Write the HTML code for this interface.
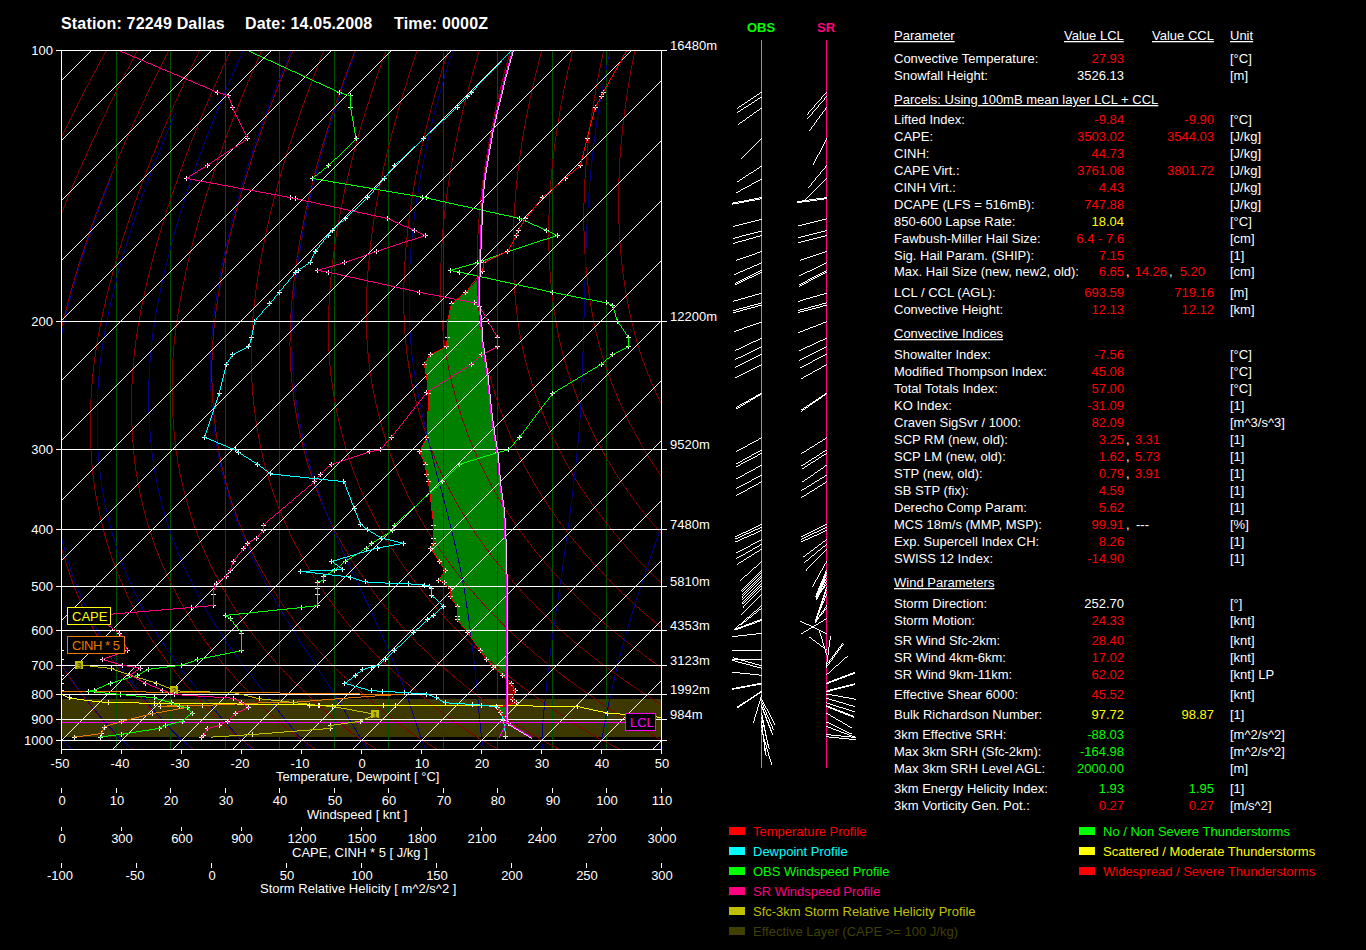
<!DOCTYPE html><html><head><meta charset="utf-8"><style>html,body{margin:0;padding:0;background:#000;overflow:hidden}svg{display:block}text{font-family:"Liberation Sans",sans-serif;font-size:13px}</style></head><body>
<svg width="1366" height="950" viewBox="0 0 1366 950" shape-rendering="crispEdges">
<rect width="1366" height="950" fill="#000"/>
<g shape-rendering="auto">
<rect x="61" y="699" width="600" height="38" fill="#3c3800"/>
<polygon points="478.8,278 465.8,292.3 451.6,303.7 447.5,321 447.3,337.4 446.5,346.8 430,354.7 424.4,364.2 425.6,372 427.6,384 428.2,393.4 427.8,429 426.8,437.3 419.7,451.8 425.2,464.4 426.8,474.7 428.4,481.6 433.9,525.8 433.1,538.4 433.1,543.9 430.7,548.2 439.4,561.3 445,570.8 438.6,580.2 444.2,582.6 450,588.9 450,596.8 457.1,606.3 457.3,616.1 457.3,619.7 467.8,632.8 480.1,650.4 486.3,659.5 493.5,667.2 502.4,675.3 506.8,681 506.8,629.2 506,574.7 505.2,543.1 503.7,511.6 499.7,484.2 497.4,455 494.2,436 491,413.9 487.1,376 483.9,354 481.6,339.2 480.8,322.6 478.4,300.5" fill="#008000"/>
<polygon points="496,707 506.8,707 505.5,721" fill="#008000"/>
<polygon points="506.8,680.5 511,683.2 515,690.3 512.6,699 516.2,702.9 506.8,706" fill="#800000"/>
</g>
<g><line x1="116.5" y1="50" x2="116.5" y2="749" stroke="#005000"/>
<line x1="170.5" y1="50" x2="170.5" y2="749" stroke="#005000"/>
<line x1="225.5" y1="50" x2="225.5" y2="749" stroke="#005000"/>
<line x1="279.5" y1="50" x2="279.5" y2="749" stroke="#005000"/>
<line x1="334.5" y1="50" x2="334.5" y2="749" stroke="#005000"/>
<line x1="388.5" y1="50" x2="388.5" y2="749" stroke="#005000"/>
<line x1="443.5" y1="50" x2="443.5" y2="749" stroke="#005000"/>
<line x1="497.5" y1="50" x2="497.5" y2="749" stroke="#005000"/>
<line x1="552.5" y1="50" x2="552.5" y2="749" stroke="#005000"/>
<line x1="606.5" y1="50" x2="606.5" y2="749" stroke="#005000"/>
<path d="M106.5 50v1m-1 0v2m-1 0v2m-1 0v2m-1 0v2m-1 0v1m-1 0v2m-1 0v2m-1 0v2m-1 0v2m-1 0v2m-1 0v2m-1-1v2m-1 0v2m-1 0v2m-1 0v2m-1 0v2m-1 0v2m-1 0v2m-1 0v2m-1 0v1m-1 0v2m-1 0v2m0-1v1m-1 0v2m-1 0v2m-1 0v2m-1 0v2m-1 0v2m-1 0v2m-1 0v2m-1 0v2m-1 0v2m-1-1v3m-1 0v2m-1 0v2m-1 0v2m-1 0v2m-1 0v2m-1 0v2m-1 0v2m-1 0v2m0-1v1m-1 0v2m-1 0v2m-1 0v2m-1 0v2m-1 0v2m0 601v1m0-1v1m1 0v1m-.5-.5h1m-1 0h1m0 1h1m-1 0h1m0 1h1m-1 0h1m0 1h1m-1 0h1m0 1h1m-1 0h1m0 1h1m-1 0h1m0 1h1m-1 0h2m-1 1h2m-1 1h2m65.5-698.5v1m-1 0v2m-1 0v2m-1 0v2m-1 0v2m-1 0v2m-1 0v2m-1 0v2m-1 0v2m-1 0v2m-1 0v2m-1 0v1m0-1v1m-1 0v2m-1 0v2m-1 0v2m-1 0v2m-1 0v2m-1 0v2m-1 0v2m-1 0v2m-1 0v2m-1 0v2m0-1v1m-1 0v2m-1 0v2m-1 0v2m-1 0v2m-1 0v2m-1 0v2m-1 0v2m-1 0v2m-1 0v2m0-1v2m-1 0v2m-1 0v2m-1 0v2m-1 0v2m-1 0v2m-1 0v2m-1 0v2m-1 0v2m-1 0v1m0-1v2m-1 0v3m-1 0v2m-1 0v2m-1 0v2m-1 0v2m-1 0v2m-1 0v3m-1-1v3m-1 0v2m-1 0v2m-1 0v2m-1 0v3m-1 0v2m-1 0v2m-1 0v1m0-1v2m-1 0v3m-1 0v2m-1 0v2m-1 0v2m-1 0v3m-1 0v2m0-1v1m-1 0v2m-1 0v3m-1 0v2m-1 0v2m-1 0v3m-1 0v2m0-1v1m-1 0v3m-1 0v2m-1 0v2m-1 0v3m-1 0v2m-1 0v2m0-1v2m-1 0v2m-1 0v3m-1 0v2m-1 0v3m0 449v2m0-1v1m1 0v1m0-1v1m1 0v2m0-1v1m1 0v1m0-1v1m1 0v2m0-1v1m1 0v1m0-1v2m1 0v1m0-1v1m1 0v1m0-1v1m1 0v2m0-1v1m1 0v1m0-1v1m1 0v2m0-1v1m1 0v1m0-1v1m1 0v1m0-1v2m1 0v1m0-1v1m1 0v1m0-1v1m1 0v2m0-1v1m1 0v1m0-1v1m1 0v1m0-1v1m1 0v2m0-1v1m1 0v1m0-1v1m1 0v2m0-1v1m1 0v1m0-1v1m1 0v1m0-1v1m1 0v1m0-1v2m1 0v1m0-1v1m1 0v1m0-1v1m1 0v1m0-1v1m1 0v2m0-1v1m1 0v1m0-1v1m1 0v1m0-1v1m1 0v2m0-1v1m1 0v1m0-1v1m1 0v1m0-1v1m1 0v1m0-1v1m1 0v1m0-1v2m1 0v1m0-1v1m1 0v1m0-1v1m1 0v1m0-1v1m1 0v1m0-1v1m1 0v1m0-1v1m1 0v2m0-1v1m1 0v1m0-1v1m1 0v1m0-1v1m1 0v1m0-1v1m1 0v1m0-1v1m1 0v1m0-1v1m1 0v1m0-1v1m1 0v1m0-1v1m1 0v1m0-1v1m1 0v1m0-1v1m1 0v1m0-1v1m1 0v2m1-1v2m1-1v2m-.5-.5h2m-1 1h2m-1 1h2m-1 1h2m-1 1h2m-1 1h2m-1 1h2m0 1h1m-1 0h2m-1 1h2m-1 1h2m-1 1h2m-1 0h1m0 1h1m-1 0h1m0 1h1m-1 0h1m0 1h1m-1 0h1m0 1h1m-1 0h1m0 1h1m-1 0h2m35.5-698.5v2m-1 0v2m-1 0v2m-1 0v2m-1 0v2m-1 0v2m-1 0v2m-1 0v2m-1 0v2m-1 0v2m-1 0v2m0-1v1m-1 0v2m-1 0v2m-1 0v2m-1 0v2m-1 0v2m-1 0v2m-1 0v2m-1 0v2m-1 0v2m-1 0v2m0-1v1m-1 0v2m-1 0v2m-1 0v3m-1 0v2m-1 0v2m-1 0v2m-1 0v2m-1 0v2m-1 0v1m0-1v2m-1 0v3m-1 0v2m-1 0v2m-1 0v2m-1 0v2m-1 0v2m-1 0v3m-1 0v1m0-1v2m-1 0v2m-1 0v2m-1 0v3m-1 0v2m-1 0v2m-1 0v2m-1 0v3m0-1v1m-1 0v2m-1 0v2m-1 0v3m-1 0v2m-1 0v2m-1 0v3m-1 0v2m0-1v1m-1 0v3m-1 0v2m-1 0v2m-1 0v3m-1 0v2m-1 0v3m0-1v1m-1 0v2m-1 0v3m-1 0v2m-1 0v3m-1 0v2m-1 0v2m0-1v2m-1 0v2m-1 0v3m-1 0v2m-1 0v3m-1 0v3m0-1v1m-1 0v2m-1 0v3m-1 0v3m-1 0v2m-1 0v3m0-1v1m-1 0v3m-1 0v3m-1 0v2m-1 0v3m-1 0v1m0-1v3m-1 0v3m-1 0v3m-1 0v3m-1 0v1m0-1v3m-1 0v3m-1 0v3m-1 0v3m-1 0v1m0-1v3m-1 0v3m-1 0v3m-1 0v3m0-1v1m-1 0v3m-1 0v4m-1 0v3m0-1v1m-1 0v3m-1 0v4m-1 0v3m0-1v1m-1 0v4m-1 0v3m-1 0v3m0-1v2m-1 0v4m-1 0v3m-1 0v2m0-1v3m-1 0v4m-1 0v3m0-1v2m-1 0v4m-1 0v4m0-1v1m-1 0v4m-1 0v4m0-1v2m0 215v2m0-1v3m1 0v1m0-1v3m1 0v1m0-1v4m0-1v1m1 0v3m0-1v1m1 0v3m0-1v1m1 0v3m0-1v1m1 0v2m0-1v2m1 0v2m0-1v2m1 0v2m0-1v2m1 0v1m0-1v3m1 0v1m0-1v3m1-1v4m0-1v1m1 0v3m1-1v3m0-1v1m1 0v2m0-1v1m1 0v3m0-1v1m1 0v2m0-1v1m1 0v3m0-1v1m1 0v2m0-1v1m1 0v2m0-1v1m1 0v2m0-1v2m1 0v2m0-1v1m1 0v2m0-1v1m1 0v2m0-1v1m1 0v2m0-1v1m1 0v2m0-1v2m1 0v1m0-1v2m1 0v1m0-1v2m1 0v2m0-1v1m1 0v2m0-1v1m1 0v2m1-1v3m1-1v3m1-1v2m0-1v1m1 0v2m1-1v3m1-1v2m1 0v1m0-1v2m1 0v1m0-1v2m1 0v1m0-1v1m1 0v2m0-1v1m1 0v1m0-1v2m1 0v1m0-1v1m1 0v2m0-1v1m1 0v2m0-1v1m1 0v1m0-1v1m1 0v2m0-1v1m1 0v1m1 0v1m0-1v2m1-1v2m1 0v1m0-1v2m1 0v1m0-1v1m1 0v1m0-1v2m1 0v1m0-1v1m1 0v2m1-1v2m0-1v1m1 0v2m1-1v2m0-1v1m1 0v1m1 0v1m0-1v1m1 0v1m0-1v2m1 0v1m0-1v1m1 0v1m0-1v1m1 0v2m0-1v1m1 0v1m0-1v1m1 0v2m1-1v2m0-1v1m1 0v1m1-1v2m1 0v1m0-1v1m1 0v1m0-1v2m1 0v1m0-1v1m1 0v1m0-1v1m1 0v1m0-1v1m1 0v2m0-1v1m1 0v1m0-1v1m1 0v2m1-1v2m1-1v2m1-1v2m1-1v2m1 0v1m0-1v1m1 0v1m0-1v1m1 0v1m0-1v2m1 0v1m0-1v1m1 0v1m0-1v1m1 0v1m0-1v1m1 0v2m1-1v2m1-1v2m0-1v1m1 0v1m1-1v2m1-1v2m1 0v1m0-1v1m1 0v1m0-1v1m1 0v1m0-1v1m1 0v1m0-1v1m1 0v1m0-1v1m1 0v2m1-1v2m1-1v2m1-1v1m1 0v1m0-1v1m1 0v1m-.5-.5h1m0 1h1m-1 0h1m0 1h1m-1 0h1m0 1h1m-1 0h1m0 1h1m-1 0h1m0 1h1m-1 0h1m0 1h1m-1 0h1m0 1h1m-1 1h2m0 1h1m-1 0h1m0 1h1m-1 0h1m0 1h1m-1 0h1m0 1h1m-1 0h1m0 1h1m-1 0h2m-1 1h2m-1 1h2m-1 1h2m0 1h1m-1 0h2m-1 1h2m-1 1h2m-1 0h1m0 1h1m-1 0h1m0 1h1m-1 0h1m0 1h1m-1 0h1m0 1h2m-1 0h1m0 1h1m-1 0h1m0 1h1m-1 0h1m0 1h1m5.5-699.5v2m-1 0v2m-1 0v2m-1 0v2m-1 0v2m-1 0v2m-1 0v2m-1 0v2m-1 0v2m-1 0v3m-1 0v1m0-1v2m-1 0v2m-1 0v2m-1 0v2m-1 0v2m-1 0v2m-1 0v3m-1 0v2m-1 0v2m-1 0v2m0-1v1m-1 0v2m-1 0v3m-1 0v2m-1 0v2m-1 0v2m-1 0v2m-1 0v3m-1 0v2m0-1v1m-1 0v2m-1 0v3m-1 0v2m-1 0v2m-1 0v2m-1 0v3m-1 0v2m-1 0v2m0-1v1m-1 0v3m-1 0v2m-1 0v3m-1 0v2m-1 0v2m-1 0v3m-1 0v2m0-1v1m-1 0v3m-1 0v2m-1 0v3m-1 0v2m-1 0v2m-1 0v3m-1 0v1m0-1v3m-1 0v2m-1 0v3m-1 0v2m-1 0v3m-1 0v3m-1-1v3m-1 0v3m-1 0v2m-1 0v3m-1 0v3m-1 0v1m0-1v2m-1 0v3m-1 0v3m-1 0v3m-1 0v2m-1 0v2m0-1v2m-1 0v3m-1 0v3m-1 0v3m-1 0v3m0-1v1m-1 0v3m-1 0v3m-1 0v3m-1 0v3m0-1v1m-1 0v3m-1 0v3m-1 0v3m-1 0v3m0-1v1m-1 0v4m-1 0v3m-1 0v3m-1 0v2m0-1v3m-1 0v3m-1 0v3m-1 0v3m0-1v2m-1 0v3m-1 0v4m-1 0v2m0-1v3m-1 0v4m-1 0v3m-1 0v1m0-1v4m-1 0v4m-1 0v3m0-1v2m-1 0v4m-1 0v5m0-1v1m-1 0v4m-1 0v5m-1-1v5m-1 0v5m0-1v1m-1 0v5m-1 0v3m0-1v3m-1 0v5m-1 0v1m0-1v6m-1 0v3m0-1v5m-1 0v4m0-1v4m-1 0v4m0-1v4m-1 0v4m0-1v6m-1 0v2m0-1v8m0-1v3m-1 0v4m0-1v7m0-1v6m-1 0v2m0-1v7m0-1v6m0-1v7m0-1v7m0-1v6m0-1v6m0-1v6m0-1v7m0-1v6m0-1v2m1 0v3m0-1v6m0-1v6m0-1v2m1 0v3m0-1v6m0-1v3m1 0v2m0-1v5m0-1v3m1 0v2m0-1v5m0-1v2m1 0v3m0-1v4m1 0v1m0-1v5m0-1v1m1 0v4m0-1v2m1 0v3m0-1v3m1 0v1m0-1v5m0-1v1m1 0v3m0-1v2m1 0v3m0-1v2m1 0v2m0-1v3m1 0v2m0-1v3m1 0v1m0-1v4m0-1v1m1 0v3m0-1v1m1 0v3m0-1v2m1 0v2m0-1v2m1 0v2m0-1v2m1 0v2m0-1v2m1 0v2m0-1v2m1 0v2m0-1v2m1 0v2m0-1v2m1 0v2m0-1v1m1 0v3m0-1v1m1 0v2m0-1v2m1 0v2m0-1v1m1 0v3m0-1v1m1 0v2m0-1v1m1 0v3m0-1v1m1 0v2m0-1v1m1 0v2m1 0v1m0-1v3m1 0v1m0-1v2m1 0v1m0-1v2m1 0v1m0-1v2m1 0v2m0-1v2m1 0v1m0-1v2m1 0v2m0-1v1m1 0v2m0-1v1m1 0v2m0-1v1m1 0v2m0-1v1m1 0v2m1 0v1m0-1v2m1 0v1m0-1v2m1 0v1m0-1v2m1 0v1m0-1v2m1 0v1m0-1v2m1 0v1m0-1v1m1 0v2m0-1v1m1 0v2m1 0v1m0-1v2m1 0v1m0-1v1m1 0v2m0-1v1m1 0v2m0-1v1m1 0v2m1-1v2m0-1v1m1 0v2m1-1v2m1 0v1m0-1v2m1 0v1m0-1v1m1 0v2m0-1v1m1 0v2m1-1v2m1 0v1m0-1v1m1 0v1m0-1v2m1 0v1m0-1v1m1 0v2m0-1v1m1 0v2m1-1v2m1-1v2m1 0v1m0-1v1m1 0v2m0-1v1m1 0v1m0-1v1m1 0v2m0-1v1m1 0v1m1 0v1m0-1v1m1 0v1m0-1v2m1 0v1m0-1v1m1 0v2m1-1v1m1 0v1m0-1v2m1 0v1m0-1v1m1 0v1m0-1v1m1 0v2m0-1v1m1 0v1m0-1v1m1 0v1m1 0v1m0-1v1m1 0v1m0-1v1m1 0v2m0-1v1m1 0v1m0-1v1m1 0v1m1 0v1m0-1v1m1 0v1m0-1v1m1 0v1m0-1v2m1 0v1m0-1v1m1 0v1m0-1v1m1 0v1m1 0v1m0-1v1m1 0v1m0-1v1m1 0v1m0-1v1m1 0v2m0-1v1m1 0v1m0-1v1m1 0v1m1 0v1m0-1v1m1 0v1m0-1v1m1 0v1m0-1v1m1 0v1m0-1v1m1 0v2m1-1v1m1 0v1m0-1v2m1-1v2m1 0v1m0-1v1m1 0v1m0-1v1m1 0v1m0-1v1m1 0v1m1 0v1m0-1v1m1 0v1m0-1v1m1 0v1m0-1v1m1 0v1m0-1v1m1 0v1m0-1v1m1 0v1m1 0v1m0-1v1m1 0v1m-.5-.5h1m0 1h1m-1 0h1m0 1h1m-1 0h1m0 1h1m-1 0h1m0 1h1m-1 1h2m0 1h1m-1 0h1m0 1h1m-1 0h1m0 1h1m-1 0h1m0 1h1m-1 0h1m0 1h1m-1 0h1m0 1h2m-1 1h2m-1 0h1m0 1h1m-1 0h1m0 1h1m-1 0h1m0 1h1m-1 0h1m0 1h1m0 1h1m-1 0h1m0 1h1m-1 0h1m0 1h1m-1 0h2m-1 1h2m-1 1h2m0 1h1m-1 0h1m0 1h1m-1 0h1m0 1h1m-1 0h2m-1 1h2m0 1h1m-1 0h2m-1 1h2m-1 0h1m0 1h1m-1 0h1m0 1h1m-1 0h1m0 1h2m-1 0h1m0 1h1m-1 0h1m0 1h1m-1 0h1m0 1h1m-1 0h2m0 1h1m-1 0h1m0 1h1m-24.5-699.5v2m-1 0v2m-1 0v2m-1 0v3m-1 0v2m-1 0v2m-1 0v2m-1 0v2m-1 0v2m-1 0v3m0-1v1m-1 0v2m-1 0v2m-1 0v2m-1 0v3m-1 0v2m-1 0v2m-1 0v2m-1 0v3m-1 0v2m0-1v1m-1 0v2m-1 0v3m-1 0v2m-1 0v2m-1 0v3m-1 0v2m-1 0v2m-1 0v2m0-1v2m-1 0v2m-1 0v3m-1 0v2m-1 0v2m-1 0v3m-1 0v2m-1 0v3m0-1v1m-1 0v2m-1 0v3m-1 0v2m-1 0v3m-1 0v2m-1 0v3m-1 0v2m0-1v1m-1 0v3m-1 0v3m-1 0v2m-1 0v3m-1 0v3m-1 0v2m0-1v1m-1 0v3m-1 0v3m-1 0v2m-1 0v3m-1 0v3m-1 0v1m0-1v3m-1 0v3m-1 0v3m-1 0v2m-1 0v3m-1 0v1m0-1v3m-1 0v3m-1 0v3m-1 0v3m-1 0v3m0-1v1m-1 0v3m-1 0v3m-1 0v3m-1 0v4m0-1v1m-1 0v3m-1 0v3m-1 0v3m-1 0v3m0-1v2m-1 0v3m-1 0v3m-1 0v4m-1 0v1m0-1v3m-1 0v4m-1 0v4m-1 0v2m0-1v2m-1 0v4m-1 0v4m-1 0v2m0-1v3m-1 0v4m-1 0v4m0-1v1m-1 0v4m-1 0v4m-1 0v2m0-1v4m-1 0v4m-1 0v3m0-1v3m-1 0v4m-1 0v4m0-1v2m-1 0v5m-1 0v3m0-1v4m-1 0v6m-1-1v6m-1 0v3m0-1v4m-1 0v5m0-1v3m-1 0v6m0-1v3m-1 0v6m0-1v4m-1 0v4m0-1v8m0-1v1m-1 0v7m0-1v8m0-1v3m-1 0v4m0-1v7m0-1v8m0-1v7m0-1v6m0-1v7m0-1v7m0-1v3m1 0v3m0-1v6m0-1v6m0-1v5m1 0v2m0-1v6m0-1v5m0-1v2m1 0v4m0-1v6m0-1v1m1 0v4m0-1v4m1 0v2m0-1v5m0-1v1m1 0v4m0-1v3m1 0v2m0-1v4m1 0v1m0-1v5m0-1v1m1 0v4m0-1v2m1 0v3m0-1v2m1 0v3m0-1v2m1 0v3m0-1v2m1 0v2m0-1v3m1 0v2m0-1v3m1 0v1m0-1v3m1 0v2m0-1v3m1 0v1m0-1v3m1 0v2m0-1v2m1 0v2m0-1v2m1 0v2m0-1v2m1 0v2m0-1v2m1 0v2m0-1v2m1 0v2m0-1v2m1 0v2m0-1v2m1 0v2m0-1v1m1 0v3m1-1v3m1 0v1m0-1v3m1 0v1m0-1v2m1 0v2m0-1v2m1 0v2m0-1v1m1 0v2m0-1v1m1 0v2m1 0v1m0-1v3m1 0v1m0-1v2m1 0v1m0-1v2m1 0v2m0-1v1m1 0v2m0-1v1m1 0v2m1 0v1m0-1v2m1 0v2m0-1v1m1 0v2m0-1v1m1 0v2m0-1v1m1 0v2m1 0v1m0-1v2m1 0v1m0-1v2m1 0v2m0-1v1m1 0v2m0-1v1m1 0v2m0-1v1m1 0v1m1 0v1m0-1v2m1 0v2m0-1v1m1 0v2m0-1v1m1 0v1m1 0v1m0-1v2m1 0v1m0-1v2m1 0v1m0-1v1m1 0v2m0-1v1m1 0v2m1-1v2m1 0v2m0-1v1m1 0v2m0-1v1m1 0v1m1 0v1m0-1v2m1 0v1m0-1v1m1 0v2m0-1v1m1 0v1m0-1v1m1 0v2m1-1v2m1 0v1m0-1v1m1 0v2m0-1v1m1 0v1m1 0v1m0-1v2m1 0v1m0-1v1m1 0v2m1-1v2m1-1v2m1 0v1m0-1v1m1 0v2m0-1v1m1 0v1m1 0v1m0-1v1m1 0v1m0-1v2m1 0v1m0-1v1m1 0v1m1 0v1m0-1v1m1 0v1m0-1v2m1 0v1m0-1v1m1 0v1m1 0v1m0-1v1m1 0v1m0-1v2m1 0v1m0-1v1m1 0v1m1 0v1m0-1v1m1 0v1m0-1v1m1 0v2m0-1v1m1 0v1m1-1v2m1 0v1m0-1v1m1 0v1m0-1v1m1 0v1m1 0v1m0-1v1m1 0v1m0-1v1m1 0v2m0-1v1m1 0v1m0-1v1m1 0v1m1 0v1m0-1v1m1 0v1m0-1v1m1 0v1m0-1v1m1 0v1m1 0v1m0-1v1m1 0v1m0-1v1m1 0v2m1-1v1m1 0v1m0-1v1m1 0v1m0-1v1m1 0v2m1-1v1m1 0v1m0-1v2m1 0v1m0-1v1m1 0v1m0-1v1m1 0v1m1-1v2m1-1v2m1 0v1m0-1v1m1 0v1m0-1v1m1 0v1m1-1v2m1 0v1m-.5-.5h1m0 1h1m-1 0h1m0 1h2m-1 1h1m0 1h1m-1 0h1m0 1h1m-1 0h1m0 1h1m-1 0h1m0 1h2m-1 1h2m-1 0h1m0 1h1m-1 1h2m0 1h1m-1 0h1m0 1h1m-1 0h1m0 1h1m-1 0h1m0 1h1m-1 0h1m0 1h1m0 1h1m-1 0h1m0 1h1m-1 0h1m0 1h1m-1 0h2m0 1h1m-1 0h1m0 1h1m-1 0h1m0 1h1m-1 0h1m0 1h1m-1 0h1m0 1h2m-1 1h2m-1 0h1m0 1h1m-1 0h1m0 1h2m-1 1h1m0 1h1m-1 0h2m-1 1h2m-1 1h2m0 1h1m-1 0h1m0 1h1m-1 0h2m-1 1h2m0 1h1m-1 0h1m0 1h1m-1 0h2m-1 1h2m0 1h1m-1 0h2m-1 1h2m-1 0h1m0 1h1m-1 0h1m0 1h2m-1 0h1m0 1h1m-1 0h1m0 1h1m-1 0h2m0 1h1m-1 0h1m0 1h1m-1 0h2m-1 1h2m0 1h1m-54.5-699.5v2m-1 0v3m-1 0v2m-1 0v2m-1 0v2m-1 0v3m-1 0v2m-1 0v2m-1 0v3m-1 0v1m0-1v2m-1 0v2m-1 0v3m-1 0v2m-1 0v2m-1 0v3m-1 0v2m-1 0v2m-1 0v3m0-1v1m-1 0v2m-1 0v3m-1 0v2m-1 0v3m-1 0v2m-1 0v3m-1 0v2m-1 0v1m0-1v3m-1 0v2m-1 0v3m-1 0v2m-1 0v3m-1 0v3m-1 0v2m-1 0v1m0-1v3m-1 0v2m-1 0v3m-1 0v3m-1 0v2m-1 0v3m-1 0v2m0-1v2m-1 0v3m-1 0v3m-1 0v2m-1 0v3m-1 0v3m-1 0v1m0-1v3m-1 0v3m-1 0v3m-1 0v3m-1 0v3m-1 0v1m0-1v3m-1 0v3m-1 0v3m-1 0v3m-1 0v3m0-1v1m-1 0v3m-1 0v3m-1 0v4m-1 0v3m-1 0v1m0-1v3m-1 0v3m-1 0v4m-1 0v3m-1 0v1m0-1v4m-1 0v3m-1 0v4m-1 0v2m0-1v3m-1 0v3m-1 0v4m-1 0v3m0-1v2m-1 0v4m-1 0v4m-1 0v3m0-1v2m-1 0v4m-1 0v4m-1 0v2m0-1v4m-1 0v4m-1 0v3m0-1v3m-1 0v5m-1 0v3m0-1v3m-1 0v5m-1 0v3m0-1v3m-1 0v6m-1 0v2m0-1v5m-1 0v5m0-1v2m-1 0v6m-1 0v2m0-1v7m-1 0v2m0-1v7m-1 0v2m0-1v8m-1 0v1m0-1v9m0-1v5m-1 0v3m0-1v8m0-1v8m0-1v8m0-1v6m-1 0v1m0-1v1m1 0v6m0-1v8m0-1v7m0-1v6m0-1v7m0-1v1m1 0v6m0-1v6m0-1v3m1 0v3m0-1v6m0-1v3m1 0v4m0-1v6m1-1v5m0-1v3m1 0v3m0-1v5m1 0v1m0-1v5m0-1v1m1 0v5m0-1v2m1 0v3m0-1v2m1 0v3m0-1v3m1 0v2m0-1v3m1 0v2m0-1v3m1 0v2m0-1v3m1 0v2m0-1v3m1 0v2m0-1v2m1 0v3m0-1v2m1 0v3m0-1v1m1 0v3m0-1v1m1 0v4m0-1v1m1 0v3m1-1v4m1 0v1m0-1v3m1 0v1m0-1v3m1 0v2m0-1v1m1 0v3m0-1v1m1 0v3m0-1v1m1 0v2m1 0v1m0-1v3m1 0v1m0-1v2m1 0v2m0-1v2m1 0v2m0-1v1m1 0v2m1 0v1m0-1v3m1 0v1m0-1v2m1 0v2m0-1v1m1 0v2m1 0v1m0-1v2m1 0v2m0-1v2m1 0v2m0-1v1m1 0v2m1-1v3m1 0v1m0-1v2m1 0v2m0-1v1m1 0v2m1-1v2m1 0v2m0-1v1m1 0v2m0-1v1m1 0v2m1 0v1m0-1v2m1 0v2m0-1v1m1 0v2m0-1v1m1 0v1m1 0v1m0-1v2m1 0v2m0-1v1m1 0v2m1-1v2m1 0v2m0-1v1m1 0v2m0-1v1m1 0v1m1 0v1m0-1v2m1 0v1m0-1v2m1 0v2m1-1v2m1 0v1m0-1v1m1 0v2m0-1v1m1 0v1m1 0v1m0-1v2m1 0v1m0-1v1m1 0v2m0-1v1m1 0v1m1 0v1m0-1v2m1 0v2m1-1v2m1 0v1m0-1v1m1 0v2m0-1v1m1 0v1m1 0v1m0-1v1m1 0v2m0-1v1m1 0v1m0-1v1m1 0v1m1 0v1m0-1v2m1 0v1m0-1v1m1 0v1m1 0v1m0-1v2m1 0v1m0-1v1m1 0v1m1 0v1m0-1v1m1 0v2m0-1v1m1 0v1m0-1v1m1 0v1m1 0v1m0-1v1m1 0v2m0-1v1m1 0v1m1 0v1m0-1v1m1 0v1m0-1v1m1 0v1m1 0v1m0-1v2m1 0v1m0-1v1m1 0v1m1-1v2m1 0v1m0-1v1m1 0v2m1-1v1m1 0v1m0-1v2m1 0v1m0-1v1m1 0v1m1 0v1m0-1v1m1 0v1m0-1v1m1 0v1m1 0v1m0-1v1m1 0v1m0-1v1m1 0v2m1-1v1m1 0v1m0-1v1m1 0v2m1-1v1m1 0v1m0-1v1m1 0v2m1-1v2m1-1v2m1 0v1m0-1v1m1 0v1m.5 .5h2m-1 1h1m0 1h1m-1 0h1m0 1h2m-1 0h1m0 1h1m-1 1h2m0 1h1m-1 0h1m0 1h1m-1 0h1m0 1h1m-1 1h2m0 1h1m-1 0h1m0 1h1m-1 1h2m0 1h1m-1 0h1m0 1h1m-1 0h1m0 1h1m-1 0h1m0 1h1m0 1h1m-1 0h1m0 1h1m-1 0h1m0 1h2m-1 1h1m0 1h1m-1 0h1m0 1h1m-1 0h1m0 1h2m-1 0h1m0 1h1m-1 1h2m0 1h1m-1 0h1m0 1h1m-1 0h1m0 1h1m-1 0h1m0 1h2m-1 1h1m0 1h1m-1 0h1m0 1h1m-1 0h2m0 1h1m-1 0h1m0 1h1m-1 0h1m0 1h2m-1 1h1m0 1h1m-1 0h2m-1 1h2m0 1h1m-1 0h1m0 1h1m-1 0h1m0 1h1m-1 0h2m0 1h1m-1 0h1m0 1h1m-1 0h1m0 1h2m-1 1h2m-1 0h1m0 1h1m-1 0h1m0 1h2m-1 1h2m-1 1h2m-1 1h2m0 1h1m-1 0h2m-1 1h2m0 1h1m-1 0h1m0 1h1m-1 0h2m-1 1h2m0 1h1m-1 0h2m-1 1h2m0 1h1m-1 0h2m-1 1h2m-1 0h1m0 1h2m-1 1h2m-1 0h1m0 1h1m-1 0h2m0 1h1m-1 0h1m0 1h1m-1 0h2m0 1h1m-1 0h1m0 1h1m-1 0h2m0 1h1m-84.5-699.5v3m-1 0v2m-1 0v2m-1 0v3m-1 0v2m-1 0v3m-1 0v2m-1 0v2m-1 0v3m0-1v1m-1 0v2m-1 0v3m-1 0v2m-1 0v3m-1 0v2m-1 0v3m-1 0v2m-1 0v3m0-1v1m-1 0v2m-1 0v3m-1 0v3m-1 0v2m-1 0v3m-1 0v2m-1 0v3m0-1v1m-1 0v3m-1 0v2m-1 0v3m-1 0v3m-1 0v3m-1 0v2m-1 0v2m0-1v2m-1 0v3m-1 0v3m-1 0v3m-1 0v3m-1 0v2m-1 0v2m0-1v2m-1 0v3m-1 0v3m-1 0v3m-1 0v3m-1 0v3m0-1v1m-1 0v4m-1 0v3m-1 0v3m-1 0v3m-1 0v2m0-1v2m-1 0v4m-1 0v3m-1 0v3m-1 0v3m0-1v2m-1 0v3m-1 0v4m-1 0v3m-1 0v3m0-1v2m-1 0v3m-1 0v4m-1 0v4m-1 0v1m0-1v4m-1 0v4m-1 0v4m-1 0v1m0-1v4m-1 0v4m-1 0v4m-1 0v1m0-1v5m-1 0v4m-1 0v4m0-1v2m-1 0v4m-1 0v5m-1 0v1m0-1v5m-1 0v5m-1 0v1m0-1v6m-1 0v5m0-1v2m-1 0v6m-1 0v3m0-1v4m-1 0v7m0-1v1m-1 0v7m-1 0v2m0-1v7m-1 0v3m0-1v7m-1 0v2m0-1v9m0-1v3m-1 0v6m0-1v9m0-1v7m-1 0v1m0-1v8m0-1v8m0-1v8m0-1v2m1 0v5m0-1v7m0-1v8m0-1v3m1 0v4m0-1v6m0-1v4m1 0v3m0-1v7m0-1v1m1 0v5m0-1v4m1 0v2m0-1v6m0-1v1m1 0v6m0-1v2m1 0v4m0-1v3m1 0v2m0-1v4m1 0v2m0-1v4m1 0v2m0-1v4m1 0v1m0-1v4m1 0v2m0-1v3m1 0v2m0-1v3m1 0v2m0-1v3m1 0v2m0-1v2m1 0v3m0-1v2m1 0v3m0-1v1m1 0v4m1-1v4m1 0v1m0-1v3m1 0v2m0-1v2m1 0v3m0-1v1m1 0v2m1 0v1m0-1v3m1 0v2m0-1v2m1 0v2m0-1v2m1 0v2m1 0v1m0-1v3m1 0v1m0-1v2m1 0v3m0-1v1m1 0v2m1 0v1m0-1v3m1 0v1m0-1v2m1 0v2m0-1v1m1 0v2m1 0v1m0-1v3m1 0v1m0-1v2m1 0v2m1-1v3m1 0v1m0-1v2m1 0v2m0-1v1m1 0v2m1 0v1m0-1v2m1 0v2m0-1v1m1 0v2m1 0v1m0-1v2m1 0v2m1-1v2m1 0v1m0-1v2m1 0v2m0-1v1m1 0v2m1 0v1m0-1v1m1 0v2m0-1v1m1 0v2m1 0v1m0-1v2m1 0v1m0-1v1m1 0v2m1 0v1m0-1v2m1 0v2m1-1v2m1 0v1m0-1v2m1 0v1m0-1v1m1 0v2m1 0v1m0-1v1m1 0v2m0-1v1m1 0v2m1 0v1m0-1v1m1 0v2m0-1v1m1 0v1m1 0v1m0-1v2m1 0v1m0-1v1m1 0v2m1 0v1m0-1v1m1 0v2m1-1v2m1 0v1m0-1v1m1 0v2m0-1v1m1 0v1m1 0v1m0-1v1m1 0v2m1-1v2m1 0v1m0-1v2m1 0v1m1 0v1m0-1v1m1 0v2m1-1v2m1 0v1m0-1v1m1 0v2m1-1v2m1 0v1m0-1v1m1 0v1m0-1v1m1 0v1m1 0v1m0-1v2m1 0v1m0-1v1m1 0v1m1 0v1m0-1v1m1 0v1m1 0v1m0-1v2m1 0v1m0-1v1m1 0v1m1 0v1m0-1v1m1 0v1m0-1v1m1 0v1m1 0v1m0-1v1m1 0v2m0-1v1m1 0v1m1 0v1m0-1v1m1 0v1m0-1v1m1 0v1m1 0v1m0-1v1m1 0v1m1 0v1m0-1v1m1 0v1m0-1v1m1 0v1m1 0v1m0-1v1m1 0v2m1-1v1m1 0v1m0-1v2m1 0v1m0-1v1m1 0v1m1 0v1m0-1v1m1 0v1m0-1v1m1 0v1m1 0v1m-.5-.5h1m0 1h2m-1 1h1m0 1h1m-1 0h1m0 1h2m-1 1h1m0 1h1m-1 0h1m0 1h2m-1 0h1m0 1h1m-1 1h2m0 1h1m-1 0h1m0 1h1m-1 1h2m0 1h1m-1 0h1m0 1h1m-1 0h1m0 1h1m0 1h1m-1 0h1m0 1h1m-1 0h1m0 1h1m0 1h1m-1 0h1m0 1h2m-1 0h1m0 1h1m-1 0h1m0 1h1m0 1h1m-1 0h1m0 1h1m-1 0h1m0 1h1m0 1h1m-1 0h1m0 1h1m-1 0h1m0 1h2m-1 1h2m-1 0h1m0 1h1m0 1h1m-1 0h1m0 1h1m-1 0h1m0 1h2m-1 1h1m0 1h1m-1 0h1m0 1h1m-1 0h2m0 1h1m-1 0h1m0 1h1m-1 1h2m0 1h1m-1 0h1m0 1h1m-1 0h1m0 1h2m-1 0h1m0 1h1m-1 0h1m0 1h1m0 1h1m-1 0h1m0 1h1m-1 0h2m0 1h1m-1 0h1m0 1h1m-1 0h1m0 1h2m-1 1h2m-1 1h2m0 1h1m-1 0h1m0 1h1m-1 0h2m0 1h1m-1 0h1m0 1h1m-1 0h1m0 1h1m-1 0h2m0 1h1m-1 0h1m0 1h1m-1 0h1m0 1h2m-1 0h1m0 1h1m-1 0h1m0 1h2m-1 1h2m-1 1h2m0 1h1m-1 0h2m-1 1h2m0 1h1m-1 0h1m0 1h1m-1 0h2m0 1h1m-1 0h1m0 1h1m-1 0h2m0 1h1m-1 0h1m0 1h1m-1 0h2m0 1h1m-1 0h2m-1 0h1m0 1h1m-1 0h1m0 1h2m-1 0h1m0 1h1m-1 0h1m0 1h2m-1 0h1m0 1h1m-1 0h2m0 1h1m-1 0h1m0 1h1m-1 0h2m0 1h1m-1 0h2m-113.5-698.5v3m-1 0v2m-1 0v3m-1 0v2m-1 0v3m-1 0v2m-1 0v3m-1 0v3m-1 0v1m0-1v2m-1 0v3m-1 0v2m-1 0v3m-1 0v3m-1 0v2m-1 0v3m-1 0v3m0-1v1m-1 0v2m-1 0v3m-1 0v3m-1 0v3m-1 0v2m-1 0v3m-1 0v2m0-1v2m-1 0v3m-1 0v3m-1 0v3m-1 0v3m-1 0v3m-1 0v2m0-1v1m-1 0v4m-1 0v3m-1 0v3m-1 0v3m-1 0v3m-1 0v1m0-1v3m-1 0v3m-1 0v3m-1 0v4m-1 0v3m-1 0v1m0-1v3m-1 0v4m-1 0v3m-1 0v3m-1 0v3m0-1v2m-1 0v4m-1 0v3m-1 0v4m-1 0v2m0-1v3m-1 0v3m-1 0v4m-1 0v4m-1 0v1m0-1v4m-1 0v4m-1 0v4m-1 0v2m0-1v4m-1 0v4m-1 0v4m-1 0v1m0-1v5m-1 0v5m-1 0v3m0-1v3m-1 0v5m-1 0v5m0-1v1m-1 0v5m-1 0v6m0-1v1m-1 0v6m-1 0v4m0-1v3m-1 0v7m-1 0v1m0-1v7m-1 0v4m0-1v5m-1 0v6m0-1v4m-1 0v6m0-1v5m-1 0v5m0-1v9m0-1v1m-1 0v8m0-1v9m0-1v9m0-1v8m0-1v8m0-1v8m0-1v8m0-1v2m1 0v5m0-1v7m0-1v3m1 0v5m0-1v6m1 0v1m0-1v6m0-1v3m1 0v4m0-1v4m1 0v3m0-1v4m1 0v2m0-1v5m1 0v1m0-1v6m1-1v6m1 0v1m0-1v5m1 0v1m0-1v4m1 0v1m0-1v5m1 0v1m0-1v4m1 0v2m0-1v3m1 0v2m0-1v2m1 0v4m0-1v1m1 0v3m1 0v1m0-1v4m1 0v1m0-1v3m1 0v2m0-1v2m1 0v3m0-1v1m1 0v3m1 0v1m0-1v3m1 0v2m0-1v2m1 0v2m1 0v1m0-1v3m1 0v2m0-1v2m1 0v3m1-1v3m1 0v1m0-1v2m1 0v3m0-1v1m1 0v2m1 0v1m0-1v2m1 0v3m0-1v1m1 0v2m1 0v1m0-1v2m1 0v3m1-1v2m1 0v2m0-1v2m1 0v2m0-1v1m1 0v2m1 0v1m0-1v2m1 0v2m1-1v3m1 0v1m0-1v2m1 0v2m1-1v2m1 0v2m0-1v1m1 0v2m1 0v1m0-1v2m1 0v2m1-1v2m1 0v2m0-1v1m1 0v2m1 0v1m0-1v2m1 0v2m1-1v2m1 0v1m0-1v2m1 0v1m1 0v1m0-1v2m1 0v2m0-1v1m1 0v1m1 0v1m0-1v2m1 0v1m1 0v1m0-1v2m1 0v1m0-1v1m1 0v2m1 0v1m0-1v1m1 0v2m1 0v1m0-1v1m1 0v2m0-1v1m1 0v1m1 0v1m0-1v2m1 0v2m1-1v2m1 0v1m0-1v1m1 0v2m1 0v1m0-1v1m1 0v2m1-1v2m1 0v1m0-1v1m1 0v2m1-1v2m1 0v2m1-1v2m1 0v1m0-1v1m1 0v1m1 0v1m0-1v2m1 0v1m0-1v1m1 0v1m1 0v1m0-1v1m1 0v2m1-1v2m1 0v1m0-1v1m1 0v1m1 0v2m0-1v1m1 0v1m1 0v1m0-1v1m1 0v2m1-1v1m1 0v2m0-1v1m1 0v1m1 0v1m0-1v1m1 0v1m0-1v1m1 0v1m1 0v1m0-1v1m1 0v2m1-1v2m1 0v1m0-1v1m1 0v1m1 0v1m0-1v1m1 0v1m1 0v1m0-1v1m1 0v2m1-1v1m1 0v1m0-1v1m1 0v1m1 0v1m0-1v1m1 0v2m1-1v2m1 0v1m0-1v1m1 0v1m1-1v2m1 0v1m0-1v1m1 0v1m1 0v1m-.5-.5h1m0 1h2m-1 1h1m0 1h1m-1 0h1m0 1h1m0 1h1m-1 0h1m0 1h2m-1 1h2m-1 1h2m0 1h1m-1 1h2m0 1h1m-1 0h1m0 1h1m-1 1h2m0 1h1m-1 0h1m0 1h1m0 1h1m-1 0h1m0 1h1m-1 0h1m0 1h1m0 1h1m-1 0h1m0 1h2m-1 1h2m-1 1h2m0 1h1m-1 0h1m0 1h1m0 1h1m-1 0h1m0 1h1m-1 0h1m0 1h2m-1 1h2m0 1h1m-1 0h1m0 1h1m-1 0h1m0 1h1m0 1h1m-1 0h1m0 1h1m-1 0h1m0 1h2m-1 0h1m0 1h1m0 1h1m-1 0h1m0 1h1m-1 0h1m0 1h1m0 1h1m-1 0h2m-1 1h2m0 1h1m-1 0h1m0 1h2m-1 1h1m0 1h1m-1 0h2m0 1h1m-1 0h1m0 1h1m-1 0h1m0 1h1m0 1h1m-1 0h1m0 1h2m-1 0h1m0 1h1m-1 0h1m0 1h1m0 1h1m-1 0h1m0 1h1m-1 0h2m0 1h1m-1 0h1m0 1h1m-1 0h1m0 1h2m-1 0h1m0 1h1m0 1h1m-1 0h1m0 1h1m-1 0h1m0 1h2m-1 0h1m0 1h1m-1 0h1m0 1h2m-1 1h2m-1 1h2m0 1h1m-1 0h2m-1 1h2m0 1h1m-1 0h1m0 1h2m-1 0h1m0 1h1m-1 0h1m0 1h2m-1 0h1m0 1h1m-1 0h1m0 1h2m-1 0h1m0 1h1m-1 0h1m0 1h2m-1 1h2m-1 1h2m0 1h1m-1 0h2m0 1h1m-1 0h2m-1 1h2m0 1h1m-1 0h2m-1 1h2m0 1h1m-1 0h2m-1 1h2m0 1h1m-1 0h2m0 1h1m-1 0h2m-1 0h1m0 1h2m-1 1h2m-1 0h1m0 1h2m-1 0h1m0 1h1m-1 0h1m0 1h2m-1 0h1m0 1h1m-1 0h2m0 1h1m-1 0h2m0 1h1m-1 0h2m-142.5-698.5v1m-1 0v2m-1 0v3m-1 0v3m-1 0v2m-1 0v3m-1 0v3m-1 0v2m-1 0v3m0-1v1m-1 0v3m-1 0v2m-1 0v3m-1 0v3m-1 0v3m-1 0v3m-1 0v3m-1-1v3m-1 0v3m-1 0v3m-1 0v3m-1 0v3m-1 0v3m-1 0v1m0-1v3m-1 0v3m-1 0v3m-1 0v3m-1 0v4m-1 0v3m0-1v1m-1 0v3m-1 0v3m-1 0v4m-1 0v3m-1 0v3m-1 0v1m0-1v4m-1 0v3m-1 0v4m-1 0v3m-1 0v3m0-1v2m-1 0v3m-1 0v4m-1 0v4m-1 0v3m0-1v2m-1 0v4m-1 0v4m-1 0v4m-1 0v1m0-1v4m-1 0v4m-1 0v4m-1 0v3m0-1v3m-1 0v4m-1 0v5m-1 0v2m0-1v4m-1 0v5m-1 0v4m0-1v2m-1 0v5m-1 0v5m-1 0v1m0-1v6m-1 0v7m-1-1v7m-1 0v5m0-1v3m-1 0v7m-1 0v1m0-1v8m-1 0v3m0-1v7m-1 0v4m0-1v7m-1 0v4m0-1v10m0-1v1m-1 0v9m0-1v9m0-1v9m0-1v5m-1 0v4m0-1v1m1 0v8m0-1v8m0-1v8m0-1v5m1 0v3m0-1v8m0-1v2m1 0v5m0-1v5m1 0v2m0-1v8m1-1v7m0-1v1m1 0v5m0-1v2m1 0v5m0-1v2m1 0v5m0-1v1m1 0v5m0-1v1m1 0v5m1-1v5m1 0v1m0-1v4m1 0v3m0-1v3m1 0v3m0-1v2m1 0v3m0-1v1m1 0v4m1 0v1m0-1v4m1 0v2m0-1v2m1 0v3m0-1v1m1 0v3m1 0v2m0-1v2m1 0v3m0-1v1m1 0v3m1 0v1m0-1v3m1 0v2m0-1v2m1 0v2m1 0v1m0-1v3m1 0v2m0-1v1m1 0v3m1 0v1m0-1v2m1 0v3m0-1v1m1 0v2m1 0v2m0-1v1m1 0v3m1 0v1m0-1v2m1 0v2m0-1v1m1 0v2m1 0v2m0-1v2m1 0v2m1-1v3m1 0v2m0-1v1m1 0v2m1 0v1m0-1v2m1 0v2m1 0v1m0-1v2m1 0v2m0-1v1m1 0v2m1 0v1m0-1v2m1 0v1m1 0v1m0-1v2m1 0v2m0-1v1m1 0v2m1 0v1m0-1v2m1 0v1m1 0v1m0-1v2m1 0v2m1-1v2m1 0v2m0-1v1m1 0v2m1 0v1m0-1v1m1 0v2m1 0v1m0-1v2m1 0v1m1 0v1m0-1v2m1 0v2m1-1v2m1 0v1m0-1v1m1 0v2m1 0v1m0-1v1m1 0v2m1 0v1m0-1v1m1 0v2m1-1v2m1 0v2m0-1v1m1 0v1m1 0v1m0-1v1m1 0v2m1 0v1m0-1v1m1 0v2m1 0v1m0-1v1m1 0v1m1 0v1m0-1v2m1 0v1m0-1v1m1 0v2m1 0v1m0-1v1m1 0v1m1 0v1m0-1v2m1 0v1m1 0v1m0-1v1m1 0v2m1-1v2m1 0v1m0-1v1m1 0v1m1 0v1m0-1v1m1 0v2m1 0v1m0-1v1m1 0v1m1 0v1m0-1v1m1 0v2m0-1v1m1 0v1m1 0v1m0-1v1m1 0v1m1 0v1m0-1v1m1 0v2m1-1v2m1 0v1m1-1v2m1 0v2m1-1v1m1 0v2m1-1v2m1 0v1m0-1v1m1 0v1m1 0v1m0-1v1m1 0v1m1 0v1m0-1v1m1 0v1m0-1v1m1 0v1m1 0v1m0-1v1m1 0v1m1 0v1m0-1v1m1 0v1m1 0v1m0-1v1m1 0v2m1-1v1m1 0v2m0-1v1m1 0v1m1 0v1m-.5-.5h1m0 1h2m-1 1h2m0 1h1m-1 0h1m0 1h1m-1 1h2m0 1h1m-1 1h2m0 1h1m-1 0h1m0 1h1m0 1h1m-1 0h1m0 1h1m0 1h1m-1 0h1m0 1h1m-1 0h1m0 1h1m0 1h1m-1 0h1m0 1h1m0 1h1m-1 0h1m0 1h2m-1 1h2m0 1h1m-1 0h1m0 1h1m-1 1h2m0 1h1m-1 0h1m0 1h1m0 1h1m-1 0h1m0 1h2m-1 1h2m-1 1h2m0 1h1m-1 0h1m0 1h1m0 1h1m-1 0h1m0 1h2m-1 1h2m-1 1h2m0 1h1m-1 0h1m0 1h1m0 1h1m-1 0h1m0 1h2m-1 0h1m0 1h1m-1 0h1m0 1h1m0 1h1m-1 0h1m0 1h2m-1 0h1m0 1h1m0 1h1m-1 0h1m0 1h1m-1 0h1m0 1h2m-1 0h1m0 1h1m0 1h1m-1 0h1m0 1h1m-1 0h1m0 1h2m-1 1h2m0 1h1m-1 0h1m0 1h2m-1 1h2m-1 0h1m0 1h1m0 1h1m-1 0h1m0 1h2m-1 0h1m0 1h1m-1 0h1m0 1h1m0 1h1m-1 0h2m0 1h1m-1 0h1m0 1h1m-1 0h1m0 1h1m0 1h1m-1 0h2m0 1h1m-1 0h1m0 1h1m-1 0h1m0 1h2m-1 0h1m0 1h2m-1 1h2m-1 1h2m0 1h1m-1 0h1m0 1h2m-1 0h1m0 1h1m-1 0h1m0 1h2m-1 0h1m0 1h1m0 1h1m-1 0h2m-1 1h2m0 1h1m-1 0h1m0 1h2m-1 0h1m0 1h1m-1 0h1m0 1h2m-1 0h1m0 1h1m-1 0h1m0 1h2m-1 0h1m0 1h2m-1 0h1m0 1h1m-1 0h1m0 1h2m-1 0h1m0 1h1m0 1h1m-1 0h2m-1 1h2m0 1h1m-1 0h2m0 1h1m-1 0h2m-1 1h2m0 1h1m-1 0h2m0 1h1m-1 0h2m-1 1h2m0 1h1m-1 0h2m0 1h1m-1 0h2m-1 0h1m0 1h2m-1 0h1m0 1h1m-1 0h1m0 1h2m-1 0h1m0 1h2m-1 0h1m0 1h1m-1 0h2m0 1h1m-1 0h2m0 1h1m-1 0h2m-1 1h3m-172.5-698.5v1m-1 0v3m-1 0v2m-1 0v3m-1 0v3m-1 0v3m-1 0v3m-1 0v2m-1 0v2m0-1v2m-1 0v3m-1 0v3m-1 0v3m-1 0v3m-1 0v3m-1 0v4m-1-1v3m-1 0v4m-1 0v3m-1 0v3m-1 0v3m-1 0v3m0-1v1m-1 0v3m-1 0v4m-1 0v3m-1 0v3m-1 0v4m-1 0v1m0-1v3m-1 0v4m-1 0v3m-1 0v4m-1 0v4m0-1v1m-1 0v3m-1 0v4m-1 0v4m-1 0v4m-1 0v1m0-1v4m-1 0v4m-1 0v4m-1 0v4m0-1v1m-1 0v5m-1 0v4m-1 0v4m-1 0v1m0-1v5m-1 0v5m-1 0v5m0-1v1m-1 0v5m-1 0v5m-1 0v3m0-1v4m-1 0v5m-1 0v4m0-1v3m-1 0v6m-1 0v4m0-1v4m-1 0v7m-1 0v2m0-1v7m-1 0v5m0-1v5m-1 0v6m0-1v4m-1 0v7m0-1v6m-1 0v5m0-1v11m0-1v2m-1 0v8m0-1v10m0-1v9m0-1v9m0-1v9m0-1v7m1 0v2m0-1v8m0-1v6m1 0v2m0-1v8m0-1v2m1 0v6m0-1v2m1 0v5m0-1v3m1 0v4m0-1v4m1 0v4m0-1v2m1 0v5m0-1v2m1 0v4m0-1v2m1 0v4m1 0v1m0-1v5m1 0v2m0-1v3m1 0v3m0-1v2m1 0v4m0-1v1m1 0v4m1 0v1m0-1v3m1 0v4m0-1v1m1 0v4m1 0v1m0-1v3m1 0v2m0-1v2m1 0v3m1 0v1m0-1v3m1 0v3m0-1v1m1 0v3m1 0v1m0-1v3m1 0v3m0-1v1m1 0v2m1 0v2m0-1v2m1 0v2m1 0v1m0-1v3m1 0v2m0-1v1m1 0v3m1 0v1m0-1v2m1 0v2m1 0v1m0-1v3m1 0v2m0-1v1m1 0v2m1 0v2m0-1v1m1 0v2m1 0v2m0-1v1m1 0v2m1 0v2m0-1v1m1 0v2m1 0v1m0-1v2m1 0v3m1-1v2m1 0v2m0-1v1m1 0v2m1 0v2m0-1v1m1 0v2m1 0v1m0-1v2m1 0v2m1 0v1m0-1v1m1 0v2m1 0v1m0-1v2m1 0v2m0-1v1m1 0v1m1 0v2m0-1v1m1 0v2m1 0v1m0-1v1m1 0v2m1 0v1m0-1v2m1 0v1m1 0v1m0-1v2m1 0v1m1 0v1m0-1v2m1 0v1m1 0v1m0-1v2m1 0v1m1 0v1m0-1v2m1 0v1m1 0v1m0-1v2m1 0v1m1 0v1m0-1v2m1 0v1m1 0v1m0-1v2m1 0v1m0-1v1m1 0v1m1 0v2m0-1v1m1 0v1m1 0v2m1-1v2m1 0v1m0-1v1m1 0v2m1 0v1m0-1v1m1 0v1m1 0v1m0-1v2m1 0v1m1 0v1m0-1v1m1 0v1m1 0v2m0-1v1m1 0v1m1 0v1m0-1v1m1 0v2m1-1v2m1 0v1m1 0v1m0-1v1m1 0v2m1-1v2m1 0v1m1 0v1m0-1v1m1 0v2m1-1v2m1 0v1m0-1v1m1 0v1m1 0v1m0-1v1m1 0v1m1 0v2m1-1v2m1 0v1m0-1v1m1 0v1m1 0v1m0-1v1m1 0v1m1 0v1m0-1v1m1 0v1m1 0v1m0-1v1m1 0v2m1-1v2m1 0v1m1-1v2m1 0v1m1 0v1m0-1v1m1 0v1m1 0v1m0-1v1m1 0v1m1 0v1m0-1v1m1 0v2m1-1v1m1 0v2m1-1v1m1 0v1m-.5-.5h1m0 1h1m0 1h1m-1 0h1m0 1h1m0 1h1m-1 0h1m0 1h1m0 1h1m-1 0h1m0 1h1m0 1h1m-1 0h1m0 1h1m0 1h1m-1 0h1m0 1h1m0 1h1m-1 0h1m0 1h2m-1 1h1m0 1h2m-1 1h2m0 1h1m-1 0h1m0 1h1m-1 1h2m0 1h1m-1 0h1m0 1h1m0 1h1m-1 0h1m0 1h1m0 1h1m-1 0h2m0 1h1m-1 0h1m0 1h1m0 1h1m-1 0h1m0 1h1m0 1h1m-1 0h1m0 1h2m-1 1h2m0 1h1m-1 0h1m0 1h1m-1 1h2m0 1h1m-1 0h1m0 1h2m-1 1h2m0 1h1m-1 0h1m0 1h1m0 1h1m-1 0h1m0 1h2m-1 0h1m0 1h1m0 1h1m-1 0h1m0 1h2m-1 1h2m-1 1h2m0 1h1m-1 0h1m0 1h2m-1 1h2m0 1h1m-1 0h1m0 1h2m-1 1h2m0 1h1m-1 0h1m0 1h2m-1 1h2m-1 1h2m0 1h1m-1 0h1m0 1h2m-1 0h1m0 1h1m0 1h1m-1 0h1m0 1h2m-1 0h1m0 1h1m-1 1h2m0 1h1m-1 0h2m0 1h1m-1 0h1m0 1h2m-1 1h2m0 1h1m-1 0h1m0 1h1m-1 0h1m0 1h2m-1 0h1m0 1h1m0 1h1m-1 0h2m0 1h1m-1 0h1m0 1h1m-1 0h1m0 1h2m-1 1h2m0 1h1m-1 0h2m0 1h1m-1 0h1m0 1h2m-1 1h2m-1 0h1m0 1h1m0 1h1m-1 0h2m0 1h1m-1 0h1m0 1h2m-1 0h1m0 1h1m-1 0h1m0 1h2m-1 0h1m0 1h1m0 1h1m-1 0h2m0 1h1m-1 0h1m0 1h1m-1 0h2m0 1h1m-1 0h1m0 1h2m-1 0h1m0 1h2m-1 0h1m0 1h1m-1 0h1m0 1h2m-1 0h1m0 1h2m-1 1h2m-1 0h1m0 1h2m-1 0h1m0 1h1m0 1h1m-1 0h2m0 1h1m-1 0h2m-1 1h2m0 1h1m-1 0h2m0 1h1m-1 0h2m0 1h1m-1 0h2m-1 1h2m0 1h1m-1 0h2m0 1h1m-1 0h2m0 1h1m-1 0h2m-1 0h1m0 1h2m-1 0h1m0 1h2m-1 0h1m0 1h1m-1 0h1m0 1h2m-1 0h1m0 1h2m-1 0h1m0 1h2m-1 0h1m0 1h1m-1 0h2m0 1h1m-1 0h2m0 1h1m-202.5-699.5v1m-1 0v3m-1 0v3m-1 0v3m-1 0v3m-1 0v3m-1 0v3m-1 0v3m0-1v1m-1 0v3m-1 0v3m-1 0v4m-1 0v3m-1 0v3m-1 0v3m-1 0v1m0-1v3m-1 0v4m-1 0v3m-1 0v4m-1 0v3m-1 0v2m0-1v2m-1 0v4m-1 0v4m-1 0v3m-1 0v4m-1 0v2m0-1v3m-1 0v3m-1 0v4m-1 0v4m-1 0v4m0-1v1m-1 0v4m-1 0v4m-1 0v5m-1 0v3m0-1v2m-1 0v4m-1 0v5m-1 0v5m0-1v1m-1 0v4m-1 0v5m-1 0v5m0-1v1m-1 0v6m-1 0v5m-1 0v3m0-1v4m-1 0v6m-1 0v4m0-1v3m-1 0v7m-1 0v3m0-1v5m-1 0v8m0-1v1m-1 0v9m-1 0v3m0-1v8m-1 0v4m0-1v8m-1 0v3m0-1v11m0-1v4m-1 0v7m0-1v11m0-1v10m0-1v10m0-1v9m0-1v9m0-1v3m1 0v6m0-1v9m1-1v8m0-1v3m1 0v5m0-1v4m1 0v4m0-1v3m1 0v5m0-1v3m1 0v4m0-1v2m1 0v5m0-1v1m1 0v5m1 0v2m0-1v4m1 0v3m0-1v2m1 0v4m0-1v1m1 0v4m1 0v2m0-1v3m1 0v4m0-1v1m1 0v3m1 0v2m0-1v3m1 0v3m0-1v1m1 0v3m1 0v2m0-1v3m1 0v3m1 0v1m0-1v3m1 0v3m0-1v1m1 0v3m1 0v1m0-1v3m1 0v3m1-1v3m1 0v3m0-1v1m1 0v2m1 0v2m0-1v2m1 0v2m1 0v2m0-1v2m1 0v2m1 0v1m0-1v2m1 0v3m1-1v3m1 0v2m0-1v1m1 0v2m1 0v2m0-1v1m1 0v2m1 0v2m0-1v2m1 0v2m1 0v1m0-1v2m1 0v2m1 0v1m0-1v1m1 0v2m1 0v2m0-1v1m1 0v2m1 0v2m0-1v1m1 0v2m1 0v1m0-1v2m1 0v2m1 0v1m0-1v1m1 0v2m1 0v1m0-1v2m1 0v2m1 0v1m0-1v1m1 0v2m1 0v1m0-1v2m1 0v1m1 0v2m0-1v1m1 0v2m1 0v1m0-1v1m1 0v2m1 0v1m0-1v1m1 0v2m1 0v1m0-1v1m1 0v2m1 0v1m0-1v2m1 0v1m1 0v1m0-1v2m1 0v1m1 0v1m0-1v1m1 0v2m1 0v1m0-1v1m1 0v2m1 0v1m0-1v1m1 0v2m1 0v1m0-1v1m1 0v1m1 0v2m0-1v1m1 0v1m1 0v2m1-1v2m1 0v1m1 0v1m0-1v1m1 0v2m1-1v2m1 0v1m1 0v1m0-1v2m1 0v1m1 0v1m0-1v1m1 0v1m1 0v1m0-1v2m1 0v1m1 0v1m0-1v1m1 0v1m1 0v1m0-1v2m1 0v1m1 0v1m0-1v1m1 0v1m1 0v2m1-1v2m1 0v1m0-1v1m1 0v1m1 0v1m0-1v1m1 0v1m1 0v2m1-1v2m1 0v1m0-1v1m1 0v1m1 0v2m1-1v1m1 0v1m1 0v1m0-1v1m1 0v2m1-1v2m1 0v1m1-1v2m1 0v1m1 0v1m0-1v1m1 0v1m1 0v1m0-1v1m1 0v1m1 0v1m0-1v1m1 0v1m1 0v1m0-1v1m1 0v1m1 0v1m0-1v1m1 0v1m1 0v1m0-1v1m1 0v1m1 0v1m0-1v1m1 0v1m1 0v2m-.5-.5h2m0 1h1m-1 1h2m0 1h1m-1 1h2m0 1h1m-1 1h2m0 1h1m-1 1h2m0 1h1m-1 0h1m0 1h1m0 1h1m-1 0h1m0 1h1m0 1h1m-1 0h1m0 1h1m0 1h1m-1 0h1m0 1h1m0 1h1m-1 0h2m0 1h1m-1 1h2m0 1h1m-1 1h2m0 1h2m-1 1h1m0 1h2m-1 1h2m0 1h1m-1 0h1m0 1h1m0 1h1m-1 0h1m0 1h2m-1 1h1m0 1h2m-1 0h1m0 1h1m0 1h1m-1 0h1m0 1h2m-1 1h2m0 1h1m-1 0h1m0 1h1m0 1h1m-1 0h1m0 1h2m-1 1h2m0 1h1m-1 0h1m0 1h1m0 1h1m-1 0h1m0 1h2m-1 0h1m0 1h1m0 1h1m-1 0h1m0 1h2m-1 0h1m0 1h1m0 1h1m-1 0h1m0 1h2m-1 1h2m0 1h1m-1 0h1m0 1h2m-1 1h2m-1 1h2m0 1h1m-1 0h1m0 1h2m-1 1h2m0 1h1m-1 0h1m0 1h2m-1 0h1m0 1h1m0 1h1m-1 0h2m0 1h1m-1 0h1m0 1h1m0 1h1m-1 0h2m0 1h1m-1 0h1m0 1h2m-1 0h1m0 1h1m0 1h1m-1 0h1m0 1h2m-1 0h1m0 1h1m0 1h1m-1 0h2m0 1h1m-1 0h1m0 1h2m-1 0h1m0 1h1m-1 0h1m0 1h1m0 1h1m-1 0h2m0 1h1m-1 0h1m0 1h2m-1 0h1m0 1h1m0 1h1m-1 0h2m0 1h1m-1 0h1m0 1h2m-1 0h1m0 1h1m0 1h1m-1 0h2m-1 1h2m0 1h1m-1 0h1m0 1h2m-1 0h1m0 1h2m-1 0h1m0 1h1m0 1h1m-1 0h2m0 1h1m-1 0h1m0 1h1m-1 0h2m0 1h1m-1 0h1m0 1h2m-1 0h1m0 1h2m-1 1h2m0 1h1m-1 0h2m0 1h1m-1 0h1m0 1h2m-1 0h1m0 1h1m-1 0h2m0 1h1m-1 0h1m0 1h2m-1 0h1m0 1h2m-1 0h1m0 1h2m-1 1h2m-1 0h1m0 1h2m-1 0h1m0 1h2m-1 1h2m0 1h1m-1 0h2m0 1h1m-1 0h2m0 1h1m-1 0h2m-1 1h3m-1 1h2m0 1h1m-1 0h2m0 1h1m-1 0h2m0 1h1m-1 0h2m-213.5-689.5v1m-1 0v4m-1 0v3m-1 0v3m-1 0v3m-1 0v3m-1 0v3m-1 0v2m0-1v3m-1 0v3m-1 0v4m-1 0v3m-1 0v3m-1 0v4m-1 0v1m0-1v3m-1 0v4m-1 0v4m-1 0v3m-1 0v4m-1 0v1m0-1v4m-1 0v4m-1 0v4m-1 0v4m-1 0v3m0-1v2m-1 0v4m-1 0v4m-1 0v4m-1 0v4m0-1v2m-1 0v4m-1 0v5m-1 0v5m-1 0v1m0-1v5m-1 0v5m-1 0v5m-1 0v1m0-1v5m-1 0v6m-1 0v4m0-1v3m-1 0v6m-1 0v6m0-1v2m-1 0v7m-1 0v5m0-1v3m-1 0v8m-1 0v2m0-1v9m-1 0v4m0-1v7m-1 0v6m0-1v9m-1 0v3m0-1v11m0-1v9m-1 0v2m0-1v11m0-1v11m0-1v10m0-1v3m1 0v7m0-1v9m0-1v5m1 0v4m0-1v8m1 0v1m0-1v9m0-1v1m1 0v7m0-1v1m1 0v7m1-1v6m1 0v2m0-1v5m1 0v3m0-1v3m1 0v4m0-1v1m1 0v5m1 0v1m0-1v4m1 0v4m0-1v1m1 0v4m1 0v2m0-1v2m1 0v4m0-1v1m1 0v3m1 0v3m0-1v2m1 0v3m1 0v2m0-1v2m1 0v3m1 0v1m0-1v3m1 0v3m0-1v1m1 0v3m1 0v2m0-1v2m1 0v3m1 0v2m0-1v2m1 0v2m1 0v2m0-1v2m1 0v3m1-1v3m1 0v3m0-1v1m1 0v2m1 0v3m1-1v3m1 0v2m0-1v1m1 0v2m1 0v3m1-1v3m1 0v2m0-1v1m1 0v2m1 0v2m0-1v1m1 0v2m1 0v2m0-1v1m1 0v2m1 0v2m1-1v3m1 0v2m1-1v2m1 0v2m1 0v1m0-1v2m1 0v2m1 0v1m0-1v2m1 0v2m1 0v1m0-1v1m1 0v2m1 0v2m0-1v1m1 0v1m1 0v2m0-1v1m1 0v2m1 0v2m1-1v2m1 0v2m1-1v2m1 0v2m1 0v1m0-1v1m1 0v2m1 0v1m0-1v2m1 0v1m1 0v2m0-1v1m1 0v1m1 0v2m0-1v1m1 0v1m1 0v2m0-1v1m1 0v1m1 0v1m1 0v1m0-1v2m1 0v1m1 0v1m0-1v2m1 0v1m1 0v1m0-1v1m1 0v2m1 0v1m0-1v1m1 0v2m1 0v1m1-1v2m1 0v2m1-1v2m1 0v1m1 0v1m0-1v1m1 0v2m1 0v1m0-1v1m1 0v1m1 0v2m1-1v2m1 0v1m1 0v1m0-1v1m1 0v1m1 0v1m0-1v2m1 0v1m1 0v1m0-1v1m1 0v1m1 0v2m1-1v2m1 0v1m1-1v2m1 0v1m1 0v1m0-1v1m1 0v1m1 0v1m0-1v2m1 0v1m1 0v1m0-1v1m1 0v1m1 0v2m1-1v1m1 0v1m1 0v1m0-1v1m1 0v2m1-1v2m1 0v1m1 0v1m0-1v1m1 0v1m1 0v1m0-1v1m1 0v1m1 0v2m1-1v1m1 0v1m1 0v1m0-1v1m1 0v1m1 0v1m0-1v1m1 0v1m1 0v1m0-1v1m1 0v1m1 0v2m1-1v1m1 0v2m-.5-.5h2m0 1h1m0 1h1m-1 0h1m0 1h1m0 1h1m-1 0h1m0 1h1m0 1h1m-1 0h1m0 1h1m0 1h1m-1 0h1m0 1h1m0 1h1m-1 0h1m0 1h1m0 1h1m-1 1h2m0 1h1m0 1h1m-1 0h1m0 1h1m0 1h1m-1 0h1m0 1h1m0 1h1m-1 0h1m0 1h2m-1 1h2m0 1h1m-1 0h1m0 1h1m0 1h1m-1 0h1m0 1h1m0 1h2m-1 1h2m0 1h1m-1 0h1m0 1h1m0 1h1m-1 0h1m0 1h1m0 1h1m-1 0h1m0 1h2m-1 1h2m0 1h1m-1 0h1m0 1h1m0 1h1m-1 0h1m0 1h2m0 1h1m-1 0h1m0 1h1m0 1h1m-1 0h1m0 1h2m-1 0h1m0 1h1m0 1h1m-1 0h1m0 1h1m0 1h1m-1 0h2m0 1h1m-1 0h1m0 1h1m0 1h1m-1 0h1m0 1h2m0 1h1m-1 0h1m0 1h2m-1 1h2m0 1h1m-1 0h1m0 1h1m0 1h1m-1 0h2m0 1h1m-1 0h1m0 1h1m0 1h1m-1 0h2m0 1h1m-1 0h1m0 1h1m0 1h1m-1 0h2m0 1h1m-1 0h1m0 1h2m-1 1h2m0 1h1m-1 0h1m0 1h2m0 1h1m-1 0h1m0 1h2m-1 0h1m0 1h1m0 1h1m-1 0h1m0 1h2m-1 0h1m0 1h2m-1 1h2m0 1h1m-1 0h1m0 1h2m-1 0h1m0 1h1m0 1h1m-1 0h2m0 1h1m-1 0h1m0 1h2m-1 0h1m0 1h1m0 1h1m-1 0h2m0 1h1m-1 0h1m0 1h2m-1 1h2m0 1h1m-1 0h2m0 1h1m-1 0h1m0 1h2m-1 0h1m0 1h1m0 1h1m-1 0h2m0 1h1m-1 0h1m0 1h2m-1 0h1m0 1h1m0 1h1m-1 0h2m0 1h1m-1 0h1m0 1h1m-182.5-655.5v2m-1 0v3m-1 0v4m-1 0v3m-1 0v3m-1 0v4m-1 0v3m0-1v1m-1 0v4m-1 0v4m-1 0v3m-1 0v4m-1 0v4m-1 0v1m0-1v3m-1 0v4m-1 0v4m-1 0v4m-1 0v4m0-1v1m-1 0v5m-1 0v4m-1 0v4m-1 0v5m-1-1v5m-1 0v5m-1 0v5m-1 0v3m0-1v3m-1 0v5m-1 0v5m-1 0v4m0-1v2m-1 0v6m-1 0v6m-1 0v2m0-1v5m-1 0v7m-1 0v3m0-1v5m-1 0v7m-1 0v3m0-1v7m-1 0v7m0-1v3m-1 0v10m0-1v1m-1 0v12m0-1v3m-1 0v10m0-1v11m-1 0v1m0-1v11m0-1v11m0-1v11m0-1v7m1 0v4m0-1v10m0-1v8m1 0v2m0-1v9m0-1v2m1 0v7m0-1v3m1 0v6m0-1v3m1 0v6m0-1v1m1 0v6m1 0v1m0-1v5m1 0v3m0-1v3m1 0v5m0-1v1m1 0v4m1 0v3m0-1v3m1 0v4m1-1v4m1 0v3m0-1v2m1 0v4m1 0v2m0-1v2m1 0v3m1 0v2m0-1v3m1 0v3m1-1v4m1 0v3m0-1v1m1 0v3m1 0v3m0-1v1m1 0v2m1 0v3m0-1v1m1 0v3m1 0v2m0-1v2m1 0v2m1 0v2m0-1v2m1 0v2m1 0v3m0-1v1m1 0v2m1 0v3m0-1v1m1 0v2m1 0v2m0-1v1m1 0v3m1 0v2m0-1v1m1 0v2m1 0v2m1 0v1m0-1v2m1 0v2m1 0v1m0-1v2m1 0v2m1 0v2m0-1v1m1 0v2m1 0v2m0-1v1m1 0v2m1 0v2m0-1v1m1 0v2m1 0v2m1-1v3m1 0v1m1 0v1m0-1v2m1 0v2m1 0v1m0-1v2m1 0v1m1 0v2m0-1v1m1 0v2m1 0v1m1 0v1m0-1v2m1 0v2m1 0v1m0-1v1m1 0v2m1 0v2m1-1v2m1 0v2m1-1v2m1 0v2m1 0v1m0-1v1m1 0v2m1 0v1m0-1v1m1 0v2m1 0v1m1 0v1m0-1v2m1 0v1m1 0v1m0-1v1m1 0v2m1 0v2m1-1v2m1 0v1m1 0v1m0-1v1m1 0v2m1 0v1m0-1v1m1 0v2m1 0v1m0-1v1m1 0v1m1 0v2m1-1v2m1 0v1m1 0v1m0-1v1m1 0v2m1 0v1m0-1v1m1 0v1m1 0v2m1-1v2m1 0v1m1 0v1m0-1v1m1 0v1m1 0v2m1-1v2m1 0v1m1 0v1m0-1v1m1 0v1m1 0v2m0-1v1m1 0v1m1 0v1m1 0v1m0-1v1m1 0v1m1 0v1m0-1v1m1 0v1m1 0v2m0-1v1m1 0v1m1 0v1m1 0v1m0-1v1m1 0v1m1 0v1m0-1v1m1 0v1m1 0v1m1 0v1m0-1v1m1 0v2m1-1v2m1 0v1m1 0v1m0-1v1m1 0v1m1 0v1m1 0v1m0-1v1m1 0v1m1 0v1m0-1v1m1 0v1m1 0v1m0-1v1m1 0v1m1 0v1m1 0v1m0-1v1m1 0v1m1 0v1m0-1v1m1 0v1m1 0v2m-.5-.5h2m0 1h1m0 1h1m-1 0h1m0 1h1m0 1h1m-1 0h1m0 1h1m0 1h1m-1 0h1m0 1h1m0 1h1m0 1h1m-1 0h1m0 1h1m0 1h1m-1 0h1m0 1h1m0 1h1m-1 0h1m0 1h1m0 1h2m-1 1h1m0 1h2m-1 0h1m0 1h1m0 1h1m-1 0h1m0 1h1m0 1h1m-1 0h1m0 1h1m0 1h1m0 1h1m-1 0h1m0 1h1m0 1h1m-1 0h2m0 1h1m-1 1h2m0 1h1m0 1h1m-1 0h1m0 1h1m0 1h1m-1 0h2m0 1h1m-1 0h1m0 1h1m0 1h1m-1 0h1m0 1h1m0 1h2m-1 0h1m0 1h1m0 1h1m-1 0h1m0 1h1m0 1h1m-1 0h2m0 1h1m0 1h1m-1 0h1m0 1h1m0 1h1m-1 0h2m0 1h1m-1 0h1m0 1h1m0 1h1m-1 0h1m0 1h2m0 1h1m-1 0h1m0 1h1m0 1h1m-1 0h2m0 1h1m-1 0h1m0 1h1m0 1h1m-1 0h2m0 1h1m0 1h1m-1 0h1m0 1h2m-1 0h1m0 1h1m0 1h1m-1 0h1m0 1h2m-1 1h2m0 1h2m-1 1h2m0 1h1m-1 0h1m0 1h2m-1 1h2m0 1h1m-1 0h1m0 1h2m-1 1h1m-151.5-618.5v2m-1 0v4m-1 0v4m-1 0v3m-1 0v4m-1 0v3m-1 0v2m0-1v3m-1 0v4m-1 0v4m-1 0v4m-1 0v4m-1 0v2m0-1v3m-1 0v5m-1 0v4m-1 0v4m-1 0v3m0-1v3m-1 0v5m-1 0v5m-1 0v4m-1 0v2m0-1v4m-1 0v6m-1 0v5m-1 0v3m0-1v4m-1 0v6m-1 0v5m-1 0v2m0-1v6m-1 0v7m-1 0v3m0-1v5m-1 0v8m-1 0v2m0-1v8m-1 0v7m0-1v4m-1 0v10m0-1v2m-1 0v11m0-1v6m-1 0v7m0-1v13m0-1v12m0-1v11m0-1v11m0-1v11m0-1v3m1 0v8m0-1v8m1 0v2m0-1v10m1-1v9m0-1v1m1 0v7m1 0v1m0-1v6m1 0v3m0-1v4m1 0v5m0-1v1m1 0v5m1 0v2m0-1v4m1 0v4m0-1v1m1 0v4m1 0v3m0-1v2m1 0v4m1 0v2m0-1v3m1 0v3m1 0v1m0-1v3m1 0v4m1-1v4m1 0v3m1 0v1m0-1v3m1 0v3m1 0v1m0-1v3m1 0v3m1-1v3m1 0v3m1 0v1m0-1v3m1 0v2m1 0v2m0-1v2m1 0v2m1 0v2m0-1v2m1 0v2m1 0v2m0-1v2m1 0v2m1 0v2m0-1v1m1 0v3m1 0v2m1 0v1m0-1v2m1 0v2m1 0v2m0-1v2m1 0v2m1 0v1m0-1v2m1 0v2m1 0v2m0-1v1m1 0v2m1 0v2m1 0v1m0-1v2m1 0v2m1 0v1m0-1v2m1 0v1m1 0v3m1-1v2m1 0v2m1 0v1m0-1v2m1 0v1m1 0v2m0-1v1m1 0v2m1 0v2m1-1v2m1 0v2m1 0v1m0-1v2m1 0v1m1 0v2m1-1v2m1 0v2m1 0v1m0-1v2m1 0v1m1 0v2m0-1v1m1 0v1m1 0v2m1 0v1m0-1v1m1 0v2m1 0v2m1-1v2m1 0v1m1 0v1m0-1v1m1 0v2m1 0v2m1-1v2m1 0v1m1 0v1m0-1v2m1 0v1m1 0v2m1-1v2m1 0v1m1 0v1m0-1v1m1 0v2m1 0v2m1-1v1m1 0v2m1 0v1m0-1v1m1 0v1m1 0v2m0-1v1m1 0v1m1 0v1m1 0v1m0-1v1m1 0v2m1 0v1m1-1v2m1 0v1m1 0v1m0-1v1m1 0v2m1 0v1m1-1v2m1 0v1m1 0v1m0-1v1m1 0v2m1 0v1m1-1v2m1 0v1m1 0v1m0-1v1m1 0v1m1 0v1m1 0v1m0-1v1m1 0v2m1 0v1m0-1v1m1 0v1m1 0v1m1 0v1m0-1v1m1 0v1m1 0v1m0-1v1m1 0v1m1 0v1m1 0v1m0-1v1m1 0v1m1 0v2m1-1v1m1 0v1m1 0v1m0-1v2m1 0v1m1 0v1m0-1v1m1 0v1m1 0v1m1-1v2m1 0v1m1 0v1m0-1v1m1 0v1m1 0v1m1 0v1m-.5-.5h1m0 1h1m0 1h1m-1 0h1m0 1h1m0 1h2m-1 1h1m0 1h1m0 1h1m-1 0h1m0 1h2m0 1h1m-1 0h1m0 1h1m0 1h1m-1 1h2m0 1h1m0 1h1m-1 0h1m0 1h1m0 1h1m-1 0h1m0 1h1m0 1h2m-1 1h1m0 1h1m0 1h1m-1 0h2m0 1h1m-1 1h2m0 1h1m0 1h1m-1 0h1m0 1h1m0 1h1m-1 0h1m0 1h1m0 1h2m-1 0h1m0 1h1m0 1h1m-1 0h1m0 1h1m0 1h2m-1 1h1m0 1h2m-1 1h2m0 1h1m0 1h1m-1 0h1m0 1h1m0 1h1m-1 0h2m0 1h1m-1 1h1m-120.5-578.5v3m-1 0v4m-1 0v4m-1 0v4m-1 0v4m-1 0v3m0-1v2m-1 0v4m-1 0v4m-1 0v5m-1 0v4m-1 0v2m0-1v4m-1 0v4m-1 0v5m-1 0v5m-1 0v1m0-1v5m-1 0v5m-1 0v6m-1 0v3m0-1v3m-1 0v6m-1 0v6m-1 0v3m0-1v5m-1 0v7m-1 0v5m0-1v3m-1 0v8m-1 0v5m0-1v5m-1 0v10m0-1v1m-1 0v12m-1 0v2m0-1v14m0-1v1m-1 0v12m0-1v13m0-1v13m0-1v12m0-1v11m0-1v7m1 0v4m0-1v11m0-1v2m1 0v9m0-1v2m1 0v8m0-1v2m1 0v8m0-1v1m1 0v7m1 0v1m0-1v6m1 0v3m0-1v3m1 0v5m1 0v1m0-1v5m1 0v4m0-1v1m1 0v5m1 0v2m0-1v3m1 0v3m1 0v2m0-1v3m1 0v4m1 0v1m0-1v3m1 0v3m1 0v2m0-1v3m1 0v3m1 0v1m0-1v3m1 0v3m1 0v1m0-1v3m1 0v2m1 0v3m0-1v1m1 0v3m1 0v3m1-1v3m1 0v3m1-1v3m1 0v2m1 0v2m0-1v2m1 0v2m1 0v3m0-1v1m1 0v2m1 0v2m1 0v1m0-1v2m1 0v3m1 0v1m0-1v2m1 0v2m1 0v2m0-1v1m1 0v2m1 0v2m1 0v2m0-1v1m1 0v2m1 0v3m1-1v2m1 0v2m1 0v1m0-1v2m1 0v2m1 0v2m0-1v1m1 0v2m1 0v2m1 0v1m0-1v1m1 0v2m1 0v2m0-1v1m1 0v2m1 0v1m1 0v2m0-1v1m1 0v2m1 0v2m1-1v2m1 0v2m1 0v1m0-1v1m1 0v2m1 0v2m1-1v2m1 0v2m1 0v1m0-1v1m1 0v2m1 0v1m1 0v1m0-1v2m1 0v1m1 0v2m1-1v2m1 0v1m1 0v2m0-1v1m1 0v1m1 0v2m1 0v1m0-1v1m1 0v2m1 0v1m1 0v1m0-1v1m1 0v2m1 0v1m0-1v1m1 0v1m1 0v2m1 0v1m0-1v1m1 0v1m1 0v2m1-1v2m1 0v1m1 0v2m1-1v2m1 0v1m1 0v1m0-1v1m1 0v2m1 0v1m1 0v1m0-1v1m1 0v1m1 0v2m0-1v1m1 0v1m1 0v1m1 0v1m0-1v1m1 0v1m1 0v2m1-1v2m1 0v1m1 0v1m0-1v1m1 0v1m1 0v1m1 0v1m0-1v1m1 0v2m1 0v1m1-1v2m1 0v1m1 0v1m0-1v1m1 0v1m1 0v1m1 0v1m0-1v1m1 0v1m1 0v1m1 0v1m0-1v1m1 0v2m1 0v1m0-1v1m1 0v1m1 0v1m1 0v1m0-1v1m1 0v1m1 0v1m1 0v1m0-1v1m1 0v1m1 0v1m0-1v1m1 0v1m1 0v1m1 0v1m-.5-.5h1m0 1h1m0 1h1m0 1h1m-1 0h1m0 1h1m0 1h1m-1 0h1m0 1h1m0 1h1m0 1h1m-1 0h1m0 1h1m0 1h2m-1 1h1m0 1h1m0 1h1m-1 0h1m-89.5-533.5v3m-1 0v5m-1 0v4m-1 0v4m-1 0v4m-1 0v2m0-1v4m-1 0v5m-1 0v5m-1 0v4m-1 0v3m0-1v4m-1 0v5m-1 0v5m-1 0v5m0-1v2m-1 0v6m-1 0v6m-1 0v5m0-1v2m-1 0v7m-1 0v7m-1 0v2m0-1v7m-1 0v8m-1 0v2m0-1v9m-1 0v7m0-1v5m-1 0v10m0-1v5m-1 0v10m0-1v12m-1 0v2m0-1v13m0-1v13m0-1v11m1 0v2m0-1v12m0-1v8m1 0v3m0-1v11m0-1v1m1 0v10m0-1v1m1 0v8m1 0v2m0-1v7m1 0v3m0-1v4m1 0v6m0-1v1m1 0v6m1 0v2m0-1v4m1 0v5m0-1v1m1 0v4m1 0v4m0-1v2m1 0v4m1 0v3m0-1v2m1 0v3m1 0v3m0-1v2m1 0v3m1 0v3m0-1v2m1 0v3m1 0v3m0-1v1m1 0v3m1 0v3m1 0v1m0-1v3m1 0v2m1 0v2m0-1v2m1 0v3m1 0v2m0-1v1m1 0v3m1 0v3m1 0v1m0-1v2m1 0v2m1 0v3m0-1v1m1 0v2m1 0v2m1 0v1m0-1v3m1 0v2m1 0v2m0-1v1m1 0v2m1 0v2m1 0v2m0-1v2m1 0v2m1 0v2m0-1v1m1 0v2m1 0v2m1 0v1m0-1v2m1 0v2m1 0v2m1-1v3m1 0v2m1 0v2m0-1v1m1 0v1m1 0v2m1 0v2m0-1v1m1 0v2m1 0v2m1-1v3m1 0v1m1 0v2m0-1v1m1 0v2m1 0v1m1 0v2m0-1v1m1 0v2m1 0v1m1 0v1m0-1v2m1 0v2m1 0v2m1-1v2m1 0v1m1 0v2m0-1v1m1 0v1m1 0v2m1 0v1m0-1v1m1 0v2m1 0v1m1 0v1m0-1v2m1 0v1m1 0v2m1-1v2m1 0v2m1 0v1m0-1v1m1 0v1m1 0v2m1 0v1m0-1v1m1 0v1m1 0v2m1 0v1m0-1v1m1 0v1m1 0v2m1 0v1m0-1v1m1 0v1m1 0v2m1 0v1m0-1v1m1 0v1m1 0v2m1-1v2m1 0v1m1 0v2m1-1v2m1 0v1m1 0v1m0-1v1m1 0v1m1 0v1m1 0v2m0-1v1m1 0v1m1 0v1m1 0v1m0-1v1m1 0v1m1 0v2m1 0v1m0-1v1m1 0v1m1 0v1m1 0v1m0-1v1m1 0v1m-58-484v4m-1 0v5m-1 0v4m-1 0v5m-1 0v4m0-1v2m-1 0v5m-1 0v6m-1 0v5m-1 0v3m0-1v4m-1 0v6m-1 0v6m-1 0v3m0-1v4m-1 0v7m-1 0v7m-1 0v1m0-1v8m-1 0v9m-1 0v1m0-1v10m-1 0v7m0-1v5m-1 0v11m0-1v4m-1 0v11m0-1v14m-1 0v1m0-1v14m0-1v13m0-1v3m1 0v10m0-1v13m0-1v2m1 0v10m0-1v4m1 0v7m0-1v4m1 0v7m0-1v3m1 0v8m1-1v7m1 0v4m0-1v4m1 0v6m1-1v6m1 0v4m0-1v2m1 0v5m1 0v2m0-1v3m1 0v4m1 0v2m0-1v3m1 0v4m1 0v2m0-1v3m1 0v3m1 0v3m0-1v2m1 0v3m1 0v3m0-1v1m1 0v3m1 0v3m1 0v1m0-1v3m1 0v3m1 0v2m0-1v2m1 0v2m1 0v3m1 0v1m0-1v3m1 0v2m1 0v2m0-1v2m1 0v2m1 0v2m1 0v1m0-1v3m1 0v2m1 0v3m1-1v3m1 0v2m1 0v2m0-1v1m1 0v2m1 0v2m1 0v1m0-1v2m1 0v3m1 0v2m0-1v1m1 0v2m1 0v2m1 0v2m0-1v1m1 0v1m1 0v2m1 0v2m0-1v1m1 0v2m1 0v2m1 0v1m0-1v2m1 0v2m1 0v2m1-1v2m1 0v2m1 0v2m1 0v1m0-1v2m1 0v1m1 0v3m1-1v2m1 0v2m1 0v1m0-1v1m1 0v2m1 0v2m1 0v1m0-1v1m1 0v2m1 0v1m1 0v2m0-1v1m1 0v1m1 0v2m1 0v1m0-1v1m1 0v2m1 0v1m1 0v2m0-1v1m1 0v1m1 0v2m1 0v1m0-1v1m-27-427v5m-1 0v5m-1 0v5m-1 0v5m-1 0v2m0-1v5m-1 0v6m-1 0v6m-1 0v4m0-1v4m-1 0v7m-1 0v7m-1 0v1m0-1v8m-1 0v8m-1 0v3m0-1v8m-1 0v10m0-1v1m-1 0v13m-1 0v3m0-1v16m0-1v3m-1 0v12m0-1v15m0-1v14m0-1v8m1 0v5m0-1v13m0-1v3m1 0v10m0-1v3m1 0v9m0-1v2m1 0v8m1 0v1m0-1v7m1 0v4m0-1v4m1 0v6m1 0v1m0-1v6m1 0v5m0-1v1m1 0v5m1 0v4m0-1v2m1 0v5m1 0v3m0-1v2m1 0v4m1 0v3m0-1v2m1 0v4m1 0v3m0-1v1m1 0v4m1 0v3m1 0v1m0-1v3m1 0v4m1 0v2m0-1v2m1 0v3m1 0v3m0-1v1m1 0v2m1 0v3m1 0v2m0-1v2m1 0v2m1 0v3m1 0v1m0-1v2m1 0v3m1 0v3m1-1v3m1 0v2m1 0v2m0-1v1m1 0v2m1 0v3m1 0v1m0-1v2m1 0v2m1 0v2m1 0v2m0-1v1m1 0v2m1 0v2" stroke="#800000" fill="none"/>
<path d="M70 748.5h2m-3-1h2m-3-1h1m0 1h1m-3-2h1m0 1h1m-3-2h1m0 1h1m-3-2h1m0 1h1m-3-2h1m0 1h1m-3-2h1m0 1h1m-3-2h1m0 1h1m-2-1h1m-1.5-1.5v1m1 0v1m-1-2v1m69.5 8.5h1m0 1h1m-3-2h1m0 1h1m-3-2h1m0 1h1m-3-2h1m0 1h1m-3-2h1m0 1h1m-3-1h2m-3-1h2m-3-1h2m-3-1h2m-3-1h2m-4-1h2m0 1h1m-4-2h2m-3-1h2m-3-1h2m-1.5-1.5v2m-1-3v2m-1-3v1m1 0v1m-2-3v1m1 0v1m-2-3v1m1 0v1m-2-4v2m1 0v1m-2-4v2m-1-3v2m-1-3v2m-1-3v2m-1-3v2m-1-3v2m-1-3v1m1 0v1m-2-3v1m1 0v1m-2-3v1m1 0v1m-2-3v1m1 0v1m-2-4v2m1 0v1m-2-4v2m-1-3v2m-1-3v1m1 0v1m-2-3v1m1 0v1m-2-4v2m1 0v1m-2-4v2m-1-3v1m1 0v1m-2-3v1m1 0v1m-2-3v1m1 0v1m-2-4v2m1 0v1m-2-4v1m1 0v1m-2-3v1m1 0v1m-2-4v2m1 0v1m-2-4v1m1 0v1m-2-3v1m1 0v1m-2-4v2m1 0v1m-2-4v1m1 0v1m-2-3v1m1 0v1m-2-3v1m1 0v1m-2-4v1m1 0v2m-2-4v1m1 0v1m-2-4v2m1 0v1m-2-4v1m1 0v1m-2-3v1m1 0v1m-2-4v2m1 0v1m-2-4v1m1 0v1m-2-4v2m1 0v1m-2-4v1m1 0v1m-2-3v1m1 0v1m-2-4v2m1 0v1m-2-4v1m1 0v1m-2-4v2m1 0v1m-2-4v1m1 0v1m-2-4v2m1 0v1m-2-4v1m1 0v1m-2-4v2m1 0v1m-2-4v1m1 0v1m-2-4v2m1 0v1m-2-4v1m1 0v1m-2-4v1m1 0v2m-1-3v1m129.5 84.5h1m0 1h1m-3-2h1m0 1h1m-3-2h1m0 1h1m-3-2h1m0 1h1m-3-2h1m0 1h1m-3-1h2m-3-1h2m-3-1h2m-3-1h2m-3-1h2m-4-1h2m0 1h1m-4-2h2m-3-1h2m-3-1h2m-3-1h2m-3-1h2m-3-1h2m-1.5-1.5v2m-1-3v2m-2-4v1m1 0v2m-2-4v1m1 0v1m-2-3v1m1 0v1m-2-3v1m1 0v1m-2-3v1m1 0v1m-2-3v1m1 0v1m-2-3v1m1 0v1m-2-3v1m1 0v1m-2-3v1m1 0v1m-2-3v1m1 0v1m-2-3v1m1 0v1m-2-4v1m1 0v2m-2-4v1m1 0v1m-2-3v1m1 0v1m-2-3v1m1 0v1m-2-3v1m1 0v1m-2-4v2m1 0v1m-2-4v2m-1-3v1m1 0v1m-2-3v1m1 0v1m-2-3v1m1 0v1m-2-4v2m1 0v1m-2-4v2m-1-3v1m1 0v1m-2-4v2m1 0v1m-3-4v1m1 0v1m-1-3v2m-2-4v1m1 0v2m-2-4v1m1 0v1m-2-3v1m1 0v1m-1-3v2m-2-4v1m1 0v2m-2-4v1m1 0v1m-2-4v2m1 0v1m-2-4v1m1 0v1m-2-3v1m1 0v1m-2-4v2m1 0v1m-2-4v2m-1-4v2m1 0v1m-3-4v1m1 0v1m-1-3v2m-2-4v1m1 0v2m-2-4v1m1 0v1m-2-4v1m1 0v2m-2-4v1m1 0v1m-2-4v2m1 0v1m-2-4v1m1 0v1m-2-4v2m1 0v1m-2-4v2m-2-4v1m1 0v1m1 0v1m-2-4v2m-2-4v1m1 0v2m-2-5v1m1 0v2m-2-4v1m1 0v1m-2-4v1m1 0v2m-2-5v2m1 0v1m-2-4v1m1 0v1m-2-4v2m1 0v1m-2-5v2m1 0v1m-2-4v2m-2-4v1m1 0v2m-2-5v1m1 0v2m-2-5v1m1 0v2m-2-4v1m1 0v1m-2-4v1m1 0v2m-2-5v1m1 0v2m-2-5v2m1 0v1m-2-5v2m1 0v1m-2-5v2m1 0v1m-2-5v3m-1-4v2m-1-4v2m1 0v1m-2-5v3m-1-5v3m-1-5v3m-2-6v1m1 0v3m-2-6v1m1 0v2m-2-5v1m1 0v2m-2-5v1m1 0v2m-2-5v1m1 0v2m-2-5v1m1 0v2m-2-5v1m1 0v2m-2-6v2m1 0v2m-2-6v1m1 0v2m-2-5v1m1 0v2m-2-5v1m1 0v2m-2-6v2m1 0v2m-2-6v1m1 0v2m-2-6v2m1 0v2m-2-6v1m1 0v2m-2-5v1m1 0v2m-2-6v1m1 0v3m-2-7v1m1 0v3m-2-6v1m1 0v2m-2-6v1m1 0v3m-1-6v3m-1-6v3m1 0v1m-2-7v3m1 0v1m-2-6v2m1 0v1m-2-6v2m1 0v2m-2-7v2m1 0v2m-2-7v2m1 0v2m-2-7v2m1 0v2m-2-7v1m1 0v3m-1-7v4m-1-7v4m-1-7v3m1 0v1m-2-7v2m1 0v2m-1-6v3m0-203v2m0-4v3m0-5v3m1-4v2m0-4v3m1-5v1m-1 0v2m1-4v2m0-4v3m1-5v2m-1 0v1m1-4v2m1-4v1m-1 0v2m1-5v3m0-5v3m1-5v2m-1 0v1m1-4v2m1-4v1m-1 0v2m1-5v3m1-5v1m-1 0v2m1-5v3m0-4v2m1-4v3m1-5v1m-1 0v2m1-5v3m1-5v1m-1 0v2m1-5v3m1-5v1m-1 0v2m1-5v3m1-5v2m-1 0v1m1-5v3m1-5v2m-1 0v1m1-5v3m1-5v3m1-5v1m-1 0v2m1-5v3m1-5v2m-1 0v1m1-5v3m1-5v2m-1 0v1m2-5v1m-1 0v2m1-5v3m1-5v2m-1 0v1m2-6v2m-1 0v2m1-6v3m1-5v3m1-5v1m-1 0v2m1-5v3m1-6v4m1-6v2m-1 0v1m2-5v1m-1 0v2m1-5v3m1-6v4m1-6v2m-1 0v1m2-6v2m-1 0v2m2-6v1m-1 0v2m1-5v3m1-6v4m1-6v3m1-6v3m-1 0v1m2-6v2m-1 0v1m2-6v2m-1 0v2m2-6v1m-1 0v2m2-6v2m-1 0v2m2-6v1m-1 0v2m2-6v1m-1 0v3m2-7v2m-1 0v2m2-6v1m-1 0v2m2-6v1m-1 0v3m2-7v2m-1 0v2m2-6v1m-1 0v2m2-6v1m-1 0v3m2-7v2m-1 0v2m2-7v2m-1 0v2m2-7v3m-1 0v1m2-6v2m-1 0v1m2-6v3m-1 0v1m140.5 566.5h2m-3-1h2m-3-1h1m0 1h1m-3-2h1m0 1h1m-3-2h1m0 1h1m-3-2h1m0 1h1m-3-2h1m0 1h1m-3-2h1m0 1h1m-3-2h1m0 1h1m-2-1h1m-2-1h1m0 1h1m-3-2h1m0 1h1m-2.5-2.5v1m1 0v1m-2-3v1m1 0v1m-2-3v1m1 0v1m-2-3v1m1 0v1m-2-3v1m1 0v1m-2-3v1m1 0v1m-2-3v1m1 0v1m-2-4v2m1 0v1m-2-4v2m-1-3v2m-1-3v2m-1-3v1m1 0v1m-2-3v1m1 0v1m-2-3v1m1 0v1m-2-3v1m1 0v1m-2-3v1m1 0v1m-2-3v1m1 0v1m-2-3v1m1 0v1m-2-4v2m1 0v1m-2-4v2m-1-3v2m-1-3v1m1 0v1m-2-3v1m1 0v1m-2-4v2m1 0v1m-3-4v1m1 0v1m-2-3v1m1 0v1m-1-3v2m-1-3v2m-2-4v1m1 0v2m-2-4v1m1 0v1m-2-3v1m1 0v1m-2-4v1m1 0v2m-2-4v1m1 0v1m-2-3v1m1 0v1m-2-4v2m1 0v1m-2-4v1m1 0v1m-2-3v1m1 0v1m-2-3v1m1 0v1m-2-4v2m1 0v1m-2-4v2m-2-4v1m1 0v2m-2-4v1m1 0v1m-2-3v1m1 0v1m-2-4v1m1 0v2m-2-4v1m1 0v1m-2-4v2m1 0v1m-2-4v2m-1-3v1m1 0v1m-3-4v1m1 0v2m-2-4v1m1 0v1m-2-4v1m1 0v2m-2-4v1m1 0v1m-2-4v2m1 0v1m-2-4v2m-2-4v1m1 0v2m-2-4v1m1 0v1m-2-4v1m1 0v2m-2-4v1m1 0v1m-2-4v2m1 0v1m-3-5v1m1 0v1m1 0v1m-3-4v1m1 0v1m-2-4v1m1 0v2m-2-5v2m1 0v1m-2-4v1m1 0v1m-2-4v2m1 0v1m-3-5v1m1 0v2m-2-4v1m1 0v1m-2-4v1m1 0v2m-2-5v2m1 0v1m-2-5v2m1 0v1m-2-4v2m-2-4v1m1 0v2m-2-5v1m1 0v2m-2-5v2m1 0v1m-2-5v2m1 0v1m-3-5v1m1 0v2m-2-5v1m1 0v2m-2-4v1m1 0v1m-2-4v1m1 0v2m-2-5v1m1 0v2m-2-5v2m1 0v1m-2-5v2m1 0v1m-3-6v1m1 0v3m-2-6v2m1 0v1m-2-5v2m1 0v1m-2-5v2m1 0v1m-2-5v2m1 0v1m-2-5v2m1 0v1m-2-5v3m-2-6v2m1 0v2m-2-6v2m1 0v1m-2-5v2m1 0v1m-2-5v1m1 0v2m-2-6v2m1 0v2m-2-6v2m1 0v1m-3-6v1m1 0v2m1 0v1m-3-6v1m1 0v2m-2-5v1m1 0v2m-2-6v1m1 0v3m-2-7v2m1 0v2m-2-6v2m1 0v1m-2-6v2m1 0v2m-2-6v2m1 0v1m-2-6v3m1 0v1m-2-7v3m1 0v1m-2-6v3m-2-6v1m1 0v3m-2-7v1m1 0v3m-2-7v1m1 0v3m-2-7v1m1 0v3m-2-7v2m1 0v2m-2-7v2m1 0v2m-2-7v2m1 0v2m-2-7v1m1 0v3m-2-7v1m1 0v3m-2-7v1m1 0v3m-1-7v4m-1-7v4m-1-8v4m1 0v1m-2-8v3m1 0v1m-2-8v3m1 0v2m-2-8v2m1 0v2m-2-8v2m1 0v3m-1-8v4m-1-8v5m-1-9v3m1 0v2m-2-9v2m1 0v3m-2-9v1m1 0v4m-1-9v5m-1-9v3m1 0v2m-1-9v5m-1-9v4m1 0v1m-2-9v1m1 0v4m-1-10v6m-1-10v1m1 0v4m-1-10v6m0-11v6m-1-10v2m1 0v3m-1-10v6m0-12v7m0-12v6m0-11v6m0-11v6m0-12v7m0-13v7m0-12v6m0-12v7m0-14v8m0-9v2m0-3v2m0-3v2m1-4v1m-1 0v2m1-4v2m0-3v2m0-3v2m0-4v3m0-4v2m0-3v2m0-4v3m0-4v2m0-3v2m1-4v1m-1 0v2m1-4v2m0-3v2m0-4v3m0-4v2m0-3v2m0-4v3m0-4v2m1-4v2m-1 0v1m1-4v2m0-4v3m0-4v2m0-3v2m0-4v3m1-4v1m-1 0v1m1-4v3m0-4v2m0-4v3m0-4v2m1-4v2m-1 0v1m1-4v2m0-4v3m0-5v3m1-4v1m-1 0v1m1-4v3m0-4v2m0-4v3m1-4v1m-1 0v1m1-4v3m0-5v3m0-4v2m1-4v3m0-5v3m0-4v2m1-4v2m-1 0v1m1-5v3m0-4v2m1-4v2m-1 0v1m1-5v3m1-5v1m-1 0v2m1-5v3m0-4v2m1-4v1m-1 0v2m1-5v3m1-5v1m-1 0v2m1-5v3m0-4v2m1-4v1m-1 0v2m1-5v3m1-5v1m-1 0v2m1-5v3m1-5v1m-1 0v2m1-5v3m0-5v3m1-5v3m0-5v3m1-5v3m0-5v3m1-5v3m1-5v1m-1 0v2m1-5v3m1-5v1m-1 0v2m1-5v3m1-5v1m-1 0v2m1-5v3m1-5v2m-1 0v1m1-5v3m1-6v3m-1 0v1m2-6v2m-1 0v1m1-5v3m1-5v2m-1 0v1m2-5v1m-1 0v2m1-6v4m1-6v2m-1 0v1m2-5v1m-1 0v2m1-5v3m1-6v3m-1 0v1m2-6v1m-1 0v2m2-6v1m-1 0v3m1-6v3m1-5v2m-1 0v1m2-6v2m-1 0v2m2-6v1m-1 0v2m1-6v4m1-6v3m1-6v3m-1 0v1m2-6v2m-1 0v1m2-6v2m-1 0v2m2-6v1m-1 0v2m2-6v1m-1 0v3m1-7v4m1-6v3m1-6v3m-1 0v1m2-7v3m-1 0v1m2-6v2m-1 0v1m2-6v2m-1 0v2m2-7v3m-1 0v1m2-7v3m-1 0v1m2-7v3m-1 0v1m2-6v2m-1 0v1m2-6v3m-1 0v1m2-7v3m-1 0v1m3-7v1m-1 0v3m2-7v1m-1 0v3m2-7v1m-1 0v3m2-7v2m-1 0v2m2-7v2m-1 0v2m2-7v3m-1 0v1m3-8v2m-1 0v3m2-8v2m-1 0v2m2-7v3m-1 0v1m3-7v1m-1 0v2m-1 0v1m3-7v1m-1 0v3m2-8v3m-1 0v2m3-8v1m-1 0v2m-1 0v1m3-8v3m-1 0v2m3-8v1m-1 0v2m-1 0v1m3-7v1m-1 0v3m3-8v1m-1 0v2m-1 0v2m3-8v1m-1 0v3m3-8v1m-1 0v2m-1 0v2m136 630v1m1 0v1m-2-3v1m1 0v1m-2-3v1m1 0v1m-2-3v1m1 0v1m-1-3v2m-1-3v1m1 0v1m-2-3v1m1 0v1m-2-3v1m1 0v1m-2-3v1m1 0v1m-1-2v1m-1-2v1m1 0v1m-2-3v1m1 0v1m-2-3v1m1 0v1m-1-3v2m-1-3v2m-1-3v2m-1-3v1m1 0v1m-2-3v1m1 0v1m-2-3v1m1 0v1m-2-4v1m1 0v2m-2-4v1m1 0v1m-2-3v1m1 0v1m-1-3v2m-1-3v2m-1-3v2m-1-3v1m1 0v1m-2-3v1m1 0v1m-2-3v1m1 0v1m-2-3v1m1 0v1m-1-3v2m-2-4v1m1 0v2m-2-4v1m1 0v1m-1-3v2m-1-3v2m-1-3v1m1 0v1m-2-4v2m1 0v1m-2-4v2m-1-3v1m1 0v1m-2-3v1m1 0v1m-2-3v1m1 0v1m-2-4v1m1 0v2m-2-4v1m1 0v1m-2-3v1m1 0v1m-2-4v2m1 0v1m-2-4v1m1 0v1m-2-3v1m1 0v1m-2-4v2m1 0v1m-2-4v1m1 0v1m-2-3v1m1 0v1m-2-3v1m1 0v1m-2-4v1m1 0v2m-2-4v1m1 0v1m-2-4v2m1 0v1m-2-4v2m-1-3v1m1 0v1m-2-4v2m1 0v1m-2-4v2m-2-4v1m1 0v2m-2-4v1m1 0v1m-2-3v1m1 0v1m-2-4v1m1 0v2m-2-4v1m1 0v1m-2-4v2m1 0v1m-2-4v1m1 0v1m-3-4v1m1 0v1m1 0v1m-3-4v1m1 0v1m-2-4v1m1 0v2m-2-4v1m1 0v1m-2-4v2m1 0v1m-2-4v1m1 0v1m-3-4v1m1 0v1m1 0v1m-3-5v1m1 0v2m-2-4v1m1 0v1m-2-4v1m1 0v2m-2-5v2m1 0v1m-2-4v2m-2-4v1m1 0v2m-2-5v2m1 0v1m-2-4v1m1 0v1m-2-4v2m1 0v1m-3-5v1m1 0v2m-2-5v2m1 0v1m-2-4v1m1 0v1m-2-4v2m1 0v1m-3-5v1m1 0v1m1 0v1m-3-5v1m1 0v2m-2-5v2m1 0v1m-2-5v2m1 0v1m-3-5v1m1 0v2m-2-4v1m1 0v1m-2-4v1m1 0v2m-2-5v2m1 0v1m-2-5v3m-2-5v1m1 0v2m-2-6v2m1 0v2m-3-6v1m1 0v2m-2-5v1m1 0v2m-2-5v2m1 0v1m-2-5v2m1 0v1m-2-5v2m1 0v1m-3-5v1m1 0v2m-2-6v2m1 0v2m-2-6v2m1 0v1m-3-5v1m1 0v1m1 0v1m-3-5v1m1 0v2m-2-6v2m1 0v2m-2-6v2m1 0v1m-3-6v1m1 0v2m1 0v1m-3-6v1m1 0v2m-2-5v1m1 0v2m-2-6v2m1 0v2m-3-7v1m1 0v2m1 0v1m-3-6v1m1 0v2m-2-6v2m1 0v2m-2-6v2m1 0v1m-3-6v1m1 0v2m1 0v1m-3-7v2m1 0v2m-2-6v2m1 0v1m-2-6v2m1 0v2m-3-7v1m1 0v2m1 0v1m-3-7v1m1 0v3m-2-7v2m1 0v2m-2-7v3m1 0v1m-2-7v3m1 0v1m-3-7v1m1 0v3m-2-7v1m1 0v3m-2-7v2m1 0v2m-2-7v2m1 0v2m-2-7v2m1 0v2m-2-7v2m1 0v2m-2-8v3m1 0v2m-2-8v3m1 0v1m-2-8v4m1 0v1m-2-8v4m-2-8v1m1 0v4m-1-8v4m-2-8v1m1 0v4m-2-9v1m1 0v4m-1-9v5m-1-9v5m-1-9v5m-1-9v4m1 0v1m-2-9v3m1 0v2m-2-9v2m1 0v3m-2-9v1m1 0v4m-1-10v6m-1-10v4m1 0v1m-2-10v2m1 0v4m-1-11v6m-1-10v4m1 0v1m-1-10v6m-1-12v5m1 0v2m-1-12v6m-1-11v3m1 0v3m-1-11v6m0-12v7m-1-13v2m1 0v5m-1-12v6m0-12v7m0-14v8m0-9v2m0-3v2m0-3v2m0-4v3m0-4v2m0-3v2m0-3v2m0-4v3m0-4v2m0-3v2m0-4v3m1-4v2m0-3v2m0-4v3m0-4v2m0-3v2m0-4v3m0-4v2m0-3v2m0-4v3m0-4v2m0-4v3m0-4v2m0-4v3m1-4v2m0-3v2m0-4v3m0-4v2m0-4v3m0-4v2m0-4v3m0-4v2m1-4v2m-1 0v1m1-4v2m0-4v3m0-5v3m0-4v2m1-4v1m-1 0v2m1-4v2m0-4v3m0-4v2m0-4v3m1-5v1m-1 0v2m1-4v2m0-4v3m0-5v3m0-4v2m1-4v3m0-5v3m0-4v2m1-4v1m-1 0v2m1-5v3m0-5v3m0-5v3m1-4v2m0-4v3m0-5v3m1-5v2m-1 0v1m1-5v3m0-4v2m1-4v2m-1 0v1m1-5v3m1-5v1m-1 0v2m1-5v3m0-5v3m1-5v2m-1 0v1m1-5v3m1-5v1m-1 0v2m1-5v3m0-5v3m1-5v2m-1 0v1m1-5v3m1-5v2m-1 0v1m1-5v3m1-5v1m-1 0v2m1-5v3m1-5v1m-1 0v2m1-5v3m1-5v1m-1 0v2m1-5v3m1-6v2m-1 0v2m1-6v3m1-5v2m-1 0v1m1-5v3m1-5v2m-1 0v1m1-6v4m1-6v3m1-5v1m-1 0v2m1-5v3m1-6v2m-1 0v2m2-6v1m-1 0v2m1-6v4m1-6v2m-1 0v1m1-5v3m1-6v4m1-6v2m-1 0v1m2-6v1m-1 0v3m1-6v3m1-6v3m-1 0v1m2-6v2m-1 0v1m2-6v1m-1 0v3m1-6v3m1-6v4m1-7v3m-1 0v1m2-6v2m-1 0v1m2-6v2m-1 0v2m2-7v1m-1 0v3m1-6v3m1-6v4m1-7v3m-1 0v1m2-7v3m-1 0v1m2-7v3m-1 0v1m2-6v2m-1 0v1m2-6v2m-1 0v2m2-7v2m-1 0v2m2-7v3m-1 0v1m2-7v3m-1 0v1m2-7v3m-1 0v1m2-7v3m-1 0v1m2-7v3m-1 0v1m3-7v1m-1 0v3m2-8v2m-1 0v3m2-8v2m-1 0v2m2-7v3m-1 0v1m2-7v3m-1 0v1m3-7v1m-1 0v2m-1 0v1m3-8v2m-1 0v3m2-8v2m-1 0v2m3-8v1m-1 0v3m-1 0v1m3-8v2m-1 0v2m2-7v2m-1 0v2m3-8v1m-1 0v3m-1 0v1m3-8v2m-1 0v2m3-8v1m-1 0v2m-1 0v2m3-9v2m-1 0v3m2-8v3m-1 0v1m3-8v2m-1 0v3m3-9v1m-1 0v2m-1 0v2m3-9v3m-1 0v2m3-8v1m-1 0v2m-1 0v1m3-8v3m-1 0v2m3-9v2m-1 0v2m-1 0v1m4-9v1m-1 0v3m-1 0v1m4-9v1m-1 0v2m-1 0v2m3-9v2m-1 0v3m3-9v2m-1 0v2m-1 0v1m4-10v2m-1 0v3m-1 0v1m4-10v2m-1 0v2m-1 0v1m4-9v2m-1 0v2m-1 0v1m4-9v1m-1 0v2m-1 0v2m126 693v1m1 0v1m-1-3v2m-1-3v2m-1-3v1m1 0v1m-1-3v2m-1-3v2m-1-3v1m1 0v1m-1-3v2m-1-3v2m0-2v1m-1-2v1m1 0v1m-1-3v2m-1-3v2m-1-3v1m1 0v1m-1-3v2m-1-3v2m-1-3v1m1 0v1m-1-3v2m-1-3v1m1 0v1m-2-4v1m1 0v2m-1-4v2m-1-3v2m-1-3v1m1 0v1m-1-3v2m-1-3v1m1 0v1m-2-3v1m1 0v1m-1-3v2m-1-3v1m1 0v1m-1-3v2m-1-3v2m-1-4v2m1 0v1m-2-4v1m1 0v1m-1-3v2m-1-3v1m1 0v1m-2-3v1m1 0v1m-1-4v3m-1-4v2m-1-3v1m1 0v1m-1-3v2m-1-3v2m-1-4v2m1 0v1m-2-4v1m1 0v1m-1-3v2m-1-4v3m-1-4v2m-1-3v1m1 0v1m-2-4v1m1 0v2m-1-4v2m-1-3v2m-1-3v1m1 0v1m-2-4v1m1 0v2m-2-4v1m1 0v1m-2-4v1m1 0v2m-2-4v1m1 0v1m-1-3v2m-1-4v2m1 0v1m-2-4v2m-1-4v2m1 0v1m-2-4v1m1 0v1m-2-3v1m1 0v1m-2-4v1m1 0v2m-2-4v1m1 0v1m-2-4v1m1 0v2m-2-4v1m1 0v1m-2-4v1m1 0v2m-2-4v1m1 0v1m-2-4v1m1 0v2m-2-4v1m1 0v1m-2-4v1m1 0v2m-2-4v1m1 0v1m-2-4v1m1 0v2m-2-5v2m1 0v1m-2-4v1m1 0v1m-2-4v1m1 0v2m-2-5v2m1 0v1m-2-4v1m1 0v1m-2-4v2m1 0v1m-2-5v2m1 0v1m-2-4v2m-2-4v1m1 0v2m-2-5v1m1 0v2m-2-5v2m1 0v1m-2-4v1m1 0v1m-2-4v2m1 0v1m-3-5v1m1 0v1m1 0v1m-3-5v1m1 0v2m-2-5v1m1 0v2m-2-5v2m1 0v1m-2-5v2m1 0v1m-2-4v2m-1-4v3m-2-5v1m1 0v2m-2-5v1m1 0v2m-2-5v2m1 0v1m-3-6v1m1 0v2m1 0v1m-3-6v2m1 0v1m-2-5v2m1 0v1m-3-5v1m1 0v1m1 0v1m-3-5v1m1 0v2m-2-5v1m1 0v2m-2-5v2m1 0v1m-3-6v1m1 0v2m1 0v1m-3-6v1m1 0v2m-2-5v2m1 0v1m-2-5v2m1 0v1m-3-6v1m1 0v3m-2-6v2m1 0v1m-3-6v1m1 0v2m1 0v1m-3-6v1m1 0v2m-2-5v1m1 0v2m-3-6v1m1 0v2m1 0v1m-3-7v2m1 0v2m-2-6v2m1 0v1m-3-6v1m1 0v2m1 0v1m-3-6v1m1 0v2m-2-6v2m1 0v2m-3-7v1m1 0v2m1 0v1m-3-6v1m1 0v2m-2-6v2m1 0v2m-3-7v1m1 0v3m-2-7v2m1 0v2m-3-7v1m1 0v2m1 0v1m-3-7v2m1 0v2m-2-7v3m1 0v1m-3-7v1m1 0v3m-2-7v2m1 0v2m-2-7v3m1 0v1m-3-7v1m1 0v3m-2-7v2m1 0v2m-2-7v2m1 0v2m-3-8v1m1 0v3m1 0v1m-3-8v1m1 0v3m-2-8v3m1 0v2m-2-8v3m1 0v1m-3-8v2m1 0v3m-2-8v2m1 0v2m-2-8v3m1 0v2m-3-9v1m1 0v3m1 0v1m-3-9v1m1 0v4m-2-9v2m1 0v3m-2-9v3m1 0v2m-2-9v3m1 0v2m-2-9v4m1 0v1m-2-9v4m1 0v1m-2-9v4m1 0v1m-3-10v1m1 0v4m1 0v1m-2-10v5m-1-10v5m1 0v1m-2-11v5m1 0v1m-2-10v4m1 0v1m-2-10v3m1 0v3m-2-12v3m1 0v4m-2-12v1m1 0v5m-1-11v6m-1-11v3m1 0v3m-2-12v1m1 0v6m-1-13v7m-1-12v1m1 0v5m-1-12v7m0-14v8m0-9v2m0-3v2m-1-3v1m1 0v1m-1-4v3m0-4v2m0-3v2m0-3v2m0-4v3m0-4v2m0-3v2m0-4v3m0-4v2m0-3v2m0-4v3m0-4v2m0-3v2m0-4v3m0-4v2m0-3v2m0-4v3m0-4v2m0-4v3m0-4v2m0-4v3m0-4v2m0-3v2m0-4v3m0-4v2m0-4v3m0-4v2m0-4v3m1-4v1m-1 0v1m1-4v3m0-4v2m0-4v3m0-5v3m0-4v2m0-4v3m0-4v2m0-4v3m0-4v2m1-4v1m-1 0v2m1-5v3m0-4v2m0-4v3m0-5v3m0-4v2m0-4v3m1-5v3m0-4v2m0-4v3m0-5v3m0-5v3m1-5v3m0-4v2m0-4v3m0-5v3m1-5v2m-1 0v1m1-5v3m0-4v2m0-4v3m1-5v2m-1 0v1m1-5v3m0-5v3m1-5v1m-1 0v2m1-5v3m0-5v3m1-5v1m-1 0v2m1-5v3m0-5v3m1-5v1m-1 0v2m1-5v3m0-5v3m1-5v1m-1 0v2m1-5v3m0-5v3m1-5v2m-1 0v1m1-5v3m1-5v1m-1 0v2m1-5v3m0-6v4m1-6v3m0-5v3m1-5v2m-1 0v1m1-5v3m1-6v2m-1 0v2m1-6v3m1-5v2m-1 0v1m1-5v3m1-6v2m-1 0v2m1-6v3m1-6v3m-1 0v1m2-6v1m-1 0v2m1-5v3m1-6v2m-1 0v2m1-6v3m1-6v3m-1 0v1m2-6v1m-1 0v2m1-6v4m1-6v2m-1 0v1m2-6v1m-1 0v3m1-6v3m1-6v2m-1 0v2m2-7v1m-1 0v3m1-6v3m1-6v3m-1 0v1m2-7v2m-1 0v2m2-6v1m-1 0v2m1-6v4m1-7v3m-1 0v1m2-7v3m-1 0v1m2-7v2m-1 0v2m2-6v1m-1 0v2m2-6v1m-1 0v3m2-7v1m-1 0v3m1-7v4m1-7v4m1-7v3m-1 0v1m2-7v3m-1 0v1m2-7v3m-1 0v1m2-7v3m-1 0v1m2-8v4m-1 0v1m2-8v4m2-7v1m-1 0v3m2-7v1m-1 0v3m2-7v1m-1 0v3m2-8v2m-1 0v3m2-8v2m-1 0v2m2-8v3m-1 0v2m3-8v1m-1 0v2m-1 0v1m3-7v1m-1 0v3m2-8v2m-1 0v3m2-8v2m-1 0v2m3-8v1m-1 0v3m-1 0v1m3-9v2m-1 0v3m2-8v3m-1 0v1m3-8v1m-1 0v3m-1 0v1m3-9v3m-1 0v2m3-9v1m-1 0v3m-1 0v1m3-8v2m-1 0v2m3-8v1m-1 0v2m-1 0v2m3-9v2m-1 0v3m3-9v1m-1 0v3m-1 0v1m3-9v3m-1 0v2m3-9v2m-1 0v3m3-9v1m-1 0v2m-1 0v2m4-10v1m-1 0v3m-1 0v2m3-10v3m-1 0v2m3-9v2m-1 0v2m-1 0v1m4-9v1m-1 0v3m-1 0v1m136 693v2m0-3v2m-1-3v2m0-3v2m-1-3v1m1 0v1m-1-3v2m0-3v2m-1-3v2m0-3v2m0-2v1m-1-2v1m1 0v1m-1-3v2m0-3v2m-1-3v2m0-3v2m-1-3v1m1 0v1m-1-3v2m0-3v2m-1-3v1m1 0v1m-1-4v3m0-4v2m-1-3v2m0-3v2m-1-3v1m1 0v1m-1-3v2m0-3v2m-1-3v1m1 0v1m-1-3v2m0-3v2m-1-3v1m1 0v1m-1-4v3m-1-4v1m1 0v1m-1-3v2m0-3v2m-1-3v1m1 0v1m-1-4v3m-1-4v1m1 0v1m-1-3v2m0-3v2m-1-3v1m1 0v1m-1-4v3m-1-4v1m1 0v1m-1-3v2m0-4v3m-1-4v2m0-3v2m-1-4v2m1 0v1m-1-4v2m-1-3v1m1 0v1m-1-3v2m-1-4v1m1 0v2m-1-4v2m-1-4v2m1 0v1m-1-4v2m-1-3v1m1 0v1m-1-4v3m-1-4v1m1 0v1m-1-4v3m-1-4v2m0-3v2m-1-4v3m-1-4v1m1 0v1m-1-4v3m-1-4v1m1 0v1m-1-4v3m-1-4v2m-1-4v1m1 0v2m-1-4v2m-1-4v2m1 0v1m-1-4v2m-1-4v3m-1-5v2m1 0v1m-2-4v1m1 0v1m-1-4v3m-1-5v2m1 0v1m-2-4v1m1 0v1m-1-4v3m-1-5v3m-1-4v1m1 0v1m-2-4v1m1 0v2m-1-5v3m-1-5v3m-1-4v1m1 0v1m-2-4v1m1 0v2m-2-5v1m1 0v2m-2-5v1m1 0v2m-1-5v3m-1-5v2m1 0v1m-2-5v2m1 0v1m-2-4v1m1 0v1m-2-4v1m1 0v2m-2-5v1m1 0v2m-1-5v3m-1-5v3m-2-6v1m1 0v3m-1-6v3m-1-5v3m-1-5v3m-1-5v2m1 0v1m-2-5v2m1 0v1m-2-5v2m1 0v1m-2-6v3m1 0v1m-2-6v3m-1-5v3m-1-5v3m-2-6v1m1 0v3m-2-6v1m1 0v2m-2-6v2m1 0v2m-2-6v2m1 0v1m-2-5v2m1 0v1m-2-6v3m1 0v1m-3-7v1m1 0v2m1 0v1m-3-6v1m1 0v2m-2-6v2m1 0v2m-2-6v2m1 0v1m-3-6v1m1 0v2m1 0v1m-3-7v2m1 0v2m-2-6v2m1 0v1m-2-6v3m1 0v1m-3-7v1m1 0v3m-2-7v2m1 0v2m-3-7v1m1 0v2m1 0v1m-3-7v2m1 0v2m-2-7v3m1 0v1m-3-7v1m1 0v2m1 0v1m-3-7v2m1 0v2m-2-7v3m1 0v1m-3-7v1m1 0v2m1 0v1m-3-7v2m1 0v2m-2-7v3m1 0v1m-3-8v2m1 0v3m-2-8v2m1 0v2m-3-8v2m1 0v2m1 0v1m-3-8v2m1 0v2m-3-8v1m1 0v3m1 0v1m-3-8v2m1 0v2m-2-8v3m1 0v2m-3-9v2m1 0v3m-2-9v3m1 0v2m-3-9v2m1 0v2m1 0v1m-3-9v3m1 0v2m-3-9v1m1 0v3m1 0v1m-3-9v2m1 0v3m-2-9v3m1 0v2m-3-9v1m1 0v3m1 0v1m-3-10v3m1 0v3m-2-10v3m1 0v2m-3-10v1m1 0v4m1 0v1m-3-11v2m1 0v4m-2-10v2m1 0v3m-2-10v3m1 0v3m-2-12v5m1 0v2m-2-12v5m1 0v1m-3-11v1m1 0v5m-2-11v1m1 0v5m-2-12v2m1 0v5m-2-13v2m1 0v5m-2-12v1m1 0v5m-1-12v7m-1-14v7m1 0v1m-1-9v2m-1-3v1m1 0v1m-1-3v2m0-4v3m0-4v2m0-3v2m0-3v2m0-4v3m-1-4v1m1 0v1m-1-3v2m0-4v3m0-4v2m0-3v2m0-4v3m0-4v2m0-3v2m-1-4v1m1 0v2m-1-4v2m0-3v2m0-4v3m0-4v2m0-4v3m0-4v2m0-4v3m0-4v2m0-3v2m0-4v3m0-4v2m0-4v3m0-4v2m0-4v3m-1-4v1m1 0v1m-1-4v3m0-4v2m0-4v3m0-5v3m0-4v2m0-4v3m0-4v2m0-4v3m0-4v2m0-4v3m0-5v3m1-4v1m-1 0v1m1-4v3m0-5v3m0-4v2m0-4v3m0-5v3m0-4v2m0-4v3m0-5v3m0-5v3m0-5v3m0-4v2m0-4v3m1-5v3m0-5v3m0-5v3m0-4v2m0-4v3m0-5v3m1-5v1m-1 0v2m1-5v3m0-5v3m0-5v3m0-5v3m0-5v3m1-5v2m-1 0v1m1-5v3m0-5v3m0-5v3m1-5v1m-1 0v2m1-5v3m0-5v3m0-5v3m1-5v1m-1 0v2m1-5v3m0-5v3m0-5v3m1-6v3m-1 0v1m1-6v3m0-5v3m1-5v2m-1 0v1m1-5v3m0-6v4m1-6v3m0-5v3m1-5v1m-1 0v2m1-6v4m0-6v3m1-6v3m-1 0v1m1-6v3m1-5v1m-1 0v2m1-6v4m1-6v1m-1 0v2m1-6v4m1-6v1m-1 0v2m1-6v4m1-6v1m-1 0v2m1-6v4m1-6v1m-1 0v2m1-6v4m1-7v3m-1 0v1m1-6v3m1-6v3m-1 0v1m2-7v2m-1 0v2m1-6v3m1-6v2m-1 0v2m2-7v1m-1 0v3m1-7v4m1-7v3m-1 0v1m2-6v1m-1 0v2m1-6v4m1-7v3m-1 0v1m2-7v2m-1 0v2m2-7v1m-1 0v3m2-7v1m-1 0v3m1-7v4m1-7v3m-1 0v1m2-7v2m-1 0v2m2-8v3m-1 0v2m2-8v2m-1 0v2m2-7v2m-1 0v2m2-7v1m-1 0v3m2-7v1m-1 0v3m2-8v1m-1 0v4m2-8v1m-1 0v3m2-8v2m-1 0v3m2-8v2m-1 0v2m2-7v1m-1 0v3m2-8v2m-1 0v3m2-8v2m-1 0v2m2-8v3m-1 0v2m2-9v4m-1 0v1m3-8v1m-1 0v3m2-8v2m-1 0v3m2-9v3m-1 0v2m2-9v4m-1 0v1m3-8v1m-1 0v3m2-8v2m-1 0v3m2-9v3m-1 0v2m3-9v2m-1 0v3m2-9v3m-1 0v2m3-9v1m-1 0v3m-1 0v1m3-9v3m-1 0v2m3-10v2m-1 0v3m-1 0v1m4-10v1m-1 0v3m-1 0v1m3-9v2m-1 0v3m3-9v1m-1 0v3m-1 0v1m129 693v2m0-3v2m0-3v2m-1-3v1m1 0v1m-1-3v2m0-3v2m0-3v2m0-3v2m0-3v2m0-2v1m-1-2v1m1 0v1m-1-3v2m0-3v2m0-3v2m0-3v2m0-3v2m0-3v2m-1-3v1m1 0v1m-1-3v2m0-4v3m0-4v2m0-3v2m0-3v2m0-3v2m0-3v2m0-3v2m-1-3v1m1 0v1m-1-3v2m0-3v2m0-3v2m0-4v3m0-4v2m0-3v2m0-3v2m0-3v2m-1-4v2m1 0v1m-1-4v2m0-3v2m0-3v2m0-3v2m0-4v3m0-4v2m0-3v2m0-4v3m0-4v2m-1-3v1m1 0v1m-1-4v3m0-4v2m0-3v2m0-3v2m0-4v3m0-4v2m0-4v3m-1-4v1m1 0v1m-1-3v2m0-4v3m0-4v2m0-4v3m0-4v2m0-3v2m-1-4v1m1 0v2m-1-4v2m0-4v3m0-4v2m0-4v3m0-4v2m-1-4v1m1 0v2m-1-4v2m0-4v3m0-4v2m0-4v3m0-5v3m-1-4v1m1 0v1m-1-4v3m0-5v3m0-4v2m0-4v3m-1-5v1m1 0v2m-1-4v2m0-4v3m0-5v3m0-5v3m-1-4v1m1 0v1m-1-4v3m0-5v3m0-5v3m-1-5v2m1 0v1m-1-5v3m0-5v3m0-4v2m-1-4v1m1 0v2m-1-5v3m0-5v3m0-5v3m-1-6v2m1 0v2m-1-6v3m0-5v3m-1-5v1m1 0v2m-1-5v3m0-5v3m0-5v3m-1-6v4m0-6v3m-1-5v1m1 0v2m-1-5v3m0-6v4m-1-6v1m1 0v2m-1-6v4m0-6v3m-1-5v2m1 0v1m-1-6v4m-1-7v3m1 0v1m-1-6v3m-1-6v2m1 0v2m-1-6v3m-1-6v2m1 0v2m-1-7v4m-1-6v2m1 0v1m-1-6v4m-1-7v4m-1-7v2m1 0v2m-1-7v4m-1-7v3m1 0v1m-2-7v2m1 0v2m-1-7v4m-1-7v4m-1-7v2m1 0v2m-2-7v1m1 0v3m-1-7v4m-1-7v3m1 0v1m-2-8v3m1 0v2m-2-8v2m1 0v2m-2-8v2m1 0v3m-2-8v1m1 0v3m-2-8v1m1 0v4m-1-8v4m-1-8v4m1 0v1m-2-9v4m1 0v1m-3-9v1m1 0v4m-2-9v1m1 0v4m-2-9v1m1 0v4m-2-9v2m1 0v3m-2-9v2m1 0v3m-2-9v2m1 0v3m-2-9v3m1 0v2m-2-10v4m1 0v2m-2-10v4m1 0v1m-3-10v1m1 0v5m-2-11v2m1 0v4m-2-10v2m1 0v3m-2-10v3m1 0v3m-3-12v1m1 0v4m1 0v2m-3-12v2m1 0v4m-2-11v3m1 0v3m-2-11v4m1 0v2m-3-12v1m1 0v4m1 0v2m-3-13v2m1 0v5m-2-12v3m1 0v3m-2-12v4m1 0v3m-2-14v6m1 0v2m-2-9v2m0-3v2m0-3v2m0-4v3m-1-4v2m0-3v2m0-3v2m0-4v3m-1-4v1m1 0v1m-1-3v2m0-4v3m0-4v2m0-3v2m-1-4v2m1 0v1m-1-4v2m0-3v2m0-4v3m0-4v2m-1-3v1m1 0v1m-1-4v3m0-4v2m0-4v3m0-4v2m-1-4v2m1 0v1m-1-4v2m0-3v2m0-4v3m0-4v2m-1-4v1m1 0v2m-1-4v2m0-4v3m0-4v2m0-4v3m0-4v2m0-4v3m-1-5v2m1 0v1m-1-4v2m0-4v3m0-4v2m0-4v3m0-4v2m0-4v3m0-5v3m-1-4v2m0-4v3m0-5v3m0-4v2m0-4v3m0-5v3m0-4v2m0-4v3m0-5v3m0-5v3m0-5v3m0-4v2m0-4v3m0-5v3m0-5v3m0-5v3m0-4v2m0-4v3m0-5v3m0-5v3m0-5v3m0-5v3m0-5v3m0-5v3m0-5v3m0-5v3m0-5v3m0-5v3m0-5v3m0-5v3m0-5v3m0-5v3m0-5v3m0-5v3m0-5v3m0-5v3m1-5v1m-1 0v2m1-6v4m0-6v3m0-5v3m0-5v3m0-5v3m0-6v4m1-6v2m-1 0v1m1-5v3m0-5v3m0-6v4m0-6v3m1-6v3m-1 0v1m1-6v3m0-5v3m0-6v4m1-6v2m-1 0v1m1-6v4m0-6v3m1-6v2m-1 0v2m1-6v3m0-6v4m1-6v1m-1 0v2m1-6v4m0-7v4m1-6v2m-1 0v1m1-6v4m1-7v1m-1 0v3m1-6v3m0-6v4m1-7v3m-1 0v1m1-7v4m1-7v3m-1 0v1m1-6v3m1-6v2m-1 0v2m1-7v4m1-7v2m-1 0v2m1-7v4m1-7v3m-1 0v1m2-7v1m-1 0v3m1-7v4m1-7v2m-1 0v2m2-8v1m-1 0v4m1-8v4m1-7v2m-1 0v2m2-7v1m-1 0v3m1-7v4m1-8v3m-1 0v2m2-8v2m-1 0v2m2-8v1m-1 0v4m1-8v4m1-7v3m-1 0v1m2-8v3m-1 0v2m2-8v2m-1 0v2m2-8v2m-1 0v3m2-9v2m-1 0v3m2-8v1m-1 0v3m2-8v2m-1 0v3m2-9v2m-1 0v3m2-9v2m-1 0v3m2-8v2m-1 0v2m2-8v2m-1 0v3m2-9v3m-1 0v2m2-9v3m-1 0v2m2-9v4m-1 0v1m3-9v1m-1 0v4m2-9v2m-1 0v3m2-10v3m-1 0v3m3-10v1m-1 0v3m-1 0v1m3-9v2m-1 0v3m2-9v3m-1 0v2m91 693v2m0-3v2m0-3v2m0-3v2m0-3v2m-1-3v1m1 0v1m-1-3v2m0-3v2m0-3v2m0-2v1m1-2v2m0-3v2m0-3v2m0-3v2m0-3v2m0-3v2m0-3v2m0-3v2m0-3v2m0-4v3m0-4v2m0-3v2m0-3v2m0-3v2m0-3v2m0-3v2m0-3v2m0-3v2m1-3v1m-1 0v1m1-3v2m0-4v3m0-4v2m0-3v2m0-3v2m0-3v2m0-4v3m0-4v2m1-3v1m-1 0v1m1-3v2m0-3v2m0-4v3m0-4v2m0-3v2m0-4v3m1-4v1m-1 0v1m1-3v2m0-4v3m0-4v2m0-3v2m0-3v2m0-4v3m1-4v1m-1 0v1m1-4v3m0-4v2m0-3v2m0-4v3m0-4v2m0-4v3m1-4v1m-1 0v1m1-3v2m0-4v3m0-4v2m0-4v3m0-4v2m1-4v1m-1 0v2m1-4v2m0-4v3m0-4v2m0-4v3m0-4v2m1-4v1m-1 0v2m1-5v3m0-4v2m0-4v3m0-5v3m1-4v1m-1 0v1m1-4v3m0-5v3m0-4v2m0-4v3m1-5v2m-1 0v1m1-5v3m0-4v2m0-4v3m1-5v1m-1 0v2m1-5v3m0-5v3m0-5v3m1-5v2m-1 0v1m1-4v2m0-4v3m0-5v3m1-5v2m-1 0v1m1-5v3m0-6v4m1-6v2m-1 0v1m1-5v3m0-5v3m1-5v1m-1 0v2m1-5v3m0-5v3m1-6v1m-1 0v3m1-6v3m0-5v3m1-5v1m-1 0v2m1-6v4m0-6v3m1-6v2m-1 0v2m1-6v3m0-5v3m1-6v2m-1 0v2m1-7v4m1-6v1m-1 0v2m1-6v4m0-6v3m1-6v2m-1 0v2m1-7v4m0-6v3m1-6v3m-1 0v1m1-7v4m1-7v2m-1 0v2m1-7v4m0-7v4m1-7v3m-1 0v1m1-7v4m1-7v2m-1 0v2m1-7v4m1-7v1m-1 0v3m1-7v4m0-7v4m1-8v4m-1 0v1m1-8v4m1-8v4m-1 0v1m1-8v4m1-8v3m-1 0v2m1-8v4m1-8v2m-1 0v3m1-9v5m1-9v2m-1 0v3m1-9v5m1-9v2m-1 0v3m1-9v5m1-9v1m-1 0v4m1-9v5m0-9v5m1-10v6m0-10v5m1-10v5m-1 0v1m1-11v6m1-10v4m-1 0v1m1-10v6m1-12v5m-1 0v2m1-12v6m1-11v4m-1 0v2m1-11v6m1-12v2m-1 0v5m1-13v7m0-12v6m1-12v3m-1 0v4m1-14v8m0-9v2m0-3v2m0-3v2m0-4v3m0-4v2m0-3v2m0-3v2m0-4v3m0-4v2m1-3v1m-1 0v1m1-4v3m0-4v2m0-3v2m0-4v3m0-4v2m0-3v2m0-4v3m0-4v2m0-3v2m0-4v3m0-4v2m0-4v3m0-4v2m0-4v3m0-4v2m0-3v2m0-4v3m0-4v2m0-4v3m0-4v2m1-4v1m-1 0v2m1-4v2m0-4v3m0-4v2m0-4v3m0-5v3m0-4v2m0-4v3m0-4v2m0-4v3m0-4v2m0-4v3m0-5v3m0-4v2m0-4v3m0-5v3m0-4v2m0-4v3m0-5v3m0-4v2m0-4v3m1-5v1m-1 0v2m1-5v3m0-5v3m0-4v2m0-4v3m0-5v3m0-5v3m0-5v3m0-4v2m0-4v3m0-5v3m0-5v3m0-5v3m0-5v3m0-5v3m0-5v3m0-5v3m0-5v3m0-5v3m0-5v3m1-5v2m-1 0v1m1-5v3m0-5v3m0-5v3m0-5v3m0-5v3m0-5v3m0-5v3m0-5v3m0-6v4m0-6v3m0-5v3m0-5v3m0-5v3m0-6v4m1-6v2m-1 0v1m1-5v3m0-5v3m0-6v4m0-6v3m0-6v4m0-6v3m0-5v3m0-6v4m0-6v3m1-6v2m-1 0v2m1-6v3m0-6v4m0-6v3m0-6v4m0-6v3m0-6v4m1-7v3m-1 0v1m1-6v3m0-6v4m0-7v4m0-6v3m1-6v1m-1 0v3m1-7v4m0-7v4m0-7v4m0-6v3m1-6v3m-1 0v1m1-7v4m0-7v4m1-7v1m-1 0v3m1-7v4m0-7v4m0-7v4m1-7v4m0-8v5m1-8v1m-1 0v3m1-7v4m0-7v4m1-7v2m-1 0v2m1-8v5m1-8v1m-1 0v3m1-8v5m1-8v1m-1 0v3m1-7v4m1-8v1m-1 0v4m1-8v4m1-8v1m-1 0v4m1-9v5m1-8v2m-1 0v2m1-8v5m1-9v4m-1 0v1m2-9v2m-1 0v3m1-8v4m1-8v4m-1 0v1m2-9v2m-1 0v3m2-9v1m-1 0v4m1-9v5m1-9v4m-1 0v1m2-9v3m-1 0v2m2-10v3m-1 0v3m2-10v2m-1 0v3m2-9v2m-1 0v3m2-9v1m-1 0v4m-8 693v2m0-3v2m0-3v2m0-3v2m0-3v2m0-3v2m0-3v2m0-3v2m0-3v2m0-2v1m1-2v2m0-3v2m0-3v2m0-3v2m0-3v2m0-3v2m0-3v2m1-3v1m-1 0v1m1-3v2m0-4v3m0-4v2m0-3v2m1-3v1m-1 0v1m1-3v2m0-3v2m0-3v2m0-3v2m0-3v2m1-3v2m0-3v2m0-4v3m0-4v2m1-3v1m-1 0v1m1-3v2m0-3v2m0-4v3m1-4v1m-1 0v1m1-3v2m0-3v2m0-3v2m1-4v2m-1 0v1m1-4v2m0-3v2m1-4v1m-1 0v2m1-4v2m0-3v2m0-4v3m1-4v2m0-3v2m0-3v2m1-4v1m-1 0v2m1-4v2m0-4v3m1-4v1m-1 0v1m1-3v2m0-4v3m1-4v1m-1 0v1m1-4v3m0-4v2m0-3v2m1-4v3m0-4v2m1-4v1m-1 0v2m1-4v2m0-4v3m1-4v1m-1 0v1m1-4v3m0-4v2m1-4v2m-1 0v1m1-4v2m1-4v1m-1 0v2m1-5v3m0-4v2m1-4v2m-1 0v1m1-5v3m1-4v1m-1 0v1m1-4v3m1-5v1m-1 0v2m1-4v2m1-4v1m-1 0v2m1-5v3m1-5v1m-1 0v2m1-4v2m0-4v3m1-5v3m1-5v1m-1 0v2m1-5v3m1-5v1m-1 0v2m1-5v3m1-4v1m-1 0v1m1-4v3m1-5v1m-1 0v2m1-5v3m1-5v2m-1 0v1m2-6v2m-1 0v2m1-6v3m1-5v2m-1 0v1m2-5v1m-1 0v2m1-5v3m1-5v2m-1 0v1m2-5v1m-1 0v2m1-6v4m1-6v3m1-5v1m-1 0v2m1-5v3m1-6v4m1-6v2m-1 0v1m2-6v2m-1 0v2m2-6v1m-1 0v2m1-5v3m1-6v3m-1 0v1m2-7v3m-1 0v1m2-6v2m-1 0v1m2-6v2m-1 0v2m2-6v1m-1 0v2m2-6v1m-1 0v3m2-7v1m-1 0v3m1-6v3m1-6v3m-1 0v1m2-7v3m-1 0v1m2-7v3m-1 0v1m2-7v3m-1 0v1m2-7v3m-1 0v1m2-7v3m-1 0v1m2-7v4m2-7v1m-1 0v3m2-7v1m-1 0v3m2-7v1m-1 0v3m2-7v1m-1 0v3m2-7v2m-1 0v2m2-8v3m-1 0v2m1-5v1m-1 222v2m0-3v2m0-3v2m1-3v1m-1 0v1m1-3v2m0-3v2m0-3v2m0-3v2m0-3v2m0-2v1" stroke="#000080" fill="none"/>
<path d="M61 80.5h1m0-1h1m0-1h1m0-1h1m0-1h1m0-1h1m0-1h1m0-1h1m0-1h1m0-1h1m0-1h1m0-1h1m0-1h1m0-1h1m0-1h1m0-1h1m0-1h1m0-1h1m0-1h1m0-1h1m0-1h1m0-1h1m0-1h1m0-1h1m0-1h1m0-1h1m0-1h1m0-1h1m0-1h1m0-1h1m0-1h1m-31 90h1m0-1h1m0-1h1m0-1h1m0-1h1m0-1h1m0-1h1m0-1h1m0-1h1m0-1h1m0-1h1m0-1h1m0-1h1m0-1h1m0-1h1m0-1h1m0-1h1m0-1h1m0-1h1m0-1h1m0-1h1m0-1h1m0-1h1m0-1h1m0-1h1m0-1h1m0-1h1m0-1h1m0-1h1m0-1h1m0-1h1m0-1h1m0-1h1m0-1h1m0-1h1m0-1h1m0-1h1m0-1h1m0-1h1m0-1h1m0-1h1m0-1h1m0-1h1m0-1h1m0-1h1m0-1h1m0-1h1m0-1h1m0-1h1m0-1h1m0-1h1m0-1h1m0-1h1m0-1h1m0-1h1m0-1h1m0-1h1m0-1h1m0-1h1m0-1h1m0-1h1m0-1h1m0-1h1m0-1h1m0-1h1m0-1h1m0-1h1m0-1h1m0-1h1m0-1h1m0-1h1m0-1h1m0-1h1m0-1h1m0-1h1m0-1h1m0-1h1m0-1h1m0-1h1m0-1h1m0-1h1m0-1h1m0-1h1m0-1h1m0-1h1m0-1h1m0-1h1m0-1h1m0-1h1m0-1h1m0-1h1m-91 150h1m0-1h1m0-1h1m0-1h1m0-1h1m0-1h1m0-1h1m0-1h1m0-1h1m0-1h1m0-1h1m0-1h1m0-1h1m0-1h1m0-1h1m0-1h1m0-1h1m0-1h1m0-1h1m0-1h1m0-1h1m0-1h1m0-1h1m0-1h1m0-1h1m0-1h1m0-1h1m0-1h1m0-1h1m0-1h1m0-1h1m0-1h1m0-1h1m0-1h1m0-1h1m0-1h1m0-1h1m0-1h1m0-1h1m0-1h1m0-1h1m0-1h1m0-1h1m0-1h1m0-1h1m0-1h1m0-1h1m0-1h1m0-1h1m0-1h1m0-1h1m0-1h1m0-1h1m0-1h1m0-1h1m0-1h1m0-1h1m0-1h1m0-1h1m0-1h1m0-1h1m0-1h1m0-1h1m0-1h1m0-1h1m0-1h1m0-1h1m0-1h1m0-1h1m0-1h1m0-1h1m0-1h1m0-1h1m0-1h1m0-1h1m0-1h1m0-1h1m0-1h1m0-1h1m0-1h1m0-1h1m0-1h1m0-1h1m0-1h1m0-1h1m0-1h1m0-1h1m0-1h1m0-1h1m0-1h1m0-1h1m0-1h1m0-1h1m0-1h1m0-1h1m0-1h1m0-1h1m0-1h1m0-1h1m0-1h1m0-1h1m0-1h1m0-1h1m0-1h1m0-1h1m0-1h1m0-1h1m0-1h1m0-1h1m0-1h1m0-1h1m0-1h1m0-1h1m0-1h1m0-1h1m0-1h1m0-1h1m0-1h1m0-1h1m0-1h1m0-1h1m0-1h1m0-1h1m0-1h1m0-1h1m0-1h1m0-1h1m0-1h1m0-1h1m0-1h1m0-1h1m0-1h1m0-1h1m0-1h1m0-1h1m0-1h1m0-1h1m0-1h1m0-1h1m0-1h1m0-1h1m0-1h1m0-1h1m0-1h1m0-1h1m0-1h1m0-1h1m0-1h1m0-1h1m0-1h1m0-1h1m-151 210h1m0-1h1m0-1h1m0-1h1m0-1h1m0-1h1m0-1h1m0-1h1m0-1h1m0-1h1m0-1h1m0-1h1m0-1h1m0-1h1m0-1h1m0-1h1m0-1h1m0-1h1m0-1h1m0-1h1m0-1h1m0-1h1m0-1h1m0-1h1m0-1h1m0-1h1m0-1h1m0-1h1m0-1h1m0-1h1m0-1h1m0-1h1m0-1h1m0-1h1m0-1h1m0-1h1m0-1h1m0-1h1m0-1h1m0-1h1m0-1h1m0-1h1m0-1h1m0-1h1m0-1h1m0-1h1m0-1h1m0-1h1m0-1h1m0-1h1m0-1h1m0-1h1m0-1h1m0-1h1m0-1h1m0-1h1m0-1h1m0-1h1m0-1h1m0-1h1m0-1h1m0-1h1m0-1h1m0-1h1m0-1h1m0-1h1m0-1h1m0-1h1m0-1h1m0-1h1m0-1h1m0-1h1m0-1h1m0-1h1m0-1h1m0-1h1m0-1h1m0-1h1m0-1h1m0-1h1m0-1h1m0-1h1m0-1h1m0-1h1m0-1h1m0-1h1m0-1h1m0-1h1m0-1h1m0-1h1m0-1h1m0-1h1m0-1h1m0-1h1m0-1h1m0-1h1m0-1h1m0-1h1m0-1h1m0-1h1m0-1h1m0-1h1m0-1h1m0-1h1m0-1h1m0-1h1m0-1h1m0-1h1m0-1h1m0-1h1m0-1h1m0-1h1m0-1h1m0-1h1m0-1h1m0-1h1m0-1h1m0-1h1m0-1h1m0-1h1m0-1h1m0-1h1m0-1h1m0-1h1m0-1h1m0-1h1m0-1h1m0-1h1m0-1h1m0-1h1m0-1h1m0-1h1m0-1h1m0-1h1m0-1h1m0-1h1m0-1h1m0-1h1m0-1h1m0-1h1m0-1h1m0-1h1m0-1h1m0-1h1m0-1h1m0-1h1m0-1h1m0-1h1m0-1h1m0-1h1m0-1h1m0-1h1m0-1h1m0-1h1m0-1h1m0-1h1m0-1h1m0-1h1m0-1h1m0-1h1m0-1h1m0-1h1m0-1h1m0-1h1m0-1h1m0-1h1m0-1h1m0-1h1m0-1h1m0-1h1m0-1h1m0-1h1m0-1h1m0-1h1m0-1h1m0-1h1m0-1h1m0-1h1m0-1h1m0-1h1m0-1h1m0-1h1m0-1h1m0-1h1m0-1h1m0-1h1m0-1h1m0-1h1m0-1h1m0-1h1m0-1h1m0-1h1m0-1h1m0-1h1m0-1h1m0-1h1m0-1h1m0-1h1m0-1h1m0-1h1m0-1h1m0-1h1m0-1h1m0-1h1m0-1h1m0-1h1m0-1h1m0-1h1m0-1h1m0-1h1m0-1h1m-211 270h1m0-1h1m0-1h1m0-1h1m0-1h1m0-1h1m0-1h1m0-1h1m0-1h1m0-1h1m0-1h1m0-1h1m0-1h1m0-1h1m0-1h1m0-1h1m0-1h1m0-1h1m0-1h1m0-1h1m0-1h1m0-1h1m0-1h1m0-1h1m0-1h1m0-1h1m0-1h1m0-1h1m0-1h1m0-1h1m0-1h1m0-1h1m0-1h1m0-1h1m0-1h1m0-1h1m0-1h1m0-1h1m0-1h1m0-1h1m0-1h1m0-1h1m0-1h1m0-1h1m0-1h1m0-1h1m0-1h1m0-1h1m0-1h1m0-1h1m0-1h1m0-1h1m0-1h1m0-1h1m0-1h1m0-1h1m0-1h1m0-1h1m0-1h1m0-1h1m0-1h1m0-1h1m0-1h1m0-1h1m0-1h1m0-1h1m0-1h1m0-1h1m0-1h1m0-1h1m0-1h1m0-1h1m0-1h1m0-1h1m0-1h1m0-1h1m0-1h1m0-1h1m0-1h1m0-1h1m0-1h1m0-1h1m0-1h1m0-1h1m0-1h1m0-1h1m0-1h1m0-1h1m0-1h1m0-1h1m0-1h1m0-1h1m0-1h1m0-1h1m0-1h1m0-1h1m0-1h1m0-1h1m0-1h1m0-1h1m0-1h1m0-1h1m0-1h1m0-1h1m0-1h1m0-1h1m0-1h1m0-1h1m0-1h1m0-1h1m0-1h1m0-1h1m0-1h1m0-1h1m0-1h1m0-1h1m0-1h1m0-1h1m0-1h1m0-1h1m0-1h1m0-1h1m0-1h1m0-1h1m0-1h1m0-1h1m0-1h1m0-1h1m0-1h1m0-1h1m0-1h1m0-1h1m0-1h1m0-1h1m0-1h1m0-1h1m0-1h1m0-1h1m0-1h1m0-1h1m0-1h1m0-1h1m0-1h1m0-1h1m0-1h1m0-1h1m0-1h1m0-1h1m0-1h1m0-1h1m0-1h1m0-1h1m0-1h1m0-1h1m0-1h1m0-1h1m0-1h1m0-1h1m0-1h1m0-1h1m0-1h1m0-1h1m0-1h1m0-1h1m0-1h1m0-1h1m0-1h1m0-1h1m0-1h1m0-1h1m0-1h1m0-1h1m0-1h1m0-1h1m0-1h1m0-1h1m0-1h1m0-1h1m0-1h1m0-1h1m0-1h1m0-1h1m0-1h1m0-1h1m0-1h1m0-1h1m0-1h1m0-1h1m0-1h1m0-1h1m0-1h1m0-1h1m0-1h1m0-1h1m0-1h1m0-1h1m0-1h1m0-1h1m0-1h1m0-1h1m0-1h1m0-1h1m0-1h1m0-1h1m0-1h1m0-1h1m0-1h1m0-1h1m0-1h1m0-1h1m0-1h1m0-1h1m0-1h1m0-1h1m0-1h1m0-1h1m0-1h1m0-1h1m0-1h1m0-1h1m0-1h1m0-1h1m0-1h1m0-1h1m0-1h1m0-1h1m0-1h1m0-1h1m0-1h1m0-1h1m0-1h1m0-1h1m0-1h1m0-1h1m0-1h1m0-1h1m0-1h1m0-1h1m0-1h1m0-1h1m0-1h1m0-1h1m0-1h1m0-1h1m0-1h1m0-1h1m0-1h1m0-1h1m0-1h1m0-1h1m0-1h1m0-1h1m0-1h1m0-1h1m0-1h1m0-1h1m0-1h1m0-1h1m0-1h1m0-1h1m0-1h1m0-1h1m0-1h1m0-1h1m0-1h1m0-1h1m0-1h1m0-1h1m0-1h1m0-1h1m0-1h1m-271 330h1m0-1h1m0-1h1m0-1h1m0-1h1m0-1h1m0-1h1m0-1h1m0-1h1m0-1h1m0-1h1m0-1h1m0-1h1m0-1h1m0-1h1m0-1h1m0-1h1m0-1h1m0-1h1m0-1h1m0-1h1m0-1h1m0-1h1m0-1h1m0-1h1m0-1h1m0-1h1m0-1h1m0-1h1m0-1h1m0-1h1m0-1h1m0-1h1m0-1h1m0-1h1m0-1h1m0-1h1m0-1h1m0-1h1m0-1h1m0-1h1m0-1h1m0-1h1m0-1h1m0-1h1m0-1h1m0-1h1m0-1h1m0-1h1m0-1h1m0-1h1m0-1h1m0-1h1m0-1h1m0-1h1m0-1h1m0-1h1m0-1h1m0-1h1m0-1h1m0-1h1m0-1h1m0-1h1m0-1h1m0-1h1m0-1h1m0-1h1m0-1h1m0-1h1m0-1h1m0-1h1m0-1h1m0-1h1m0-1h1m0-1h1m0-1h1m0-1h1m0-1h1m0-1h1m0-1h1m0-1h1m0-1h1m0-1h1m0-1h1m0-1h1m0-1h1m0-1h1m0-1h1m0-1h1m0-1h1m0-1h1m0-1h1m0-1h1m0-1h1m0-1h1m0-1h1m0-1h1m0-1h1m0-1h1m0-1h1m0-1h1m0-1h1m0-1h1m0-1h1m0-1h1m0-1h1m0-1h1m0-1h1m0-1h1m0-1h1m0-1h1m0-1h1m0-1h1m0-1h1m0-1h1m0-1h1m0-1h1m0-1h1m0-1h1m0-1h1m0-1h1m0-1h1m0-1h1m0-1h1m0-1h1m0-1h1m0-1h1m0-1h1m0-1h1m0-1h1m0-1h1m0-1h1m0-1h1m0-1h1m0-1h1m0-1h1m0-1h1m0-1h1m0-1h1m0-1h1m0-1h1m0-1h1m0-1h1m0-1h1m0-1h1m0-1h1m0-1h1m0-1h1m0-1h1m0-1h1m0-1h1m0-1h1m0-1h1m0-1h1m0-1h1m0-1h1m0-1h1m0-1h1m0-1h1m0-1h1m0-1h1m0-1h1m0-1h1m0-1h1m0-1h1m0-1h1m0-1h1m0-1h1m0-1h1m0-1h1m0-1h1m0-1h1m0-1h1m0-1h1m0-1h1m0-1h1m0-1h1m0-1h1m0-1h1m0-1h1m0-1h1m0-1h1m0-1h1m0-1h1m0-1h1m0-1h1m0-1h1m0-1h1m0-1h1m0-1h1m0-1h1m0-1h1m0-1h1m0-1h1m0-1h1m0-1h1m0-1h1m0-1h1m0-1h1m0-1h1m0-1h1m0-1h1m0-1h1m0-1h1m0-1h1m0-1h1m0-1h1m0-1h1m0-1h1m0-1h1m0-1h1m0-1h1m0-1h1m0-1h1m0-1h1m0-1h1m0-1h1m0-1h1m0-1h1m0-1h1m0-1h1m0-1h1m0-1h1m0-1h1m0-1h1m0-1h1m0-1h1m0-1h1m0-1h1m0-1h1m0-1h1m0-1h1m0-1h1m0-1h1m0-1h1m0-1h1m0-1h1m0-1h1m0-1h1m0-1h1m0-1h1m0-1h1m0-1h1m0-1h1m0-1h1m0-1h1m0-1h1m0-1h1m0-1h1m0-1h1m0-1h1m0-1h1m0-1h1m0-1h1m0-1h1m0-1h1m0-1h1m0-1h1m0-1h1m0-1h1m0-1h1m0-1h1m0-1h1m0-1h1m0-1h1m0-1h1m0-1h1m0-1h1m0-1h1m0-1h1m0-1h1m0-1h1m0-1h1m0-1h1m0-1h1m0-1h1m0-1h1m0-1h1m0-1h1m0-1h1m0-1h1m0-1h1m0-1h1m0-1h1m0-1h1m0-1h1m0-1h1m0-1h1m0-1h1m0-1h1m0-1h1m0-1h1m0-1h1m0-1h1m0-1h1m0-1h1m0-1h1m0-1h1m0-1h1m0-1h1m0-1h1m0-1h1m0-1h1m0-1h1m0-1h1m0-1h1m0-1h1m0-1h1m0-1h1m0-1h1m0-1h1m0-1h1m0-1h1m0-1h1m0-1h1m0-1h1m0-1h1m0-1h1m0-1h1m0-1h1m0-1h1m0-1h1m0-1h1m0-1h1m0-1h1m0-1h1m0-1h1m0-1h1m0-1h1m0-1h1m0-1h1m-331 390h1m0-1h1m0-1h1m0-1h1m0-1h1m0-1h1m0-1h1m0-1h1m0-1h1m0-1h1m0-1h1m0-1h1m0-1h1m0-1h1m0-1h1m0-1h1m0-1h1m0-1h1m0-1h1m0-1h1m0-1h1m0-1h1m0-1h1m0-1h1m0-1h1m0-1h1m0-1h1m0-1h1m0-1h1m0-1h1m0-1h1m0-1h1m0-1h1m0-1h1m0-1h1m0-1h1m0-1h1m0-1h1m0-1h1m0-1h1m0-1h1m0-1h1m0-1h1m0-1h1m0-1h1m0-1h1m0-1h1m0-1h1m0-1h1m0-1h1m0-1h1m0-1h1m0-1h1m0-1h1m0-1h1m0-1h1m0-1h1m0-1h1m0-1h1m0-1h1m0-1h1m0-1h1m0-1h1m0-1h1m0-1h1m0-1h1m0-1h1m0-1h1m0-1h1m0-1h1m0-1h1m0-1h1m0-1h1m0-1h1m0-1h1m0-1h1m0-1h1m0-1h1m0-1h1m0-1h1m0-1h1m0-1h1m0-1h1m0-1h1m0-1h1m0-1h1m0-1h1m0-1h1m0-1h1m0-1h1m0-1h1m0-1h1m0-1h1m0-1h1m0-1h1m0-1h1m0-1h1m0-1h1m0-1h1m0-1h1m0-1h1m0-1h1m0-1h1m0-1h1m0-1h1m0-1h1m0-1h1m0-1h1m0-1h1m0-1h1m0-1h1m0-1h1m0-1h1m0-1h1m0-1h1m0-1h1m0-1h1m0-1h1m0-1h1m0-1h1m0-1h1m0-1h1m0-1h1m0-1h1m0-1h1m0-1h1m0-1h1m0-1h1m0-1h1m0-1h1m0-1h1m0-1h1m0-1h1m0-1h1m0-1h1m0-1h1m0-1h1m0-1h1m0-1h1m0-1h1m0-1h1m0-1h1m0-1h1m0-1h1m0-1h1m0-1h1m0-1h1m0-1h1m0-1h1m0-1h1m0-1h1m0-1h1m0-1h1m0-1h1m0-1h1m0-1h1m0-1h1m0-1h1m0-1h1m0-1h1m0-1h1m0-1h1m0-1h1m0-1h1m0-1h1m0-1h1m0-1h1m0-1h1m0-1h1m0-1h1m0-1h1m0-1h1m0-1h1m0-1h1m0-1h1m0-1h1m0-1h1m0-1h1m0-1h1m0-1h1m0-1h1m0-1h1m0-1h1m0-1h1m0-1h1m0-1h1m0-1h1m0-1h1m0-1h1m0-1h1m0-1h1m0-1h1m0-1h1m0-1h1m0-1h1m0-1h1m0-1h1m0-1h1m0-1h1m0-1h1m0-1h1m0-1h1m0-1h1m0-1h1m0-1h1m0-1h1m0-1h1m0-1h1m0-1h1m0-1h1m0-1h1m0-1h1m0-1h1m0-1h1m0-1h1m0-1h1m0-1h1m0-1h1m0-1h1m0-1h1m0-1h1m0-1h1m0-1h1m0-1h1m0-1h1m0-1h1m0-1h1m0-1h1m0-1h1m0-1h1m0-1h1m0-1h1m0-1h1m0-1h1m0-1h1m0-1h1m0-1h1m0-1h1m0-1h1m0-1h1m0-1h1m0-1h1m0-1h1m0-1h1m0-1h1m0-1h1m0-1h1m0-1h1m0-1h1m0-1h1m0-1h1m0-1h1m0-1h1m0-1h1m0-1h1m0-1h1m0-1h1m0-1h1m0-1h1m0-1h1m0-1h1m0-1h1m0-1h1m0-1h1m0-1h1m0-1h1m0-1h1m0-1h1m0-1h1m0-1h1m0-1h1m0-1h1m0-1h1m0-1h1m0-1h1m0-1h1m0-1h1m0-1h1m0-1h1m0-1h1m0-1h1m0-1h1m0-1h1m0-1h1m0-1h1m0-1h1m0-1h1m0-1h1m0-1h1m0-1h1m0-1h1m0-1h1m0-1h1m0-1h1m0-1h1m0-1h1m0-1h1m0-1h1m0-1h1m0-1h1m0-1h1m0-1h1m0-1h1m0-1h1m0-1h1m0-1h1m0-1h1m0-1h1m0-1h1m0-1h1m0-1h1m0-1h1m0-1h1m0-1h1m0-1h1m0-1h1m0-1h1m0-1h1m0-1h1m0-1h1m0-1h1m0-1h1m0-1h1m0-1h1m0-1h1m0-1h1m0-1h1m0-1h1m0-1h1m0-1h1m0-1h1m0-1h1m0-1h1m0-1h1m0-1h1m0-1h1m0-1h1m0-1h1m0-1h1m0-1h1m0-1h1m0-1h1m0-1h1m0-1h1m0-1h1m0-1h1m0-1h1m0-1h1m0-1h1m0-1h1m0-1h1m0-1h1m0-1h1m0-1h1m0-1h1m0-1h1m0-1h1m0-1h1m0-1h1m0-1h1m0-1h1m0-1h1m0-1h1m0-1h1m0-1h1m0-1h1m0-1h1m0-1h1m0-1h1m0-1h1m0-1h1m0-1h1m0-1h1m0-1h1m0-1h1m0-1h1m0-1h1m0-1h1m0-1h1m0-1h1m0-1h1m0-1h1m0-1h1m0-1h1m0-1h1m0-1h1m0-1h1m0-1h1m0-1h1m0-1h1m0-1h1m-391 450h1m0-1h1m0-1h1m0-1h1m0-1h1m0-1h1m0-1h1m0-1h1m0-1h1m0-1h1m0-1h1m0-1h1m0-1h1m0-1h1m0-1h1m0-1h1m0-1h1m0-1h1m0-1h1m0-1h1m0-1h1m0-1h1m0-1h1m0-1h1m0-1h1m0-1h1m0-1h1m0-1h1m0-1h1m0-1h1m0-1h1m0-1h1m0-1h1m0-1h1m0-1h1m0-1h1m0-1h1m0-1h1m0-1h1m0-1h1m0-1h1m0-1h1m0-1h1m0-1h1m0-1h1m0-1h1m0-1h1m0-1h1m0-1h1m0-1h1m0-1h1m0-1h1m0-1h1m0-1h1m0-1h1m0-1h1m0-1h1m0-1h1m0-1h1m0-1h1m0-1h1m0-1h1m0-1h1m0-1h1m0-1h1m0-1h1m0-1h1m0-1h1m0-1h1m0-1h1m0-1h1m0-1h1m0-1h1m0-1h1m0-1h1m0-1h1m0-1h1m0-1h1m0-1h1m0-1h1m0-1h1m0-1h1m0-1h1m0-1h1m0-1h1m0-1h1m0-1h1m0-1h1m0-1h1m0-1h1m0-1h1m0-1h1m0-1h1m0-1h1m0-1h1m0-1h1m0-1h1m0-1h1m0-1h1m0-1h1m0-1h1m0-1h1m0-1h1m0-1h1m0-1h1m0-1h1m0-1h1m0-1h1m0-1h1m0-1h1m0-1h1m0-1h1m0-1h1m0-1h1m0-1h1m0-1h1m0-1h1m0-1h1m0-1h1m0-1h1m0-1h1m0-1h1m0-1h1m0-1h1m0-1h1m0-1h1m0-1h1m0-1h1m0-1h1m0-1h1m0-1h1m0-1h1m0-1h1m0-1h1m0-1h1m0-1h1m0-1h1m0-1h1m0-1h1m0-1h1m0-1h1m0-1h1m0-1h1m0-1h1m0-1h1m0-1h1m0-1h1m0-1h1m0-1h1m0-1h1m0-1h1m0-1h1m0-1h1m0-1h1m0-1h1m0-1h1m0-1h1m0-1h1m0-1h1m0-1h1m0-1h1m0-1h1m0-1h1m0-1h1m0-1h1m0-1h1m0-1h1m0-1h1m0-1h1m0-1h1m0-1h1m0-1h1m0-1h1m0-1h1m0-1h1m0-1h1m0-1h1m0-1h1m0-1h1m0-1h1m0-1h1m0-1h1m0-1h1m0-1h1m0-1h1m0-1h1m0-1h1m0-1h1m0-1h1m0-1h1m0-1h1m0-1h1m0-1h1m0-1h1m0-1h1m0-1h1m0-1h1m0-1h1m0-1h1m0-1h1m0-1h1m0-1h1m0-1h1m0-1h1m0-1h1m0-1h1m0-1h1m0-1h1m0-1h1m0-1h1m0-1h1m0-1h1m0-1h1m0-1h1m0-1h1m0-1h1m0-1h1m0-1h1m0-1h1m0-1h1m0-1h1m0-1h1m0-1h1m0-1h1m0-1h1m0-1h1m0-1h1m0-1h1m0-1h1m0-1h1m0-1h1m0-1h1m0-1h1m0-1h1m0-1h1m0-1h1m0-1h1m0-1h1m0-1h1m0-1h1m0-1h1m0-1h1m0-1h1m0-1h1m0-1h1m0-1h1m0-1h1m0-1h1m0-1h1m0-1h1m0-1h1m0-1h1m0-1h1m0-1h1m0-1h1m0-1h1m0-1h1m0-1h1m0-1h1m0-1h1m0-1h1m0-1h1m0-1h1m0-1h1m0-1h1m0-1h1m0-1h1m0-1h1m0-1h1m0-1h1m0-1h1m0-1h1m0-1h1m0-1h1m0-1h1m0-1h1m0-1h1m0-1h1m0-1h1m0-1h1m0-1h1m0-1h1m0-1h1m0-1h1m0-1h1m0-1h1m0-1h1m0-1h1m0-1h1m0-1h1m0-1h1m0-1h1m0-1h1m0-1h1m0-1h1m0-1h1m0-1h1m0-1h1m0-1h1m0-1h1m0-1h1m0-1h1m0-1h1m0-1h1m0-1h1m0-1h1m0-1h1m0-1h1m0-1h1m0-1h1m0-1h1m0-1h1m0-1h1m0-1h1m0-1h1m0-1h1m0-1h1m0-1h1m0-1h1m0-1h1m0-1h1m0-1h1m0-1h1m0-1h1m0-1h1m0-1h1m0-1h1m0-1h1m0-1h1m0-1h1m0-1h1m0-1h1m0-1h1m0-1h1m0-1h1m0-1h1m0-1h1m0-1h1m0-1h1m0-1h1m0-1h1m0-1h1m0-1h1m0-1h1m0-1h1m0-1h1m0-1h1m0-1h1m0-1h1m0-1h1m0-1h1m0-1h1m0-1h1m0-1h1m0-1h1m0-1h1m0-1h1m0-1h1m0-1h1m0-1h1m0-1h1m0-1h1m0-1h1m0-1h1m0-1h1m0-1h1m0-1h1m0-1h1m0-1h1m0-1h1m0-1h1m0-1h1m0-1h1m0-1h1m0-1h1m0-1h1m0-1h1m0-1h1m0-1h1m0-1h1m0-1h1m0-1h1m0-1h1m0-1h1m0-1h1m0-1h1m0-1h1m0-1h1m0-1h1m0-1h1m0-1h1m0-1h1m0-1h1m0-1h1m0-1h1m0-1h1m0-1h1m0-1h1m0-1h1m0-1h1m0-1h1m0-1h1m0-1h1m0-1h1m0-1h1m0-1h1m0-1h1m0-1h1m0-1h1m0-1h1m0-1h1m0-1h1m0-1h1m0-1h1m0-1h1m0-1h1m0-1h1m0-1h1m0-1h1m0-1h1m0-1h1m0-1h1m0-1h1m0-1h1m0-1h1m0-1h1m0-1h1m0-1h1m0-1h1m0-1h1m0-1h1m0-1h1m0-1h1m0-1h1m0-1h1m0-1h1m0-1h1m0-1h1m0-1h1m0-1h1m0-1h1m0-1h1m0-1h1m0-1h1m0-1h1m0-1h1m0-1h1m0-1h1m0-1h1m0-1h1m0-1h1m-451 510h1m0-1h1m0-1h1m0-1h1m0-1h1m0-1h1m0-1h1m0-1h1m0-1h1m0-1h1m0-1h1m0-1h1m0-1h1m0-1h1m0-1h1m0-1h1m0-1h1m0-1h1m0-1h1m0-1h1m0-1h1m0-1h1m0-1h1m0-1h1m0-1h1m0-1h1m0-1h1m0-1h1m0-1h1m0-1h1m0-1h1m0-1h1m0-1h1m0-1h1m0-1h1m0-1h1m0-1h1m0-1h1m0-1h1m0-1h1m0-1h1m0-1h1m0-1h1m0-1h1m0-1h1m0-1h1m0-1h1m0-1h1m0-1h1m0-1h1m0-1h1m0-1h1m0-1h1m0-1h1m0-1h1m0-1h1m0-1h1m0-1h1m0-1h1m0-1h1m0-1h1m0-1h1m0-1h1m0-1h1m0-1h1m0-1h1m0-1h1m0-1h1m0-1h1m0-1h1m0-1h1m0-1h1m0-1h1m0-1h1m0-1h1m0-1h1m0-1h1m0-1h1m0-1h1m0-1h1m0-1h1m0-1h1m0-1h1m0-1h1m0-1h1m0-1h1m0-1h1m0-1h1m0-1h1m0-1h1m0-1h1m0-1h1m0-1h1m0-1h1m0-1h1m0-1h1m0-1h1m0-1h1m0-1h1m0-1h1m0-1h1m0-1h1m0-1h1m0-1h1m0-1h1m0-1h1m0-1h1m0-1h1m0-1h1m0-1h1m0-1h1m0-1h1m0-1h1m0-1h1m0-1h1m0-1h1m0-1h1m0-1h1m0-1h1m0-1h1m0-1h1m0-1h1m0-1h1m0-1h1m0-1h1m0-1h1m0-1h1m0-1h1m0-1h1m0-1h1m0-1h1m0-1h1m0-1h1m0-1h1m0-1h1m0-1h1m0-1h1m0-1h1m0-1h1m0-1h1m0-1h1m0-1h1m0-1h1m0-1h1m0-1h1m0-1h1m0-1h1m0-1h1m0-1h1m0-1h1m0-1h1m0-1h1m0-1h1m0-1h1m0-1h1m0-1h1m0-1h1m0-1h1m0-1h1m0-1h1m0-1h1m0-1h1m0-1h1m0-1h1m0-1h1m0-1h1m0-1h1m0-1h1m0-1h1m0-1h1m0-1h1m0-1h1m0-1h1m0-1h1m0-1h1m0-1h1m0-1h1m0-1h1m0-1h1m0-1h1m0-1h1m0-1h1m0-1h1m0-1h1m0-1h1m0-1h1m0-1h1m0-1h1m0-1h1m0-1h1m0-1h1m0-1h1m0-1h1m0-1h1m0-1h1m0-1h1m0-1h1m0-1h1m0-1h1m0-1h1m0-1h1m0-1h1m0-1h1m0-1h1m0-1h1m0-1h1m0-1h1m0-1h1m0-1h1m0-1h1m0-1h1m0-1h1m0-1h1m0-1h1m0-1h1m0-1h1m0-1h1m0-1h1m0-1h1m0-1h1m0-1h1m0-1h1m0-1h1m0-1h1m0-1h1m0-1h1m0-1h1m0-1h1m0-1h1m0-1h1m0-1h1m0-1h1m0-1h1m0-1h1m0-1h1m0-1h1m0-1h1m0-1h1m0-1h1m0-1h1m0-1h1m0-1h1m0-1h1m0-1h1m0-1h1m0-1h1m0-1h1m0-1h1m0-1h1m0-1h1m0-1h1m0-1h1m0-1h1m0-1h1m0-1h1m0-1h1m0-1h1m0-1h1m0-1h1m0-1h1m0-1h1m0-1h1m0-1h1m0-1h1m0-1h1m0-1h1m0-1h1m0-1h1m0-1h1m0-1h1m0-1h1m0-1h1m0-1h1m0-1h1m0-1h1m0-1h1m0-1h1m0-1h1m0-1h1m0-1h1m0-1h1m0-1h1m0-1h1m0-1h1m0-1h1m0-1h1m0-1h1m0-1h1m0-1h1m0-1h1m0-1h1m0-1h1m0-1h1m0-1h1m0-1h1m0-1h1m0-1h1m0-1h1m0-1h1m0-1h1m0-1h1m0-1h1m0-1h1m0-1h1m0-1h1m0-1h1m0-1h1m0-1h1m0-1h1m0-1h1m0-1h1m0-1h1m0-1h1m0-1h1m0-1h1m0-1h1m0-1h1m0-1h1m0-1h1m0-1h1m0-1h1m0-1h1m0-1h1m0-1h1m0-1h1m0-1h1m0-1h1m0-1h1m0-1h1m0-1h1m0-1h1m0-1h1m0-1h1m0-1h1m0-1h1m0-1h1m0-1h1m0-1h1m0-1h1m0-1h1m0-1h1m0-1h1m0-1h1m0-1h1m0-1h1m0-1h1m0-1h1m0-1h1m0-1h1m0-1h1m0-1h1m0-1h1m0-1h1m0-1h1m0-1h1m0-1h1m0-1h1m0-1h1m0-1h1m0-1h1m0-1h1m0-1h1m0-1h1m0-1h1m0-1h1m0-1h1m0-1h1m0-1h1m0-1h1m0-1h1m0-1h1m0-1h1m0-1h1m0-1h1m0-1h1m0-1h1m0-1h1m0-1h1m0-1h1m0-1h1m0-1h1m0-1h1m0-1h1m0-1h1m0-1h1m0-1h1m0-1h1m0-1h1m0-1h1m0-1h1m0-1h1m0-1h1m0-1h1m0-1h1m0-1h1m0-1h1m0-1h1m0-1h1m0-1h1m0-1h1m0-1h1m0-1h1m0-1h1m0-1h1m0-1h1m0-1h1m0-1h1m0-1h1m0-1h1m0-1h1m0-1h1m0-1h1m0-1h1m0-1h1m0-1h1m0-1h1m0-1h1m0-1h1m0-1h1m0-1h1m0-1h1m0-1h1m0-1h1m0-1h1m0-1h1m0-1h1m0-1h1m0-1h1m0-1h1m0-1h1m0-1h1m0-1h1m0-1h1m0-1h1m0-1h1m0-1h1m0-1h1m0-1h1m0-1h1m0-1h1m0-1h1m0-1h1m0-1h1m0-1h1m0-1h1m0-1h1m0-1h1m0-1h1m0-1h1m0-1h1m0-1h1m0-1h1m0-1h1m0-1h1m0-1h1m0-1h1m0-1h1m0-1h1m0-1h1m0-1h1m0-1h1m0-1h1m0-1h1m0-1h1m0-1h1m0-1h1m0-1h1m0-1h1m0-1h1m0-1h1m0-1h1m0-1h1m0-1h1m0-1h1m0-1h1m0-1h1m0-1h1m0-1h1m0-1h1m0-1h1m0-1h1m0-1h1m0-1h1m0-1h1m0-1h1m0-1h1m0-1h1m0-1h1m0-1h1m0-1h1m0-1h1m0-1h1m0-1h1m0-1h1m0-1h1m0-1h1m0-1h1m0-1h1m0-1h1m0-1h1m0-1h1m0-1h1m0-1h1m0-1h1m0-1h1m0-1h1m0-1h1m0-1h1m0-1h1m0-1h1m0-1h1m-511 570h1m0-1h1m0-1h1m0-1h1m0-1h1m0-1h1m0-1h1m0-1h1m0-1h1m0-1h1m0-1h1m0-1h1m0-1h1m0-1h1m0-1h1m0-1h1m0-1h1m0-1h1m0-1h1m0-1h1m0-1h1m0-1h1m0-1h1m0-1h1m0-1h1m0-1h1m0-1h1m0-1h1m0-1h1m0-1h1m0-1h1m0-1h1m0-1h1m0-1h1m0-1h1m0-1h1m0-1h1m0-1h1m0-1h1m0-1h1m0-1h1m0-1h1m0-1h1m0-1h1m0-1h1m0-1h1m0-1h1m0-1h1m0-1h1m0-1h1m0-1h1m0-1h1m0-1h1m0-1h1m0-1h1m0-1h1m0-1h1m0-1h1m0-1h1m0-1h1m0-1h1m0-1h1m0-1h1m0-1h1m0-1h1m0-1h1m0-1h1m0-1h1m0-1h1m0-1h1m0-1h1m0-1h1m0-1h1m0-1h1m0-1h1m0-1h1m0-1h1m0-1h1m0-1h1m0-1h1m0-1h1m0-1h1m0-1h1m0-1h1m0-1h1m0-1h1m0-1h1m0-1h1m0-1h1m0-1h1m0-1h1m0-1h1m0-1h1m0-1h1m0-1h1m0-1h1m0-1h1m0-1h1m0-1h1m0-1h1m0-1h1m0-1h1m0-1h1m0-1h1m0-1h1m0-1h1m0-1h1m0-1h1m0-1h1m0-1h1m0-1h1m0-1h1m0-1h1m0-1h1m0-1h1m0-1h1m0-1h1m0-1h1m0-1h1m0-1h1m0-1h1m0-1h1m0-1h1m0-1h1m0-1h1m0-1h1m0-1h1m0-1h1m0-1h1m0-1h1m0-1h1m0-1h1m0-1h1m0-1h1m0-1h1m0-1h1m0-1h1m0-1h1m0-1h1m0-1h1m0-1h1m0-1h1m0-1h1m0-1h1m0-1h1m0-1h1m0-1h1m0-1h1m0-1h1m0-1h1m0-1h1m0-1h1m0-1h1m0-1h1m0-1h1m0-1h1m0-1h1m0-1h1m0-1h1m0-1h1m0-1h1m0-1h1m0-1h1m0-1h1m0-1h1m0-1h1m0-1h1m0-1h1m0-1h1m0-1h1m0-1h1m0-1h1m0-1h1m0-1h1m0-1h1m0-1h1m0-1h1m0-1h1m0-1h1m0-1h1m0-1h1m0-1h1m0-1h1m0-1h1m0-1h1m0-1h1m0-1h1m0-1h1m0-1h1m0-1h1m0-1h1m0-1h1m0-1h1m0-1h1m0-1h1m0-1h1m0-1h1m0-1h1m0-1h1m0-1h1m0-1h1m0-1h1m0-1h1m0-1h1m0-1h1m0-1h1m0-1h1m0-1h1m0-1h1m0-1h1m0-1h1m0-1h1m0-1h1m0-1h1m0-1h1m0-1h1m0-1h1m0-1h1m0-1h1m0-1h1m0-1h1m0-1h1m0-1h1m0-1h1m0-1h1m0-1h1m0-1h1m0-1h1m0-1h1m0-1h1m0-1h1m0-1h1m0-1h1m0-1h1m0-1h1m0-1h1m0-1h1m0-1h1m0-1h1m0-1h1m0-1h1m0-1h1m0-1h1m0-1h1m0-1h1m0-1h1m0-1h1m0-1h1m0-1h1m0-1h1m0-1h1m0-1h1m0-1h1m0-1h1m0-1h1m0-1h1m0-1h1m0-1h1m0-1h1m0-1h1m0-1h1m0-1h1m0-1h1m0-1h1m0-1h1m0-1h1m0-1h1m0-1h1m0-1h1m0-1h1m0-1h1m0-1h1m0-1h1m0-1h1m0-1h1m0-1h1m0-1h1m0-1h1m0-1h1m0-1h1m0-1h1m0-1h1m0-1h1m0-1h1m0-1h1m0-1h1m0-1h1m0-1h1m0-1h1m0-1h1m0-1h1m0-1h1m0-1h1m0-1h1m0-1h1m0-1h1m0-1h1m0-1h1m0-1h1m0-1h1m0-1h1m0-1h1m0-1h1m0-1h1m0-1h1m0-1h1m0-1h1m0-1h1m0-1h1m0-1h1m0-1h1m0-1h1m0-1h1m0-1h1m0-1h1m0-1h1m0-1h1m0-1h1m0-1h1m0-1h1m0-1h1m0-1h1m0-1h1m0-1h1m0-1h1m0-1h1m0-1h1m0-1h1m0-1h1m0-1h1m0-1h1m0-1h1m0-1h1m0-1h1m0-1h1m0-1h1m0-1h1m0-1h1m0-1h1m0-1h1m0-1h1m0-1h1m0-1h1m0-1h1m0-1h1m0-1h1m0-1h1m0-1h1m0-1h1m0-1h1m0-1h1m0-1h1m0-1h1m0-1h1m0-1h1m0-1h1m0-1h1m0-1h1m0-1h1m0-1h1m0-1h1m0-1h1m0-1h1m0-1h1m0-1h1m0-1h1m0-1h1m0-1h1m0-1h1m0-1h1m0-1h1m0-1h1m0-1h1m0-1h1m0-1h1m0-1h1m0-1h1m0-1h1m0-1h1m0-1h1m0-1h1m0-1h1m0-1h1m0-1h1m0-1h1m0-1h1m0-1h1m0-1h1m0-1h1m0-1h1m0-1h1m0-1h1m0-1h1m0-1h1m0-1h1m0-1h1m0-1h1m0-1h1m0-1h1m0-1h1m0-1h1m0-1h1m0-1h1m0-1h1m0-1h1m0-1h1m0-1h1m0-1h1m0-1h1m0-1h1m0-1h1m0-1h1m0-1h1m0-1h1m0-1h1m0-1h1m0-1h1m0-1h1m0-1h1m0-1h1m0-1h1m0-1h1m0-1h1m0-1h1m0-1h1m0-1h1m0-1h1m0-1h1m0-1h1m0-1h1m0-1h1m0-1h1m0-1h1m0-1h1m0-1h1m0-1h1m0-1h1m0-1h1m0-1h1m0-1h1m0-1h1m0-1h1m0-1h1m0-1h1m0-1h1m0-1h1m0-1h1m0-1h1m0-1h1m0-1h1m0-1h1m0-1h1m0-1h1m0-1h1m0-1h1m0-1h1m0-1h1m0-1h1m0-1h1m0-1h1m0-1h1m0-1h1m0-1h1m0-1h1m0-1h1m0-1h1m0-1h1m0-1h1m0-1h1m0-1h1m0-1h1m0-1h1m0-1h1m0-1h1m0-1h1m0-1h1m0-1h1m0-1h1m0-1h1m0-1h1m0-1h1m0-1h1m0-1h1m0-1h1m0-1h1m0-1h1m0-1h1m0-1h1m0-1h1m0-1h1m0-1h1m0-1h1m0-1h1m0-1h1m0-1h1m0-1h1m0-1h1m0-1h1m0-1h1m0-1h1m0-1h1m0-1h1m0-1h1m0-1h1m0-1h1m0-1h1m0-1h1m0-1h1m0-1h1m0-1h1m0-1h1m0-1h1m0-1h1m0-1h1m0-1h1m0-1h1m0-1h1m0-1h1m0-1h1m0-1h1m0-1h1m0-1h1m0-1h1m0-1h1m0-1h1m0-1h1m0-1h1m0-1h1m0-1h1m0-1h1m0-1h1m0-1h1m0-1h1m0-1h1m0-1h1m0-1h1m0-1h1m0-1h1m0-1h1m0-1h1m0-1h1m0-1h1m0-1h1m0-1h1m0-1h1m0-1h1m0-1h1m0-1h1m0-1h1m0-1h1m0-1h1m0-1h1m0-1h1m0-1h1m0-1h1m0-1h1m0-1h1m0-1h1m0-1h1m0-1h1m0-1h1m0-1h1m0-1h1m0-1h1m0-1h1m0-1h1m0-1h1m0-1h1m0-1h1m0-1h1m0-1h1m-571 630h1m0-1h1m0-1h1m0-1h1m0-1h1m0-1h1m0-1h1m0-1h1m0-1h1m0-1h1m0-1h1m0-1h1m0-1h1m0-1h1m0-1h1m0-1h1m0-1h1m0-1h1m0-1h1m0-1h1m0-1h1m0-1h1m0-1h1m0-1h1m0-1h1m0-1h1m0-1h1m0-1h1m0-1h1m0-1h1m0-1h1m0-1h1m0-1h1m0-1h1m0-1h1m0-1h1m0-1h1m0-1h1m0-1h1m0-1h1m0-1h1m0-1h1m0-1h1m0-1h1m0-1h1m0-1h1m0-1h1m0-1h1m0-1h1m0-1h1m0-1h1m0-1h1m0-1h1m0-1h1m0-1h1m0-1h1m0-1h1m0-1h1m0-1h1m0-1h1m0-1h1m0-1h1m0-1h1m0-1h1m0-1h1m0-1h1m0-1h1m0-1h1m0-1h1m0-1h1m0-1h1m0-1h1m0-1h1m0-1h1m0-1h1m0-1h1m0-1h1m0-1h1m0-1h1m0-1h1m0-1h1m0-1h1m0-1h1m0-1h1m0-1h1m0-1h1m0-1h1m0-1h1m0-1h1m0-1h1m0-1h1m0-1h1m0-1h1m0-1h1m0-1h1m0-1h1m0-1h1m0-1h1m0-1h1m0-1h1m0-1h1m0-1h1m0-1h1m0-1h1m0-1h1m0-1h1m0-1h1m0-1h1m0-1h1m0-1h1m0-1h1m0-1h1m0-1h1m0-1h1m0-1h1m0-1h1m0-1h1m0-1h1m0-1h1m0-1h1m0-1h1m0-1h1m0-1h1m0-1h1m0-1h1m0-1h1m0-1h1m0-1h1m0-1h1m0-1h1m0-1h1m0-1h1m0-1h1m0-1h1m0-1h1m0-1h1m0-1h1m0-1h1m0-1h1m0-1h1m0-1h1m0-1h1m0-1h1m0-1h1m0-1h1m0-1h1m0-1h1m0-1h1m0-1h1m0-1h1m0-1h1m0-1h1m0-1h1m0-1h1m0-1h1m0-1h1m0-1h1m0-1h1m0-1h1m0-1h1m0-1h1m0-1h1m0-1h1m0-1h1m0-1h1m0-1h1m0-1h1m0-1h1m0-1h1m0-1h1m0-1h1m0-1h1m0-1h1m0-1h1m0-1h1m0-1h1m0-1h1m0-1h1m0-1h1m0-1h1m0-1h1m0-1h1m0-1h1m0-1h1m0-1h1m0-1h1m0-1h1m0-1h1m0-1h1m0-1h1m0-1h1m0-1h1m0-1h1m0-1h1m0-1h1m0-1h1m0-1h1m0-1h1m0-1h1m0-1h1m0-1h1m0-1h1m0-1h1m0-1h1m0-1h1m0-1h1m0-1h1m0-1h1m0-1h1m0-1h1m0-1h1m0-1h1m0-1h1m0-1h1m0-1h1m0-1h1m0-1h1m0-1h1m0-1h1m0-1h1m0-1h1m0-1h1m0-1h1m0-1h1m0-1h1m0-1h1m0-1h1m0-1h1m0-1h1m0-1h1m0-1h1m0-1h1m0-1h1m0-1h1m0-1h1m0-1h1m0-1h1m0-1h1m0-1h1m0-1h1m0-1h1m0-1h1m0-1h1m0-1h1m0-1h1m0-1h1m0-1h1m0-1h1m0-1h1m0-1h1m0-1h1m0-1h1m0-1h1m0-1h1m0-1h1m0-1h1m0-1h1m0-1h1m0-1h1m0-1h1m0-1h1m0-1h1m0-1h1m0-1h1m0-1h1m0-1h1m0-1h1m0-1h1m0-1h1m0-1h1m0-1h1m0-1h1m0-1h1m0-1h1m0-1h1m0-1h1m0-1h1m0-1h1m0-1h1m0-1h1m0-1h1m0-1h1m0-1h1m0-1h1m0-1h1m0-1h1m0-1h1m0-1h1m0-1h1m0-1h1m0-1h1m0-1h1m0-1h1m0-1h1m0-1h1m0-1h1m0-1h1m0-1h1m0-1h1m0-1h1m0-1h1m0-1h1m0-1h1m0-1h1m0-1h1m0-1h1m0-1h1m0-1h1m0-1h1m0-1h1m0-1h1m0-1h1m0-1h1m0-1h1m0-1h1m0-1h1m0-1h1m0-1h1m0-1h1m0-1h1m0-1h1m0-1h1m0-1h1m0-1h1m0-1h1m0-1h1m0-1h1m0-1h1m0-1h1m0-1h1m0-1h1m0-1h1m0-1h1m0-1h1m0-1h1m0-1h1m0-1h1m0-1h1m0-1h1m0-1h1m0-1h1m0-1h1m0-1h1m0-1h1m0-1h1m0-1h1m0-1h1m0-1h1m0-1h1m0-1h1m0-1h1m0-1h1m0-1h1m0-1h1m0-1h1m0-1h1m0-1h1m0-1h1m0-1h1m0-1h1m0-1h1m0-1h1m0-1h1m0-1h1m0-1h1m0-1h1m0-1h1m0-1h1m0-1h1m0-1h1m0-1h1m0-1h1m0-1h1m0-1h1m0-1h1m0-1h1m0-1h1m0-1h1m0-1h1m0-1h1m0-1h1m0-1h1m0-1h1m0-1h1m0-1h1m0-1h1m0-1h1m0-1h1m0-1h1m0-1h1m0-1h1m0-1h1m0-1h1m0-1h1m0-1h1m0-1h1m0-1h1m0-1h1m0-1h1m0-1h1m0-1h1m0-1h1m0-1h1m0-1h1m0-1h1m0-1h1m0-1h1m0-1h1m0-1h1m0-1h1m0-1h1m0-1h1m0-1h1m0-1h1m0-1h1m0-1h1m0-1h1m0-1h1m0-1h1m0-1h1m0-1h1m0-1h1m0-1h1m0-1h1m0-1h1m0-1h1m0-1h1m0-1h1m0-1h1m0-1h1m0-1h1m0-1h1m0-1h1m0-1h1m0-1h1m0-1h1m0-1h1m0-1h1m0-1h1m0-1h1m0-1h1m0-1h1m0-1h1m0-1h1m0-1h1m0-1h1m0-1h1m0-1h1m0-1h1m0-1h1m0-1h1m0-1h1m0-1h1m0-1h1m0-1h1m0-1h1m0-1h1m0-1h1m0-1h1m0-1h1m0-1h1m0-1h1m0-1h1m0-1h1m0-1h1m0-1h1m0-1h1m0-1h1m0-1h1m0-1h1m0-1h1m0-1h1m0-1h1m0-1h1m0-1h1m0-1h1m0-1h1m0-1h1m0-1h1m0-1h1m0-1h1m0-1h1m0-1h1m0-1h1m0-1h1m0-1h1m0-1h1m0-1h1m0-1h1m0-1h1m0-1h1m0-1h1m0-1h1m0-1h1m0-1h1m0-1h1m0-1h1m0-1h1m0-1h1m0-1h1m0-1h1m0-1h1m0-1h1m0-1h1m0-1h1m0-1h1m0-1h1m0-1h1m0-1h1m0-1h1m0-1h1m0-1h1m0-1h1m0-1h1m0-1h1m0-1h1m0-1h1m0-1h1m0-1h1m0-1h1m0-1h1m0-1h1m0-1h1m0-1h1m0-1h1m0-1h1m0-1h1m0-1h1m0-1h1m0-1h1m0-1h1m0-1h1m0-1h1m0-1h1m0-1h1m0-1h1m0-1h1m0-1h1m0-1h1m0-1h1m0-1h1m0-1h1m0-1h1m0-1h1m0-1h1m0-1h1m0-1h1m0-1h1m0-1h1m0-1h1m0-1h1m0-1h1m0-1h1m0-1h1m0-1h1m0-1h1m0-1h1m0-1h1m0-1h1m0-1h1m0-1h1m0-1h1m0-1h1m0-1h1m0-1h1m0-1h1m0-1h1m0-1h1m0-1h1m0-1h1m0-1h1m0-1h1m0-1h1m0-1h1m0-1h1m0-1h1m0-1h1m0-1h1m0-1h1m0-1h1m0-1h1m0-1h1m0-1h1m0-1h1m0-1h1m0-1h1m0-1h1m0-1h1m0-1h1m0-1h1m0-1h1m0-1h1m0-1h1m0-1h1m0-1h1m0-1h1m0-1h1m0-1h1m0-1h1m0-1h1m0-1h1m-601 660h1m0-1h1m0-1h1m0-1h1m0-1h1m0-1h1m0-1h1m0-1h1m0-1h1m0-1h1m0-1h1m0-1h1m0-1h1m0-1h1m0-1h1m0-1h1m0-1h1m0-1h1m0-1h1m0-1h1m0-1h1m0-1h1m0-1h1m0-1h1m0-1h1m0-1h1m0-1h1m0-1h1m0-1h1m0-1h1m0-1h1m0-1h1m0-1h1m0-1h1m0-1h1m0-1h1m0-1h1m0-1h1m0-1h1m0-1h1m0-1h1m0-1h1m0-1h1m0-1h1m0-1h1m0-1h1m0-1h1m0-1h1m0-1h1m0-1h1m0-1h1m0-1h1m0-1h1m0-1h1m0-1h1m0-1h1m0-1h1m0-1h1m0-1h1m0-1h1m0-1h1m0-1h1m0-1h1m0-1h1m0-1h1m0-1h1m0-1h1m0-1h1m0-1h1m0-1h1m0-1h1m0-1h1m0-1h1m0-1h1m0-1h1m0-1h1m0-1h1m0-1h1m0-1h1m0-1h1m0-1h1m0-1h1m0-1h1m0-1h1m0-1h1m0-1h1m0-1h1m0-1h1m0-1h1m0-1h1m0-1h1m0-1h1m0-1h1m0-1h1m0-1h1m0-1h1m0-1h1m0-1h1m0-1h1m0-1h1m0-1h1m0-1h1m0-1h1m0-1h1m0-1h1m0-1h1m0-1h1m0-1h1m0-1h1m0-1h1m0-1h1m0-1h1m0-1h1m0-1h1m0-1h1m0-1h1m0-1h1m0-1h1m0-1h1m0-1h1m0-1h1m0-1h1m0-1h1m0-1h1m0-1h1m0-1h1m0-1h1m0-1h1m0-1h1m0-1h1m0-1h1m0-1h1m0-1h1m0-1h1m0-1h1m0-1h1m0-1h1m0-1h1m0-1h1m0-1h1m0-1h1m0-1h1m0-1h1m0-1h1m0-1h1m0-1h1m0-1h1m0-1h1m0-1h1m0-1h1m0-1h1m0-1h1m0-1h1m0-1h1m0-1h1m0-1h1m0-1h1m0-1h1m0-1h1m0-1h1m0-1h1m0-1h1m0-1h1m0-1h1m0-1h1m0-1h1m0-1h1m0-1h1m0-1h1m0-1h1m0-1h1m0-1h1m0-1h1m0-1h1m0-1h1m0-1h1m0-1h1m0-1h1m0-1h1m0-1h1m0-1h1m0-1h1m0-1h1m0-1h1m0-1h1m0-1h1m0-1h1m0-1h1m0-1h1m0-1h1m0-1h1m0-1h1m0-1h1m0-1h1m0-1h1m0-1h1m0-1h1m0-1h1m0-1h1m0-1h1m0-1h1m0-1h1m0-1h1m0-1h1m0-1h1m0-1h1m0-1h1m0-1h1m0-1h1m0-1h1m0-1h1m0-1h1m0-1h1m0-1h1m0-1h1m0-1h1m0-1h1m0-1h1m0-1h1m0-1h1m0-1h1m0-1h1m0-1h1m0-1h1m0-1h1m0-1h1m0-1h1m0-1h1m0-1h1m0-1h1m0-1h1m0-1h1m0-1h1m0-1h1m0-1h1m0-1h1m0-1h1m0-1h1m0-1h1m0-1h1m0-1h1m0-1h1m0-1h1m0-1h1m0-1h1m0-1h1m0-1h1m0-1h1m0-1h1m0-1h1m0-1h1m0-1h1m0-1h1m0-1h1m0-1h1m0-1h1m0-1h1m0-1h1m0-1h1m0-1h1m0-1h1m0-1h1m0-1h1m0-1h1m0-1h1m0-1h1m0-1h1m0-1h1m0-1h1m0-1h1m0-1h1m0-1h1m0-1h1m0-1h1m0-1h1m0-1h1m0-1h1m0-1h1m0-1h1m0-1h1m0-1h1m0-1h1m0-1h1m0-1h1m0-1h1m0-1h1m0-1h1m0-1h1m0-1h1m0-1h1m0-1h1m0-1h1m0-1h1m0-1h1m0-1h1m0-1h1m0-1h1m0-1h1m0-1h1m0-1h1m0-1h1m0-1h1m0-1h1m0-1h1m0-1h1m0-1h1m0-1h1m0-1h1m0-1h1m0-1h1m0-1h1m0-1h1m0-1h1m0-1h1m0-1h1m0-1h1m0-1h1m0-1h1m0-1h1m0-1h1m0-1h1m0-1h1m0-1h1m0-1h1m0-1h1m0-1h1m0-1h1m0-1h1m0-1h1m0-1h1m0-1h1m0-1h1m0-1h1m0-1h1m0-1h1m0-1h1m0-1h1m0-1h1m0-1h1m0-1h1m0-1h1m0-1h1m0-1h1m0-1h1m0-1h1m0-1h1m0-1h1m0-1h1m0-1h1m0-1h1m0-1h1m0-1h1m0-1h1m0-1h1m0-1h1m0-1h1m0-1h1m0-1h1m0-1h1m0-1h1m0-1h1m0-1h1m0-1h1m0-1h1m0-1h1m0-1h1m0-1h1m0-1h1m0-1h1m0-1h1m0-1h1m0-1h1m0-1h1m0-1h1m0-1h1m0-1h1m0-1h1m0-1h1m0-1h1m0-1h1m0-1h1m0-1h1m0-1h1m0-1h1m0-1h1m0-1h1m0-1h1m0-1h1m0-1h1m0-1h1m0-1h1m0-1h1m0-1h1m0-1h1m0-1h1m0-1h1m0-1h1m0-1h1m0-1h1m0-1h1m0-1h1m0-1h1m0-1h1m0-1h1m0-1h1m0-1h1m0-1h1m0-1h1m0-1h1m0-1h1m0-1h1m0-1h1m0-1h1m0-1h1m0-1h1m0-1h1m0-1h1m0-1h1m0-1h1m0-1h1m0-1h1m0-1h1m0-1h1m0-1h1m0-1h1m0-1h1m0-1h1m0-1h1m0-1h1m0-1h1m0-1h1m0-1h1m0-1h1m0-1h1m0-1h1m0-1h1m0-1h1m0-1h1m0-1h1m0-1h1m0-1h1m0-1h1m0-1h1m0-1h1m0-1h1m0-1h1m0-1h1m0-1h1m0-1h1m0-1h1m0-1h1m0-1h1m0-1h1m0-1h1m0-1h1m0-1h1m0-1h1m0-1h1m0-1h1m0-1h1m0-1h1m0-1h1m0-1h1m0-1h1m0-1h1m0-1h1m0-1h1m0-1h1m0-1h1m0-1h1m0-1h1m0-1h1m0-1h1m0-1h1m0-1h1m0-1h1m0-1h1m0-1h1m0-1h1m0-1h1m0-1h1m0-1h1m0-1h1m0-1h1m0-1h1m0-1h1m0-1h1m0-1h1m0-1h1m0-1h1m0-1h1m0-1h1m0-1h1m0-1h1m0-1h1m0-1h1m0-1h1m0-1h1m0-1h1m0-1h1m0-1h1m0-1h1m0-1h1m0-1h1m0-1h1m0-1h1m0-1h1m0-1h1m0-1h1m0-1h1m0-1h1m0-1h1m0-1h1m0-1h1m0-1h1m0-1h1m0-1h1m0-1h1m0-1h1m0-1h1m0-1h1m0-1h1m0-1h1m0-1h1m0-1h1m0-1h1m0-1h1m0-1h1m0-1h1m0-1h1m0-1h1m0-1h1m0-1h1m0-1h1m0-1h1m0-1h1m0-1h1m0-1h1m0-1h1m0-1h1m0-1h1m0-1h1m0-1h1m0-1h1m0-1h1m0-1h1m0-1h1m0-1h1m0-1h1m0-1h1m0-1h1m0-1h1m0-1h1m0-1h1m0-1h1m0-1h1m0-1h1m0-1h1m0-1h1m0-1h1m0-1h1m0-1h1m0-1h1m0-1h1m0-1h1m0-1h1m0-1h1m0-1h1m0-1h1m0-1h1m0-1h1m0-1h1m0-1h1m0-1h1m0-1h1m0-1h1m0-1h1m0-1h1m0-1h1m0-1h1m0-1h1m0-1h1m0-1h1m0-1h1m0-1h1m0-1h1m0-1h1m0-1h1m0-1h1m0-1h1m0-1h1m0-1h1m0-1h1m0-1h1m0-1h1m0-1h1m0-1h1m0-1h1m0-1h1m0-1h1m0-1h1m-550 609h1m0-1h1m0-1h1m0-1h1m0-1h1m0-1h1m0-1h1m0-1h1m0-1h1m0-1h1m0-1h1m0-1h1m0-1h1m0-1h1m0-1h1m0-1h1m0-1h1m0-1h1m0-1h1m0-1h1m0-1h1m0-1h1m0-1h1m0-1h1m0-1h1m0-1h1m0-1h1m0-1h1m0-1h1m0-1h1m0-1h1m0-1h1m0-1h1m0-1h1m0-1h1m0-1h1m0-1h1m0-1h1m0-1h1m0-1h1m0-1h1m0-1h1m0-1h1m0-1h1m0-1h1m0-1h1m0-1h1m0-1h1m0-1h1m0-1h1m0-1h1m0-1h1m0-1h1m0-1h1m0-1h1m0-1h1m0-1h1m0-1h1m0-1h1m0-1h1m0-1h1m0-1h1m0-1h1m0-1h1m0-1h1m0-1h1m0-1h1m0-1h1m0-1h1m0-1h1m0-1h1m0-1h1m0-1h1m0-1h1m0-1h1m0-1h1m0-1h1m0-1h1m0-1h1m0-1h1m0-1h1m0-1h1m0-1h1m0-1h1m0-1h1m0-1h1m0-1h1m0-1h1m0-1h1m0-1h1m0-1h1m0-1h1m0-1h1m0-1h1m0-1h1m0-1h1m0-1h1m0-1h1m0-1h1m0-1h1m0-1h1m0-1h1m0-1h1m0-1h1m0-1h1m0-1h1m0-1h1m0-1h1m0-1h1m0-1h1m0-1h1m0-1h1m0-1h1m0-1h1m0-1h1m0-1h1m0-1h1m0-1h1m0-1h1m0-1h1m0-1h1m0-1h1m0-1h1m0-1h1m0-1h1m0-1h1m0-1h1m0-1h1m0-1h1m0-1h1m0-1h1m0-1h1m0-1h1m0-1h1m0-1h1m0-1h1m0-1h1m0-1h1m0-1h1m0-1h1m0-1h1m0-1h1m0-1h1m0-1h1m0-1h1m0-1h1m0-1h1m0-1h1m0-1h1m0-1h1m0-1h1m0-1h1m0-1h1m0-1h1m0-1h1m0-1h1m0-1h1m0-1h1m0-1h1m0-1h1m0-1h1m0-1h1m0-1h1m0-1h1m0-1h1m0-1h1m0-1h1m0-1h1m0-1h1m0-1h1m0-1h1m0-1h1m0-1h1m0-1h1m0-1h1m0-1h1m0-1h1m0-1h1m0-1h1m0-1h1m0-1h1m0-1h1m0-1h1m0-1h1m0-1h1m0-1h1m0-1h1m0-1h1m0-1h1m0-1h1m0-1h1m0-1h1m0-1h1m0-1h1m0-1h1m0-1h1m0-1h1m0-1h1m0-1h1m0-1h1m0-1h1m0-1h1m0-1h1m0-1h1m0-1h1m0-1h1m0-1h1m0-1h1m0-1h1m0-1h1m0-1h1m0-1h1m0-1h1m0-1h1m0-1h1m0-1h1m0-1h1m0-1h1m0-1h1m0-1h1m0-1h1m0-1h1m0-1h1m0-1h1m0-1h1m0-1h1m0-1h1m0-1h1m0-1h1m0-1h1m0-1h1m0-1h1m0-1h1m0-1h1m0-1h1m0-1h1m0-1h1m0-1h1m0-1h1m0-1h1m0-1h1m0-1h1m0-1h1m0-1h1m0-1h1m0-1h1m0-1h1m0-1h1m0-1h1m0-1h1m0-1h1m0-1h1m0-1h1m0-1h1m0-1h1m0-1h1m0-1h1m0-1h1m0-1h1m0-1h1m0-1h1m0-1h1m0-1h1m0-1h1m0-1h1m0-1h1m0-1h1m0-1h1m0-1h1m0-1h1m0-1h1m0-1h1m0-1h1m0-1h1m0-1h1m0-1h1m0-1h1m0-1h1m0-1h1m0-1h1m0-1h1m0-1h1m0-1h1m0-1h1m0-1h1m0-1h1m0-1h1m0-1h1m0-1h1m0-1h1m0-1h1m0-1h1m0-1h1m0-1h1m0-1h1m0-1h1m0-1h1m0-1h1m0-1h1m0-1h1m0-1h1m0-1h1m0-1h1m0-1h1m0-1h1m0-1h1m0-1h1m0-1h1m0-1h1m0-1h1m0-1h1m0-1h1m0-1h1m0-1h1m0-1h1m0-1h1m0-1h1m0-1h1m0-1h1m0-1h1m0-1h1m0-1h1m0-1h1m0-1h1m0-1h1m0-1h1m0-1h1m0-1h1m0-1h1m0-1h1m0-1h1m0-1h1m0-1h1m0-1h1m0-1h1m0-1h1m0-1h1m0-1h1m0-1h1m0-1h1m0-1h1m0-1h1m0-1h1m0-1h1m0-1h1m0-1h1m0-1h1m0-1h1m0-1h1m0-1h1m0-1h1m0-1h1m0-1h1m0-1h1m0-1h1m0-1h1m0-1h1m0-1h1m0-1h1m0-1h1m0-1h1m0-1h1m0-1h1m0-1h1m0-1h1m0-1h1m0-1h1m0-1h1m0-1h1m0-1h1m0-1h1m0-1h1m0-1h1m0-1h1m0-1h1m0-1h1m0-1h1m0-1h1m0-1h1m0-1h1m0-1h1m0-1h1m0-1h1m0-1h1m0-1h1m0-1h1m0-1h1m0-1h1m0-1h1m0-1h1m0-1h1m0-1h1m0-1h1m0-1h1m0-1h1m0-1h1m0-1h1m0-1h1m0-1h1m0-1h1m0-1h1m0-1h1m0-1h1m0-1h1m0-1h1m0-1h1m0-1h1m0-1h1m0-1h1m0-1h1m0-1h1m0-1h1m0-1h1m0-1h1m0-1h1m0-1h1m0-1h1m0-1h1m0-1h1m0-1h1m0-1h1m0-1h1m0-1h1m0-1h1m0-1h1m0-1h1m0-1h1m0-1h1m0-1h1m0-1h1m0-1h1m0-1h1m0-1h1m0-1h1m0-1h1m0-1h1m0-1h1m0-1h1m0-1h1m0-1h1m0-1h1m0-1h1m0-1h1m0-1h1m0-1h1m0-1h1m0-1h1m0-1h1m0-1h1m0-1h1m0-1h1m0-1h1m0-1h1m0-1h1m0-1h1m0-1h1m0-1h1m0-1h1m0-1h1m0-1h1m0-1h1m0-1h1m0-1h1m0-1h1m0-1h1m0-1h1m0-1h1m0-1h1m0-1h1m0-1h1m0-1h1m0-1h1m0-1h1m0-1h1m0-1h1m0-1h1m0-1h1m0-1h1m0-1h1m0-1h1m0-1h1m0-1h1m0-1h1m0-1h1m0-1h1m0-1h1m0-1h1m0-1h1m0-1h1m0-1h1m0-1h1m0-1h1m0-1h1m0-1h1m0-1h1m0-1h1m0-1h1m0-1h1m0-1h1m0-1h1m0-1h1m0-1h1m0-1h1m0-1h1m0-1h1m0-1h1m0-1h1m0-1h1m0-1h1m0-1h1m0-1h1m0-1h1m0-1h1m0-1h1m0-1h1m0-1h1m0-1h1m0-1h1m0-1h1m0-1h1m0-1h1m0-1h1m0-1h1m0-1h1m0-1h1m0-1h1m0-1h1m0-1h1m0-1h1m0-1h1m0-1h1m0-1h1m0-1h1m0-1h1m0-1h1m0-1h1m0-1h1m0-1h1m0-1h1m0-1h1m0-1h1m0-1h1m0-1h1m0-1h1m0-1h1m0-1h1m0-1h1m0-1h1m0-1h1m0-1h1m-490 549h1m0-1h1m0-1h1m0-1h1m0-1h1m0-1h1m0-1h1m0-1h1m0-1h1m0-1h1m0-1h1m0-1h1m0-1h1m0-1h1m0-1h1m0-1h1m0-1h1m0-1h1m0-1h1m0-1h1m0-1h1m0-1h1m0-1h1m0-1h1m0-1h1m0-1h1m0-1h1m0-1h1m0-1h1m0-1h1m0-1h1m0-1h1m0-1h1m0-1h1m0-1h1m0-1h1m0-1h1m0-1h1m0-1h1m0-1h1m0-1h1m0-1h1m0-1h1m0-1h1m0-1h1m0-1h1m0-1h1m0-1h1m0-1h1m0-1h1m0-1h1m0-1h1m0-1h1m0-1h1m0-1h1m0-1h1m0-1h1m0-1h1m0-1h1m0-1h1m0-1h1m0-1h1m0-1h1m0-1h1m0-1h1m0-1h1m0-1h1m0-1h1m0-1h1m0-1h1m0-1h1m0-1h1m0-1h1m0-1h1m0-1h1m0-1h1m0-1h1m0-1h1m0-1h1m0-1h1m0-1h1m0-1h1m0-1h1m0-1h1m0-1h1m0-1h1m0-1h1m0-1h1m0-1h1m0-1h1m0-1h1m0-1h1m0-1h1m0-1h1m0-1h1m0-1h1m0-1h1m0-1h1m0-1h1m0-1h1m0-1h1m0-1h1m0-1h1m0-1h1m0-1h1m0-1h1m0-1h1m0-1h1m0-1h1m0-1h1m0-1h1m0-1h1m0-1h1m0-1h1m0-1h1m0-1h1m0-1h1m0-1h1m0-1h1m0-1h1m0-1h1m0-1h1m0-1h1m0-1h1m0-1h1m0-1h1m0-1h1m0-1h1m0-1h1m0-1h1m0-1h1m0-1h1m0-1h1m0-1h1m0-1h1m0-1h1m0-1h1m0-1h1m0-1h1m0-1h1m0-1h1m0-1h1m0-1h1m0-1h1m0-1h1m0-1h1m0-1h1m0-1h1m0-1h1m0-1h1m0-1h1m0-1h1m0-1h1m0-1h1m0-1h1m0-1h1m0-1h1m0-1h1m0-1h1m0-1h1m0-1h1m0-1h1m0-1h1m0-1h1m0-1h1m0-1h1m0-1h1m0-1h1m0-1h1m0-1h1m0-1h1m0-1h1m0-1h1m0-1h1m0-1h1m0-1h1m0-1h1m0-1h1m0-1h1m0-1h1m0-1h1m0-1h1m0-1h1m0-1h1m0-1h1m0-1h1m0-1h1m0-1h1m0-1h1m0-1h1m0-1h1m0-1h1m0-1h1m0-1h1m0-1h1m0-1h1m0-1h1m0-1h1m0-1h1m0-1h1m0-1h1m0-1h1m0-1h1m0-1h1m0-1h1m0-1h1m0-1h1m0-1h1m0-1h1m0-1h1m0-1h1m0-1h1m0-1h1m0-1h1m0-1h1m0-1h1m0-1h1m0-1h1m0-1h1m0-1h1m0-1h1m0-1h1m0-1h1m0-1h1m0-1h1m0-1h1m0-1h1m0-1h1m0-1h1m0-1h1m0-1h1m0-1h1m0-1h1m0-1h1m0-1h1m0-1h1m0-1h1m0-1h1m0-1h1m0-1h1m0-1h1m0-1h1m0-1h1m0-1h1m0-1h1m0-1h1m0-1h1m0-1h1m0-1h1m0-1h1m0-1h1m0-1h1m0-1h1m0-1h1m0-1h1m0-1h1m0-1h1m0-1h1m0-1h1m0-1h1m0-1h1m0-1h1m0-1h1m0-1h1m0-1h1m0-1h1m0-1h1m0-1h1m0-1h1m0-1h1m0-1h1m0-1h1m0-1h1m0-1h1m0-1h1m0-1h1m0-1h1m0-1h1m0-1h1m0-1h1m0-1h1m0-1h1m0-1h1m0-1h1m0-1h1m0-1h1m0-1h1m0-1h1m0-1h1m0-1h1m0-1h1m0-1h1m0-1h1m0-1h1m0-1h1m0-1h1m0-1h1m0-1h1m0-1h1m0-1h1m0-1h1m0-1h1m0-1h1m0-1h1m0-1h1m0-1h1m0-1h1m0-1h1m0-1h1m0-1h1m0-1h1m0-1h1m0-1h1m0-1h1m0-1h1m0-1h1m0-1h1m0-1h1m0-1h1m0-1h1m0-1h1m0-1h1m0-1h1m0-1h1m0-1h1m0-1h1m0-1h1m0-1h1m0-1h1m0-1h1m0-1h1m0-1h1m0-1h1m0-1h1m0-1h1m0-1h1m0-1h1m0-1h1m0-1h1m0-1h1m0-1h1m0-1h1m0-1h1m0-1h1m0-1h1m0-1h1m0-1h1m0-1h1m0-1h1m0-1h1m0-1h1m0-1h1m0-1h1m0-1h1m0-1h1m0-1h1m0-1h1m0-1h1m0-1h1m0-1h1m0-1h1m0-1h1m0-1h1m0-1h1m0-1h1m0-1h1m0-1h1m0-1h1m0-1h1m0-1h1m0-1h1m0-1h1m0-1h1m0-1h1m0-1h1m0-1h1m0-1h1m0-1h1m0-1h1m0-1h1m0-1h1m0-1h1m0-1h1m0-1h1m0-1h1m0-1h1m0-1h1m0-1h1m0-1h1m0-1h1m0-1h1m0-1h1m0-1h1m0-1h1m0-1h1m0-1h1m0-1h1m0-1h1m0-1h1m0-1h1m0-1h1m0-1h1m0-1h1m0-1h1m0-1h1m0-1h1m0-1h1m0-1h1m0-1h1m0-1h1m0-1h1m0-1h1m0-1h1m0-1h1m0-1h1m0-1h1m0-1h1m0-1h1m0-1h1m0-1h1m0-1h1m0-1h1m0-1h1m0-1h1m0-1h1m0-1h1m0-1h1m0-1h1m0-1h1m0-1h1m0-1h1m0-1h1m0-1h1m0-1h1m0-1h1m0-1h1m0-1h1m0-1h1m0-1h1m0-1h1m0-1h1m0-1h1m0-1h1m0-1h1m0-1h1m0-1h1m0-1h1m0-1h1m0-1h1m0-1h1m0-1h1m0-1h1m0-1h1m0-1h1m0-1h1m0-1h1m0-1h1m0-1h1m0-1h1m0-1h1m0-1h1m0-1h1m0-1h1m0-1h1m0-1h1m0-1h1m0-1h1m0-1h1m0-1h1m0-1h1m0-1h1m0-1h1m0-1h1m0-1h1m0-1h1m0-1h1m0-1h1m0-1h1m0-1h1m0-1h1m0-1h1m0-1h1m0-1h1m0-1h1m0-1h1m0-1h1m0-1h1m0-1h1m0-1h1m0-1h1m-430 489h1m0-1h1m0-1h1m0-1h1m0-1h1m0-1h1m0-1h1m0-1h1m0-1h1m0-1h1m0-1h1m0-1h1m0-1h1m0-1h1m0-1h1m0-1h1m0-1h1m0-1h1m0-1h1m0-1h1m0-1h1m0-1h1m0-1h1m0-1h1m0-1h1m0-1h1m0-1h1m0-1h1m0-1h1m0-1h1m0-1h1m0-1h1m0-1h1m0-1h1m0-1h1m0-1h1m0-1h1m0-1h1m0-1h1m0-1h1m0-1h1m0-1h1m0-1h1m0-1h1m0-1h1m0-1h1m0-1h1m0-1h1m0-1h1m0-1h1m0-1h1m0-1h1m0-1h1m0-1h1m0-1h1m0-1h1m0-1h1m0-1h1m0-1h1m0-1h1m0-1h1m0-1h1m0-1h1m0-1h1m0-1h1m0-1h1m0-1h1m0-1h1m0-1h1m0-1h1m0-1h1m0-1h1m0-1h1m0-1h1m0-1h1m0-1h1m0-1h1m0-1h1m0-1h1m0-1h1m0-1h1m0-1h1m0-1h1m0-1h1m0-1h1m0-1h1m0-1h1m0-1h1m0-1h1m0-1h1m0-1h1m0-1h1m0-1h1m0-1h1m0-1h1m0-1h1m0-1h1m0-1h1m0-1h1m0-1h1m0-1h1m0-1h1m0-1h1m0-1h1m0-1h1m0-1h1m0-1h1m0-1h1m0-1h1m0-1h1m0-1h1m0-1h1m0-1h1m0-1h1m0-1h1m0-1h1m0-1h1m0-1h1m0-1h1m0-1h1m0-1h1m0-1h1m0-1h1m0-1h1m0-1h1m0-1h1m0-1h1m0-1h1m0-1h1m0-1h1m0-1h1m0-1h1m0-1h1m0-1h1m0-1h1m0-1h1m0-1h1m0-1h1m0-1h1m0-1h1m0-1h1m0-1h1m0-1h1m0-1h1m0-1h1m0-1h1m0-1h1m0-1h1m0-1h1m0-1h1m0-1h1m0-1h1m0-1h1m0-1h1m0-1h1m0-1h1m0-1h1m0-1h1m0-1h1m0-1h1m0-1h1m0-1h1m0-1h1m0-1h1m0-1h1m0-1h1m0-1h1m0-1h1m0-1h1m0-1h1m0-1h1m0-1h1m0-1h1m0-1h1m0-1h1m0-1h1m0-1h1m0-1h1m0-1h1m0-1h1m0-1h1m0-1h1m0-1h1m0-1h1m0-1h1m0-1h1m0-1h1m0-1h1m0-1h1m0-1h1m0-1h1m0-1h1m0-1h1m0-1h1m0-1h1m0-1h1m0-1h1m0-1h1m0-1h1m0-1h1m0-1h1m0-1h1m0-1h1m0-1h1m0-1h1m0-1h1m0-1h1m0-1h1m0-1h1m0-1h1m0-1h1m0-1h1m0-1h1m0-1h1m0-1h1m0-1h1m0-1h1m0-1h1m0-1h1m0-1h1m0-1h1m0-1h1m0-1h1m0-1h1m0-1h1m0-1h1m0-1h1m0-1h1m0-1h1m0-1h1m0-1h1m0-1h1m0-1h1m0-1h1m0-1h1m0-1h1m0-1h1m0-1h1m0-1h1m0-1h1m0-1h1m0-1h1m0-1h1m0-1h1m0-1h1m0-1h1m0-1h1m0-1h1m0-1h1m0-1h1m0-1h1m0-1h1m0-1h1m0-1h1m0-1h1m0-1h1m0-1h1m0-1h1m0-1h1m0-1h1m0-1h1m0-1h1m0-1h1m0-1h1m0-1h1m0-1h1m0-1h1m0-1h1m0-1h1m0-1h1m0-1h1m0-1h1m0-1h1m0-1h1m0-1h1m0-1h1m0-1h1m0-1h1m0-1h1m0-1h1m0-1h1m0-1h1m0-1h1m0-1h1m0-1h1m0-1h1m0-1h1m0-1h1m0-1h1m0-1h1m0-1h1m0-1h1m0-1h1m0-1h1m0-1h1m0-1h1m0-1h1m0-1h1m0-1h1m0-1h1m0-1h1m0-1h1m0-1h1m0-1h1m0-1h1m0-1h1m0-1h1m0-1h1m0-1h1m0-1h1m0-1h1m0-1h1m0-1h1m0-1h1m0-1h1m0-1h1m0-1h1m0-1h1m0-1h1m0-1h1m0-1h1m0-1h1m0-1h1m0-1h1m0-1h1m0-1h1m0-1h1m0-1h1m0-1h1m0-1h1m0-1h1m0-1h1m0-1h1m0-1h1m0-1h1m0-1h1m0-1h1m0-1h1m0-1h1m0-1h1m0-1h1m0-1h1m0-1h1m0-1h1m0-1h1m0-1h1m0-1h1m0-1h1m0-1h1m0-1h1m0-1h1m0-1h1m0-1h1m0-1h1m0-1h1m0-1h1m0-1h1m0-1h1m0-1h1m0-1h1m0-1h1m0-1h1m0-1h1m0-1h1m0-1h1m0-1h1m0-1h1m0-1h1m0-1h1m0-1h1m0-1h1m0-1h1m0-1h1m0-1h1m0-1h1m0-1h1m0-1h1m0-1h1m0-1h1m0-1h1m0-1h1m0-1h1m0-1h1m0-1h1m0-1h1m0-1h1m0-1h1m0-1h1m0-1h1m0-1h1m0-1h1m0-1h1m0-1h1m0-1h1m0-1h1m0-1h1m0-1h1m0-1h1m0-1h1m0-1h1m0-1h1m0-1h1m0-1h1m0-1h1m0-1h1m0-1h1m0-1h1m0-1h1m0-1h1m0-1h1m0-1h1m0-1h1m0-1h1m0-1h1m0-1h1m0-1h1m0-1h1m0-1h1m0-1h1m0-1h1m0-1h1m0-1h1m0-1h1m0-1h1m0-1h1m0-1h1m0-1h1m0-1h1m0-1h1m0-1h1m-370 429h1m0-1h1m0-1h1m0-1h1m0-1h1m0-1h1m0-1h1m0-1h1m0-1h1m0-1h1m0-1h1m0-1h1m0-1h1m0-1h1m0-1h1m0-1h1m0-1h1m0-1h1m0-1h1m0-1h1m0-1h1m0-1h1m0-1h1m0-1h1m0-1h1m0-1h1m0-1h1m0-1h1m0-1h1m0-1h1m0-1h1m0-1h1m0-1h1m0-1h1m0-1h1m0-1h1m0-1h1m0-1h1m0-1h1m0-1h1m0-1h1m0-1h1m0-1h1m0-1h1m0-1h1m0-1h1m0-1h1m0-1h1m0-1h1m0-1h1m0-1h1m0-1h1m0-1h1m0-1h1m0-1h1m0-1h1m0-1h1m0-1h1m0-1h1m0-1h1m0-1h1m0-1h1m0-1h1m0-1h1m0-1h1m0-1h1m0-1h1m0-1h1m0-1h1m0-1h1m0-1h1m0-1h1m0-1h1m0-1h1m0-1h1m0-1h1m0-1h1m0-1h1m0-1h1m0-1h1m0-1h1m0-1h1m0-1h1m0-1h1m0-1h1m0-1h1m0-1h1m0-1h1m0-1h1m0-1h1m0-1h1m0-1h1m0-1h1m0-1h1m0-1h1m0-1h1m0-1h1m0-1h1m0-1h1m0-1h1m0-1h1m0-1h1m0-1h1m0-1h1m0-1h1m0-1h1m0-1h1m0-1h1m0-1h1m0-1h1m0-1h1m0-1h1m0-1h1m0-1h1m0-1h1m0-1h1m0-1h1m0-1h1m0-1h1m0-1h1m0-1h1m0-1h1m0-1h1m0-1h1m0-1h1m0-1h1m0-1h1m0-1h1m0-1h1m0-1h1m0-1h1m0-1h1m0-1h1m0-1h1m0-1h1m0-1h1m0-1h1m0-1h1m0-1h1m0-1h1m0-1h1m0-1h1m0-1h1m0-1h1m0-1h1m0-1h1m0-1h1m0-1h1m0-1h1m0-1h1m0-1h1m0-1h1m0-1h1m0-1h1m0-1h1m0-1h1m0-1h1m0-1h1m0-1h1m0-1h1m0-1h1m0-1h1m0-1h1m0-1h1m0-1h1m0-1h1m0-1h1m0-1h1m0-1h1m0-1h1m0-1h1m0-1h1m0-1h1m0-1h1m0-1h1m0-1h1m0-1h1m0-1h1m0-1h1m0-1h1m0-1h1m0-1h1m0-1h1m0-1h1m0-1h1m0-1h1m0-1h1m0-1h1m0-1h1m0-1h1m0-1h1m0-1h1m0-1h1m0-1h1m0-1h1m0-1h1m0-1h1m0-1h1m0-1h1m0-1h1m0-1h1m0-1h1m0-1h1m0-1h1m0-1h1m0-1h1m0-1h1m0-1h1m0-1h1m0-1h1m0-1h1m0-1h1m0-1h1m0-1h1m0-1h1m0-1h1m0-1h1m0-1h1m0-1h1m0-1h1m0-1h1m0-1h1m0-1h1m0-1h1m0-1h1m0-1h1m0-1h1m0-1h1m0-1h1m0-1h1m0-1h1m0-1h1m0-1h1m0-1h1m0-1h1m0-1h1m0-1h1m0-1h1m0-1h1m0-1h1m0-1h1m0-1h1m0-1h1m0-1h1m0-1h1m0-1h1m0-1h1m0-1h1m0-1h1m0-1h1m0-1h1m0-1h1m0-1h1m0-1h1m0-1h1m0-1h1m0-1h1m0-1h1m0-1h1m0-1h1m0-1h1m0-1h1m0-1h1m0-1h1m0-1h1m0-1h1m0-1h1m0-1h1m0-1h1m0-1h1m0-1h1m0-1h1m0-1h1m0-1h1m0-1h1m0-1h1m0-1h1m0-1h1m0-1h1m0-1h1m0-1h1m0-1h1m0-1h1m0-1h1m0-1h1m0-1h1m0-1h1m0-1h1m0-1h1m0-1h1m0-1h1m0-1h1m0-1h1m0-1h1m0-1h1m0-1h1m0-1h1m0-1h1m0-1h1m0-1h1m0-1h1m0-1h1m0-1h1m0-1h1m0-1h1m0-1h1m0-1h1m0-1h1m0-1h1m0-1h1m0-1h1m0-1h1m0-1h1m0-1h1m0-1h1m0-1h1m0-1h1m0-1h1m0-1h1m0-1h1m0-1h1m0-1h1m0-1h1m0-1h1m0-1h1m0-1h1m0-1h1m0-1h1m0-1h1m0-1h1m0-1h1m0-1h1m0-1h1m0-1h1m0-1h1m0-1h1m0-1h1m0-1h1m0-1h1m0-1h1m0-1h1m0-1h1m0-1h1m0-1h1m0-1h1m0-1h1m0-1h1m0-1h1m0-1h1m0-1h1m0-1h1m0-1h1m0-1h1m0-1h1m0-1h1m0-1h1m0-1h1m0-1h1m0-1h1m0-1h1m0-1h1m0-1h1m0-1h1m0-1h1m0-1h1m0-1h1m0-1h1m0-1h1m0-1h1m0-1h1m-310 369h1m0-1h1m0-1h1m0-1h1m0-1h1m0-1h1m0-1h1m0-1h1m0-1h1m0-1h1m0-1h1m0-1h1m0-1h1m0-1h1m0-1h1m0-1h1m0-1h1m0-1h1m0-1h1m0-1h1m0-1h1m0-1h1m0-1h1m0-1h1m0-1h1m0-1h1m0-1h1m0-1h1m0-1h1m0-1h1m0-1h1m0-1h1m0-1h1m0-1h1m0-1h1m0-1h1m0-1h1m0-1h1m0-1h1m0-1h1m0-1h1m0-1h1m0-1h1m0-1h1m0-1h1m0-1h1m0-1h1m0-1h1m0-1h1m0-1h1m0-1h1m0-1h1m0-1h1m0-1h1m0-1h1m0-1h1m0-1h1m0-1h1m0-1h1m0-1h1m0-1h1m0-1h1m0-1h1m0-1h1m0-1h1m0-1h1m0-1h1m0-1h1m0-1h1m0-1h1m0-1h1m0-1h1m0-1h1m0-1h1m0-1h1m0-1h1m0-1h1m0-1h1m0-1h1m0-1h1m0-1h1m0-1h1m0-1h1m0-1h1m0-1h1m0-1h1m0-1h1m0-1h1m0-1h1m0-1h1m0-1h1m0-1h1m0-1h1m0-1h1m0-1h1m0-1h1m0-1h1m0-1h1m0-1h1m0-1h1m0-1h1m0-1h1m0-1h1m0-1h1m0-1h1m0-1h1m0-1h1m0-1h1m0-1h1m0-1h1m0-1h1m0-1h1m0-1h1m0-1h1m0-1h1m0-1h1m0-1h1m0-1h1m0-1h1m0-1h1m0-1h1m0-1h1m0-1h1m0-1h1m0-1h1m0-1h1m0-1h1m0-1h1m0-1h1m0-1h1m0-1h1m0-1h1m0-1h1m0-1h1m0-1h1m0-1h1m0-1h1m0-1h1m0-1h1m0-1h1m0-1h1m0-1h1m0-1h1m0-1h1m0-1h1m0-1h1m0-1h1m0-1h1m0-1h1m0-1h1m0-1h1m0-1h1m0-1h1m0-1h1m0-1h1m0-1h1m0-1h1m0-1h1m0-1h1m0-1h1m0-1h1m0-1h1m0-1h1m0-1h1m0-1h1m0-1h1m0-1h1m0-1h1m0-1h1m0-1h1m0-1h1m0-1h1m0-1h1m0-1h1m0-1h1m0-1h1m0-1h1m0-1h1m0-1h1m0-1h1m0-1h1m0-1h1m0-1h1m0-1h1m0-1h1m0-1h1m0-1h1m0-1h1m0-1h1m0-1h1m0-1h1m0-1h1m0-1h1m0-1h1m0-1h1m0-1h1m0-1h1m0-1h1m0-1h1m0-1h1m0-1h1m0-1h1m0-1h1m0-1h1m0-1h1m0-1h1m0-1h1m0-1h1m0-1h1m0-1h1m0-1h1m0-1h1m0-1h1m0-1h1m0-1h1m0-1h1m0-1h1m0-1h1m0-1h1m0-1h1m0-1h1m0-1h1m0-1h1m0-1h1m0-1h1m0-1h1m0-1h1m0-1h1m0-1h1m0-1h1m0-1h1m0-1h1m0-1h1m0-1h1m0-1h1m0-1h1m0-1h1m0-1h1m0-1h1m0-1h1m0-1h1m0-1h1m0-1h1m0-1h1m0-1h1m0-1h1m0-1h1m0-1h1m0-1h1m0-1h1m0-1h1m0-1h1m0-1h1m0-1h1m0-1h1m0-1h1m0-1h1m0-1h1m0-1h1m0-1h1m0-1h1m0-1h1m0-1h1m0-1h1m0-1h1m0-1h1m0-1h1m0-1h1m0-1h1m0-1h1m0-1h1m0-1h1m0-1h1m0-1h1m0-1h1m0-1h1m0-1h1m0-1h1m0-1h1m0-1h1m0-1h1m0-1h1m0-1h1m0-1h1m0-1h1m0-1h1m0-1h1m0-1h1m0-1h1m0-1h1m0-1h1m0-1h1m0-1h1m0-1h1m0-1h1m0-1h1m0-1h1m0-1h1m0-1h1m0-1h1m0-1h1m0-1h1m0-1h1m0-1h1m0-1h1m0-1h1m0-1h1m0-1h1m0-1h1m0-1h1m-250 309h1m0-1h1m0-1h1m0-1h1m0-1h1m0-1h1m0-1h1m0-1h1m0-1h1m0-1h1m0-1h1m0-1h1m0-1h1m0-1h1m0-1h1m0-1h1m0-1h1m0-1h1m0-1h1m0-1h1m0-1h1m0-1h1m0-1h1m0-1h1m0-1h1m0-1h1m0-1h1m0-1h1m0-1h1m0-1h1m0-1h1m0-1h1m0-1h1m0-1h1m0-1h1m0-1h1m0-1h1m0-1h1m0-1h1m0-1h1m0-1h1m0-1h1m0-1h1m0-1h1m0-1h1m0-1h1m0-1h1m0-1h1m0-1h1m0-1h1m0-1h1m0-1h1m0-1h1m0-1h1m0-1h1m0-1h1m0-1h1m0-1h1m0-1h1m0-1h1m0-1h1m0-1h1m0-1h1m0-1h1m0-1h1m0-1h1m0-1h1m0-1h1m0-1h1m0-1h1m0-1h1m0-1h1m0-1h1m0-1h1m0-1h1m0-1h1m0-1h1m0-1h1m0-1h1m0-1h1m0-1h1m0-1h1m0-1h1m0-1h1m0-1h1m0-1h1m0-1h1m0-1h1m0-1h1m0-1h1m0-1h1m0-1h1m0-1h1m0-1h1m0-1h1m0-1h1m0-1h1m0-1h1m0-1h1m0-1h1m0-1h1m0-1h1m0-1h1m0-1h1m0-1h1m0-1h1m0-1h1m0-1h1m0-1h1m0-1h1m0-1h1m0-1h1m0-1h1m0-1h1m0-1h1m0-1h1m0-1h1m0-1h1m0-1h1m0-1h1m0-1h1m0-1h1m0-1h1m0-1h1m0-1h1m0-1h1m0-1h1m0-1h1m0-1h1m0-1h1m0-1h1m0-1h1m0-1h1m0-1h1m0-1h1m0-1h1m0-1h1m0-1h1m0-1h1m0-1h1m0-1h1m0-1h1m0-1h1m0-1h1m0-1h1m0-1h1m0-1h1m0-1h1m0-1h1m0-1h1m0-1h1m0-1h1m0-1h1m0-1h1m0-1h1m0-1h1m0-1h1m0-1h1m0-1h1m0-1h1m0-1h1m0-1h1m0-1h1m0-1h1m0-1h1m0-1h1m0-1h1m0-1h1m0-1h1m0-1h1m0-1h1m0-1h1m0-1h1m0-1h1m0-1h1m0-1h1m0-1h1m0-1h1m0-1h1m0-1h1m0-1h1m0-1h1m0-1h1m0-1h1m0-1h1m0-1h1m0-1h1m0-1h1m0-1h1m0-1h1m0-1h1m0-1h1m0-1h1m0-1h1m0-1h1m0-1h1m0-1h1m0-1h1m0-1h1m0-1h1m0-1h1m0-1h1m0-1h1m0-1h1m0-1h1m0-1h1m0-1h1m0-1h1m0-1h1m0-1h1m0-1h1m0-1h1m0-1h1m0-1h1m0-1h1m0-1h1m0-1h1m0-1h1m0-1h1m0-1h1m0-1h1m0-1h1m0-1h1m0-1h1m0-1h1m0-1h1m0-1h1m0-1h1m0-1h1m0-1h1m0-1h1m0-1h1m0-1h1m0-1h1m0-1h1m0-1h1m0-1h1m0-1h1m0-1h1m0-1h1m0-1h1m0-1h1m0-1h1m0-1h1m0-1h1m0-1h1m0-1h1m0-1h1m0-1h1m0-1h1m-190 249h1m0-1h1m0-1h1m0-1h1m0-1h1m0-1h1m0-1h1m0-1h1m0-1h1m0-1h1m0-1h1m0-1h1m0-1h1m0-1h1m0-1h1m0-1h1m0-1h1m0-1h1m0-1h1m0-1h1m0-1h1m0-1h1m0-1h1m0-1h1m0-1h1m0-1h1m0-1h1m0-1h1m0-1h1m0-1h1m0-1h1m0-1h1m0-1h1m0-1h1m0-1h1m0-1h1m0-1h1m0-1h1m0-1h1m0-1h1m0-1h1m0-1h1m0-1h1m0-1h1m0-1h1m0-1h1m0-1h1m0-1h1m0-1h1m0-1h1m0-1h1m0-1h1m0-1h1m0-1h1m0-1h1m0-1h1m0-1h1m0-1h1m0-1h1m0-1h1m0-1h1m0-1h1m0-1h1m0-1h1m0-1h1m0-1h1m0-1h1m0-1h1m0-1h1m0-1h1m0-1h1m0-1h1m0-1h1m0-1h1m0-1h1m0-1h1m0-1h1m0-1h1m0-1h1m0-1h1m0-1h1m0-1h1m0-1h1m0-1h1m0-1h1m0-1h1m0-1h1m0-1h1m0-1h1m0-1h1m0-1h1m0-1h1m0-1h1m0-1h1m0-1h1m0-1h1m0-1h1m0-1h1m0-1h1m0-1h1m0-1h1m0-1h1m0-1h1m0-1h1m0-1h1m0-1h1m0-1h1m0-1h1m0-1h1m0-1h1m0-1h1m0-1h1m0-1h1m0-1h1m0-1h1m0-1h1m0-1h1m0-1h1m0-1h1m0-1h1m0-1h1m0-1h1m0-1h1m0-1h1m0-1h1m0-1h1m0-1h1m0-1h1m0-1h1m0-1h1m0-1h1m0-1h1m0-1h1m0-1h1m0-1h1m0-1h1m0-1h1m0-1h1m0-1h1m0-1h1m0-1h1m0-1h1m0-1h1m0-1h1m0-1h1m0-1h1m0-1h1m0-1h1m0-1h1m0-1h1m0-1h1m0-1h1m0-1h1m0-1h1m0-1h1m0-1h1m0-1h1m0-1h1m0-1h1m0-1h1m0-1h1m0-1h1m0-1h1m0-1h1m0-1h1m0-1h1m0-1h1m0-1h1m0-1h1m0-1h1m0-1h1m0-1h1m0-1h1m0-1h1m0-1h1m0-1h1m0-1h1m0-1h1m0-1h1m0-1h1m0-1h1m0-1h1m0-1h1m0-1h1m0-1h1m0-1h1m0-1h1m0-1h1m0-1h1m0-1h1m-130 189h1m0-1h1m0-1h1m0-1h1m0-1h1m0-1h1m0-1h1m0-1h1m0-1h1m0-1h1m0-1h1m0-1h1m0-1h1m0-1h1m0-1h1m0-1h1m0-1h1m0-1h1m0-1h1m0-1h1m0-1h1m0-1h1m0-1h1m0-1h1m0-1h1m0-1h1m0-1h1m0-1h1m0-1h1m0-1h1m0-1h1m0-1h1m0-1h1m0-1h1m0-1h1m0-1h1m0-1h1m0-1h1m0-1h1m0-1h1m0-1h1m0-1h1m0-1h1m0-1h1m0-1h1m0-1h1m0-1h1m0-1h1m0-1h1m0-1h1m0-1h1m0-1h1m0-1h1m0-1h1m0-1h1m0-1h1m0-1h1m0-1h1m0-1h1m0-1h1m0-1h1m0-1h1m0-1h1m0-1h1m0-1h1m0-1h1m0-1h1m0-1h1m0-1h1m0-1h1m0-1h1m0-1h1m0-1h1m0-1h1m0-1h1m0-1h1m0-1h1m0-1h1m0-1h1m0-1h1m0-1h1m0-1h1m0-1h1m0-1h1m0-1h1m0-1h1m0-1h1m0-1h1m0-1h1m0-1h1m0-1h1m0-1h1m0-1h1m0-1h1m0-1h1m0-1h1m0-1h1m0-1h1m0-1h1m0-1h1m0-1h1m0-1h1m0-1h1m0-1h1m0-1h1m0-1h1m0-1h1m0-1h1m0-1h1m0-1h1m0-1h1m0-1h1m0-1h1m0-1h1m0-1h1m0-1h1m0-1h1m0-1h1m0-1h1m0-1h1m0-1h1m0-1h1m0-1h1m0-1h1m0-1h1m0-1h1m0-1h1m0-1h1m0-1h1m0-1h1m-70 129h1m0-1h1m0-1h1m0-1h1m0-1h1m0-1h1m0-1h1m0-1h1m0-1h1m0-1h1m0-1h1m0-1h1m0-1h1m0-1h1m0-1h1m0-1h1m0-1h1m0-1h1m0-1h1m0-1h1m0-1h1m0-1h1m0-1h1m0-1h1m0-1h1m0-1h1m0-1h1m0-1h1m0-1h1m0-1h1m0-1h1m0-1h1m0-1h1m0-1h1m0-1h1m0-1h1m0-1h1m0-1h1m0-1h1m0-1h1m0-1h1m0-1h1m0-1h1m0-1h1m0-1h1m0-1h1m0-1h1m0-1h1m0-1h1m0-1h1m0-1h1m0-1h1m0-1h1m0-1h1m0-1h1m0-1h1m0-1h1m0-1h1m0-1h1m0-1h1m0-1h1m0-1h1m0-1h1m0-1h1m0-1h1m0-1h1m0-1h1m0-1h1m0-1h1m0-1h1m-10 69h1m0-1h1m0-1h1m0-1h1m0-1h1m0-1h1m0-1h1m0-1h1m0-1h1m0-1h1" stroke="#ffffff" fill="none"/>
<line x1="56" y1="50.5" x2="667" y2="50.5" stroke="#fff"/>
<line x1="56" y1="321.5" x2="667" y2="321.5" stroke="#fff"/>
<line x1="56" y1="449.5" x2="667" y2="449.5" stroke="#fff"/>
<line x1="56" y1="529.5" x2="667" y2="529.5" stroke="#fff"/>
<line x1="56" y1="586.5" x2="667" y2="586.5" stroke="#fff"/>
<line x1="56" y1="630.5" x2="667" y2="630.5" stroke="#fff"/>
<line x1="56" y1="665.5" x2="667" y2="665.5" stroke="#fff"/>
<line x1="56" y1="694.5" x2="667" y2="694.5" stroke="#fff"/>
<line x1="56" y1="719.5" x2="667" y2="719.5" stroke="#fff"/>
<line x1="56" y1="740.5" x2="667" y2="740.5" stroke="#fff"/></g>
<g>
<line x1="61" y1="722.5" x2="626" y2="722.5" stroke="#ff00ff"/>
<path d="M72,737.5h5M74.5,735v5M99,733.5h5M101.5,731v5M102,727.5h5M104.5,725v5M119,721.5h5M121.5,719v5M150,713.5h5M152.5,711v5M185,707.5h5M187.5,705v5M158,706.5h5M160.5,704v5M200,705.5h5M202.5,703v5M291,702.5h5M293.5,700v5" stroke="#fff" stroke-width="1" fill="none"/>
<path d="M74 737.5h1m0-1h8m0-1h8m0-1h7m0-1h4m1.5-6.5v3m-1 0v2m-1 0v2m2.5-7.5h3m0-1h3m0-1h3m0-1h4m0-1h3m0-1h2m-1 0h2m0-1h4m0-1h4m0-1h4m0-1h4m0-1h4m0-1h4m0-1h4m0-1h2m-1 0h4m0-1h6m0-1h5m0-1h6m0-1h5m0-1h6m0-1h4m-28-1h21m0 1h7m-28-1h7m0-1h36m-1 0h11m0-1h22m0-1h23m0-1h16m-1 0h21m-1 0h4m0-1h13m0-1h12m0-1h13m0-1h4m-1 0h10m0-1h5m-1 0h9m0-1h8m-1 0h7m0-1h9m-1 0h8m0-1h15m-23 0h23m-59-1h13m0 1h23m0 1h1m-266-4h28m0 1h134m0 1h68m-286-2h57" stroke="#e87800" fill="none"/>
<path d="M250,734.5h5M252.5,732v5M328,728.5h5M330.5,726v5M328,725.5h5M330.5,723v5M358,721.5h5M360.5,719v5M330,706.5h5M332.5,704v5M317,705.5h5M319.5,703v5M257,698.5h5M259.5,696v5M154,683.5h5M156.5,681v5M127,675.5h5M129.5,673v5M109,668.5h5M111.5,666v5" stroke="#fff" stroke-width="1" fill="none"/>
<path d="M211 737.5h2m0-1h16m0-1h15m0-1h9m-1 0h7m0-1h13m0-1h12m0-1h13m0-1h13m0-1h13m0-1h8m-.5-3.5v4m-.5-3.5h4m0-1h7m0-1h7m0-1h7m0-1h6m-1 0h1m0-1h2m0-1h2m0-1h3m0-1h2m0-1h2m0-1h2m0-1h2m-25-5h1m0 1h5m0 1h6m0 1h5m0 1h5m0 1h3m-44-8h3m0 1h6m0 1h6m0 1h5m-33-4h7m0 1h7m-74-8h3m0 1h9m0 1h9m0 1h9m0 1h9m0 1h9m0 1h8m0 1h5m-87-13h2m0 1h4m0 1h5m0 1h4m0 1h4m0 1h4m0 1h4m-79-7h29m0 1h24m-61-3h2m0 1h5m0 1h2m-26-8h3m0 1h2m0 1h3m0 1h2m0 1h3m0 1h3m0 1h2m-45-14h4m0 1h3m0 1h3m0 1h4m0 1h3m0 1h3m0 1h4m0 1h3m0 1h1m-46-15h2m0 1h2m0 1h3m0 1h3m0 1h3m0 1h3m0 1h3m-51-10h2m0 1h9m0 1h8m0 1h9m0 1h5" stroke="#c0c000" fill="none"/>
<path d="M67,697.5h5M69.5,695v5M106,702.5h5M108.5,700v5M152,703.5h5M154.5,701v5M307,705.5h5M309.5,703v5M316,705.5h5M318.5,703v5M381,705.5h5M383.5,703v5M393,705.5h5M395.5,703v5M575,706.5h5M577.5,704v5M605,713.5h5M607.5,711v5" stroke="#fff" stroke-width="1" fill="none"/>
<path d="M62 694.5h1m0 1h2m0 1h2m0 1h3m-1 0h1m0 1h7m0 1h7m0 1h7m-1 0h2m0 1h10m0 1h7m-1 0h31m0 1h16m-1 0h62m-1 0h22m0 1h72m0 1h1m-1 0h30m-1 0h46m-1 0h13m-1 0h86m-1 0h53m0 1h45m-1 0h3m0 1h4m0 1h5m0 1h4m0 1h5m0 1h5m0 1h4m0 1h1m-1 0h13m0 1h6m-1 0h8m0 1h12m0 1h12m0 1h5" stroke="#ffff00" fill="none"/>
<rect x="371" y="710" width="8" height="8" fill="#c0c000"/>
<text x="375" y="717.5" text-anchor="middle" style="font-size:9px;font-weight:bold" fill="#605000">1</text>
<rect x="170" y="686" width="8" height="8" fill="#c0c000"/>
<text x="174" y="693.5" text-anchor="middle" style="font-size:9px;font-weight:bold" fill="#605000">2</text>
<rect x="75" y="661" width="8" height="8" fill="#c0c000"/>
<text x="79" y="668.5" text-anchor="middle" style="font-size:9px;font-weight:bold" fill="#605000">3</text>
<path d="M337,92.5h5M339.5,90v5M348,95.5h5M350.5,93v5M348,107.5h5M350.5,105v5M354,138.5h5M356.5,136v5M326,165.5h5M328.5,163v5M310,178.5h5M312.5,176v5M420,197.5h5M422.5,195v5M424,197.5h5M426.5,195v5M517,218.5h5M519.5,216v5M544,230.5h5M546.5,228v5M555,235.5h5M557.5,233v5M505,251.5h5M507.5,249v5M475,262.5h5M477.5,260v5M448,270.5h5M450.5,268v5M457,272.5h5M459.5,270v5M550,292.5h5M552.5,290v5M604,302.5h5M606.5,300v5M610,305.5h5M612.5,303v5M615,321.5h5M617.5,319v5M626,337.5h5M628.5,335v5M626,346.5h5M628.5,344v5M610,354.5h5M612.5,352v5M599,364.5h5M601.5,362v5M550,393.5h5M552.5,391v5M517,437.5h5M519.5,435v5M506,449.5h5M508.5,447v5M495,452.5h5M497.5,450v5M457,464.5h5M459.5,462v5M440,481.5h5M442.5,479v5M392,525.5h5M394.5,523v5M390,530.5h5M392.5,528v5M369,543.5h5M371.5,541v5M364,548.5h5M366.5,546v5M343,561.5h5M345.5,559v5M332,570.5h5M334.5,568v5M321,576.5h5M323.5,574v5M321,580.5h5M323.5,578v5M315,582.5h5M317.5,580v5M315,588.5h5M317.5,586v5M315,594.5h5M317.5,592v5M315,605.5h5M317.5,603v5M299,607.5h5M301.5,605v5M223,615.5h5M225.5,613v5M228,618.5h5M230.5,616v5M239,633.5h5M241.5,631v5M239,650.5h5M241.5,648v5M195,659.5h5M197.5,657v5M179,665.5h5M181.5,663v5M146,669.5h5M148.5,667v5M135,675.5h5M137.5,673v5M108,683.5h5M110.5,681v5M92,690.5h5M94.5,688v5M86,691.5h5M88.5,689v5M118,694.5h5M120.5,692v5M152,697.5h5M154.5,695v5M169,702.5h5M171.5,700v5M177,706.5h5M179.5,704v5M185,707.5h5M187.5,705v5M190,713.5h5M192.5,711v5M180,721.5h5M182.5,719v5M163,725.5h5M165.5,723v5M157,728.5h5M159.5,726v5M119,734.5h5M121.5,732v5M98,737.5h5M100.5,735v5" stroke="#fff" stroke-width="1" fill="none"/>
<path d="M247 50.5h2m0 1h2m0 1h2m0 1h2m0 1h2m0 1h3m0 1h2m0 1h2m0 1h2m0 1h2m0 1h3m0 1h2m0 1h2m0 1h2m0 1h2m0 1h2m0 1h3m0 1h2m0 1h2m0 1h2m0 1h2m0 1h3m0 1h2m0 1h2m0 1h2m0 1h2m0 1h3m0 1h2m0 1h2m0 1h2m0 1h2m0 1h2m0 1h3m0 1h2m0 1h2m0 1h2m0 1h2m0 1h3m0 1h2m0 1h2m0 1h2m0 1h2m0 1h2m-1 0h2m0 1h3m0 1h4m0 1h3m-.5-.5v13m0-1v3m1 0v6m1 0v5m1 0v6m1 0v6m1 0v5m1 0v1m-28.5 26.5h1m0-1h1m0-1h1m0-1h1m0-1h1m0-1h1m0-1h1m0-1h2m0-1h1m0-1h1m0-1h1m0-1h1m0-1h1m0-1h1m0-1h1m0-1h1m0-1h1m0-1h1m0-1h1m0-1h1m0-1h1m0-1h1m0-1h1m0-1h1m0-1h1m0-1h1m0-1h1m0-1h1m-45 40h1m0-1h1m0-1h1m0-1h2m0-1h1m0-1h1m0-1h2m0-1h1m0-1h1m0-1h1m0-1h2m0-1h1m0-1h1m0-1h1m-17 13h4m0 1h6m0 1h6m0 1h5m0 1h6m0 1h6m0 1h6m0 1h6m0 1h6m0 1h6m0 1h6m0 1h5m0 1h6m0 1h6m0 1h6m0 1h6m0 1h6m0 1h6m0 1h5m0 1h2m-1 0h5m-1 1h5m0 1h5m0 1h4m0 1h5m0 1h4m0 1h5m0 1h4m0 1h5m0 1h5m0 1h4m0 1h5m0 1h4m0 1h5m0 1h4m0 1h5m0 1h4m0 1h5m0 1h5m0 1h4m0 1h5m0 1h2m-1 0h2m0 1h2m0 1h2m0 1h3m0 1h2m0 1h2m0 1h2m0 1h3m0 1h2m0 1h2m0 1h2m0 1h3m0 1h1m-1 0h2m0 1h2m0 1h2m0 1h2m0 1h2m0 1h2m-51 16h3m0-1h3m0-1h3m0-1h3m0-1h3m0-1h3m0-1h3m0-1h3m0-1h3m0-1h3m0-1h3m0-1h3m0-1h4m0-1h3m0-1h3m0-1h3m0-1h2m-81 27h2m0-1h3m0-1h3m0-1h3m0-1h2m0-1h3m0-1h3m0-1h3m0-1h2m0-1h3m0-1h3m0-1h1m-58 19h2m0-1h3m0-1h4m0-1h3m0-1h4m0-1h3m0-1h4m0-1h3m0-1h2m-28 8h3m0 1h6m0 1h1m-1 0h5m0 1h4m0 1h5m0 1h4m0 1h5m0 1h5m0 1h4m0 1h5m0 1h4m0 1h5m0 1h5m0 1h4m0 1h5m0 1h4m0 1h5m0 1h5m0 1h4m0 1h5m0 1h4m0 1h5m0 1h2m-1 0h4m0 1h5m0 1h5m0 1h5m0 1h5m0 1h5m0 1h5m0 1h6m0 1h5m0 1h5m0 1h5m-1 0h1m0 1h2m0 1h3m0 1h1m-.5-.5v2m1 0v3m1 0v3m1 0v4m1 0v3m1 0v2m0-1v1m1 0v2m1 0v1m1 0v1m1 0v2m1 0v1m1 0v2m1 0v1m1 0v2m1 0v1m1 0v2m1 0v1m0-1v10m-16.5 7.5h2m0-1h2m0-1h2m0-1h2m0-1h2m0-1h2m0-1h2m0-1h2m0-1h1m-28 17h2m0-1h1m0-1h1m0-1h1m0-1h1m0-1h2m0-1h1m0-1h1m0-1h1m0-1h1m-61 39h1m0-1h2m0-1h2m0-1h1m0-1h2m0-1h2m0-1h1m0-1h2m0-1h2m0-1h1m0-1h2m0-1h2m0-1h1m0-1h2m0-1h2m0-1h1m0-1h2m0-1h2m0-1h1m0-1h2m0-1h2m0-1h1m0-1h2m0-1h2m0-1h1m0-1h2m0-1h2m0-1h1m0-1h2m0-1h2m-49.5 28.5v1m-1 0v2m-1 0v1m-1 0v1m-1 0v2m-1 0v1m-1 0v1m-1 0v1m-1 0v2m-1 0v1m-1 0v1m-1 0v2m-1 0v1m-1 0v1m-1 0v2m-1 0v1m-1 0v1m-1 0v2m-1 0v1m-1 0v1m-1 0v2m-1 0v1m-1 0v1m-1 0v2m-1 0v1m-1 0v1m-1 0v2m-1 0v1m-1 0v1m-1 0v2m-1 0v1m-1 0v1m-1 0v2m-1 0v1m0-1v1m-1 0v1m-1 0v1m-1 0v1m-1 0v1m-1 0v2m-1 0v1m-1 0v1m-1 0v1m-1 0v1m-1 0v1m-1 0v1m-11.5 2.5h3m0-1h4m0-1h4m0-1h1m-50 15h2m0-1h3m0-1h3m0-1h3m0-1h4m0-1h3m0-1h3m0-1h3m0-1h3m0-1h4m0-1h3m0-1h3m0-1h2m-38.5 11.5v1m-1 0v1m-1 0v1m-1 0v1m-1 0v1m-1 0v1m-1 0v1m-1 0v1m-1 0v1m-1 0v1m-1 0v1m-1 0v1m-1 0v1m-1 0v1m-1 0v1m-1 0v1m-1 0v1m-1 0v1m-48.5 42.5h2m0-1h1m0-1h1m0-1h1m0-1h1m0-1h1m0-1h1m0-1h1m0-1h1m0-1h2m0-1h1m0-1h1m0-1h1m0-1h1m0-1h1m0-1h1m0-1h1m0-1h1m0-1h2m0-1h1m0-1h1m0-1h1m0-1h1m0-1h1m0-1h1m0-1h1m0-1h1m0-1h1m0-1h2m0-1h1m0-1h1m0-1h1m0-1h1m0-1h1m0-1h1m0-1h1m0-1h1m0-1h2m0-1h1m0-1h1m0-1h1m0-1h1m0-1h1m0-1h1m-48.5 43.5v1m-1 0v4m-1 0v1m-21.5 12.5h1m0-1h2m0-1h2m0-1h1m0-1h2m0-1h2m0-1h1m0-1h2m0-1h1m0-1h2m0-1h2m0-1h1m0-1h2m0-1h1m-27 18h1m0-1h1m0-1h1m0-1h1m0-1h1m0-1h1m-27 18h1m0-1h1m0-1h2m0-1h2m0-1h1m0-1h2m0-1h2m0-1h1m0-1h2m0-1h2m0-1h1m0-1h2m0-1h1m0-1h2m-33 22h1m0-1h1m0-1h1m0-1h1m0-1h2m0-1h1m0-1h1m0-1h1m0-1h1m0-1h2m-23 15h1m0-1h2m0-1h2m0-1h2m0-1h1m0-1h2m0-1h2m-11.5 5.5v5m-6.5 1.5h1m0-1h3m0-1h3m-6.5 1.5v7m0-1v7m0-1v12m-16.5 1.5h4m0-1h9m0-1h4m-93 10h4m0-1h10m0-1h10m0-1h9m0-1h10m0-1h9m0-1h10m0-1h10m0-1h5m-77 8h1m0 1h2m0 1h1m0 1h2m-.5-.5v2m1 0v1m1 0v1m1 0v2m1 0v1m1 0v1m1 0v1m1 0v2m1 0v1m1 0v1m1 0v1m1 0v2m0-1v18m-44.5 8.5h3m0-1h5m0-1h5m0-1h5m0-1h5m0-1h5m0-1h5m0-1h5m0-1h5m0-1h2m-61 15h1m0-1h3m0-1h3m0-1h3m0-1h3m0-1h2m0-1h2m-50 10h3m0-1h8m0-1h8m0-1h8m0-1h7m-45 10h1m0-1h2m0-1h2m0-1h1m0-1h2m0-1h2m0-1h2m-39 14h1m0-1h4m0-1h3m0-1h3m0-1h4m0-1h3m0-1h3m0-1h4m0-1h3m-44 15h1m0-1h2m0-1h2m0-1h3m0-1h2m0-1h2m0-1h3m0-1h2m-23 8h2m0-1h5m-7 1h7m0 1h10m0 1h11m0 1h5m-1 0h6m0 1h10m0 1h10m0 1h9m-1 0h1m0 1h3m0 1h4m0 1h3m0 1h4m0 1h3m-1 0h1m0 1h2m0 1h3m0 1h2m0 1h1m-1 0h5m0 1h4m-.5-.5v1m1 0v2m1 0v1m1 0v1m1 0v1m1 0v1m-10.5 6.5h2m0-1h1m0-1h1m0-1h1m0-1h1m0-1h2m0-1h1m0-1h2m-28 12h2m0-1h4m0-1h4m0-1h4m0-1h4m-24 7h1m0-1h2m0-1h2m0-1h2m-45 9h2m0-1h7m0-1h6m0-1h6m0-1h7m0-1h6m0-1h5m-60 9h1m0-1h7m0-1h8m0-1h6" stroke="#00ff00" fill="none"/>
<path d="M215,92.5h5M217.5,90v5M226,95.5h5M228.5,93v5M230,107.5h5M232.5,105v5M245,138.5h5M247.5,136v5M205,165.5h5M207.5,163v5M184,178.5h5M186.5,176v5M288,197.5h5M290.5,195v5M293,198.5h5M295.5,196v5M385,218.5h5M387.5,216v5M412,230.5h5M414.5,228v5M423,235.5h5M425.5,233v5M374,251.5h5M376.5,249v5M342,262.5h5M344.5,260v5M315,270.5h5M317.5,268v5M326,272.5h5M328.5,270v5M417,292.5h5M419.5,290v5M472,302.5h5M474.5,300v5M477,306.5h5M479.5,304v5M486,321.5h5M488.5,319v5M495,337.5h5M497.5,335v5M495,346.5h5M497.5,344v5M479,354.5h5M481.5,352v5M469,364.5h5M471.5,362v5M424,392.5h5M426.5,390v5M389,437.5h5M391.5,435v5M378,449.5h5M380.5,447v5M367,451.5h5M369.5,449v5M329,464.5h5M331.5,462v5M318,474.5h5M320.5,472v5M312,481.5h5M314.5,479v5M261,525.5h5M263.5,523v5M261,530.5h5M263.5,528v5M254,538.5h5M256.5,536v5M245,543.5h5M247.5,541v5M241,548.5h5M243.5,546v5M231,561.5h5M233.5,559v5M228,570.5h5M230.5,568v5M224,576.5h5M226.5,574v5M214,583.5h5M216.5,581v5M212,586.5h5M214.5,584v5M211,594.5h5M213.5,592v5M211,605.5h5M213.5,603v5M189,607.5h5M191.5,605v5M92,615.5h5M94.5,613v5M117,633.5h5M119.5,631v5M125,650.5h5M127.5,648v5M100,659.5h5M102.5,657v5M120,665.5h5M122.5,663v5M138,668.5h5M140.5,666v5M127,675.5h5M129.5,673v5M143,683.5h5M145.5,681v5M160,690.5h5M162.5,688v5M172,694.5h5M174.5,692v5M231,698.5h5M233.5,696v5M239,702.5h5M241.5,700v5M246,707.5h5M248.5,705v5M233,713.5h5M235.5,711v5M225,721.5h5M227.5,719v5M217,725.5h5M219.5,723v5M205,728.5h5M207.5,726v5M201,735.5h5M203.5,733v5M199,737.5h5M201.5,735v5" stroke="#fff" stroke-width="1" fill="none"/>
<path d="M118 50.5h2m0 1h2m0 1h3m0 1h2m0 1h3m0 1h2m0 1h2m0 1h3m0 1h2m0 1h2m0 1h3m0 1h2m0 1h2m0 1h3m0 1h2m0 1h2m0 1h3m0 1h2m0 1h2m0 1h3m0 1h2m0 1h3m0 1h2m0 1h2m0 1h3m0 1h2m0 1h2m0 1h3m0 1h2m0 1h2m0 1h3m0 1h2m0 1h2m0 1h3m0 1h2m0 1h3m0 1h2m0 1h2m0 1h3m0 1h2m0 1h2m0 1h3m0 1h1m-1 0h3m0 1h3m0 1h3m0 1h3m-.5-.5v2m1 0v3m1 0v3m1 0v3m1 0v2m0-1v2m1 0v2m1 0v2m1 0v2m1 0v2m1 0v2m1 0v2m1 0v2m1 0v2m1 0v2m1 0v2m1 0v2m1 0v2m1 0v2m1 0v2m1 0v2m-40.5 26.5h1m0-1h1m0-1h2m0-1h1m0-1h2m0-1h1m0-1h2m0-1h1m0-1h2m0-1h1m0-1h2m0-1h1m0-1h2m0-1h1m0-1h2m0-1h1m0-1h2m0-1h2m0-1h1m0-1h2m0-1h1m0-1h2m0-1h1m0-1h2m0-1h1m0-1h2m0-1h1m0-1h1m-62 40h1m0-1h2m0-1h1m0-1h2m0-1h1m0-1h2m0-1h2m0-1h1m0-1h2m0-1h1m0-1h2m0-1h2m0-1h1m0-1h2m-22 13h4m0 1h5m0 1h5m0 1h6m0 1h5m0 1h6m0 1h5m0 1h6m0 1h5m0 1h5m0 1h6m0 1h5m0 1h6m0 1h5m0 1h6m0 1h5m0 1h6m0 1h5m0 1h5m0 1h4m-1 0h2m0 1h4m-1 0h2m0 1h5m0 1h4m0 1h5m0 1h5m0 1h4m0 1h5m0 1h5m0 1h4m0 1h5m0 1h4m0 1h5m0 1h5m0 1h4m0 1h5m0 1h5m0 1h4m0 1h5m0 1h5m0 1h4m0 1h3m-1 0h2m0 1h2m0 1h2m0 1h2m0 1h3m0 1h2m0 1h2m0 1h2m0 1h3m0 1h2m0 1h2m0 1h3m0 1h1m-1 0h2m0 1h2m0 1h2m0 1h2m0 1h2m0 1h2m-50 16h2m0-1h3m0-1h3m0-1h3m0-1h3m0-1h3m0-1h3m0-1h3m0-1h3m0-1h3m0-1h3m0-1h4m0-1h3m0-1h3m0-1h3m0-1h3m0-1h2m-82 27h2m0-1h3m0-1h3m0-1h3m0-1h3m0-1h3m0-1h3m0-1h2m0-1h3m0-1h3m0-1h3m0-1h2m-60 19h2m0-1h3m0-1h4m0-1h3m0-1h4m0-1h3m0-1h4m0-1h3m0-1h2m-28 8h4m0 1h6m0 1h2m-1 0h4m0 1h5m0 1h4m0 1h5m0 1h4m0 1h5m0 1h4m0 1h5m0 1h4m0 1h5m0 1h5m0 1h4m0 1h5m0 1h4m0 1h5m0 1h4m0 1h5m0 1h4m0 1h5m0 1h4m0 1h2m-1 0h4m0 1h5m0 1h6m0 1h5m0 1h5m0 1h5m0 1h5m0 1h6m0 1h5m0 1h5m0 1h5m-1 0h1m0 1h1m0 1h2m0 1h1m0 1h1m-.5-.5v1m1 0v2m1 0v2m1 0v1m1 0v2m1 0v2m1 0v2m1 0v1m1 0v2m1 0v1m0-1v2m1 0v2m1 0v1m1 0v2m1 0v2m1 0v2m1 0v1m1 0v2m1 0v2m1 0v1m0-1v10m-16.5 7.5h2m0-1h2m0-1h2m0-1h2m0-1h2m0-1h2m0-1h2m0-1h2m0-1h1m-27 18h1m0-1h1m0-1h1m0-1h1m0-1h1m0-1h1m0-1h1m0-1h1m0-1h1m0-1h1m0-1h1m-56 38h2m0-1h1m0-1h2m0-1h1m0-1h2m0-1h2m0-1h1m0-1h2m0-1h1m0-1h2m0-1h1m0-1h2m0-1h2m0-1h1m0-1h2m0-1h1m0-1h2m0-1h1m0-1h2m0-1h2m0-1h1m0-1h2m0-1h1m0-1h2m0-1h1m0-1h2m0-1h1m0-1h2m0-1h2m-45.5 27.5v2m-1 0v1m-1 0v1m-1 0v1m-1 0v2m-1 0v1m-1 0v1m-1 0v1m-1 0v2m-1 0v1m-1 0v1m-1 0v1m-1 0v2m-1 0v1m-1 0v1m-1 0v1m-1 0v2m-1 0v1m-1 0v1m-1 0v2m-1 0v1m-1 0v1m-1 0v1m-1 0v2m-1 0v1m-1 0v1m-1 0v1m-1 0v2m-1 0v1m-1 0v1m-1 0v1m-1 0v2m-1 0v1m-1 0v1m-1 0v1m-1 0v2m0-1v1m-1 0v1m-1 0v1m-1 0v1m-1 0v1m-1 0v1m-1 0v1m-1 0v2m-1 0v1m-1 0v1m-1 0v1m-1 0v1m-11.5 1.5h5m0-1h6m0-1h1m-50 15h2m0-1h3m0-1h3m0-1h3m0-1h3m0-1h3m0-1h3m0-1h3m0-1h3m0-1h3m0-1h3m0-1h3m0-1h3m0-1h1m-50 23h1m0-1h1m0-1h1m0-1h1m0-1h1m0-1h1m0-1h1m0-1h1m0-1h2m0-1h1m0-1h1m-11.5 9.5v1m-1 0v1m-1 0v1m-1 0v2m-1 0v1m-1 0v1m-1 0v1m-51.5 42.5h2m0-1h1m0-1h1m0-1h1m0-1h1m0-1h1m0-1h2m0-1h1m0-1h1m0-1h1m0-1h1m0-1h2m0-1h1m0-1h1m0-1h1m0-1h1m0-1h1m0-1h2m0-1h1m0-1h1m0-1h1m0-1h1m0-1h2m0-1h1m0-1h1m0-1h1m0-1h1m0-1h1m0-1h2m0-1h1m0-1h1m0-1h1m0-1h1m0-1h2m0-1h1m0-1h1m0-1h1m0-1h1m0-1h1m0-1h2m0-1h1m0-1h1m0-1h1m0-1h1m-51.5 43.5v6m0-1v1m-1 0v1m-1 0v1m-1 0v1m-1 0v1m-1 0v2m-1 0v1m-1 0v1m-9.5 4.5h1m0-1h2m0-1h1m0-1h2m0-1h2m0-1h2m-9.5 4.5v1m-1 0v1m-1 0v1m-1 0v2m-1 0v1m0-1v1m-1 0v1m-1 0v2m-1 0v1m-1 0v1m-1 0v1m-1 0v2m-1 0v1m-1 0v1m-1 0v2m-1 0v1m0-1v1m-1 0v3m-1 0v3m-1 0v3m-1-1v2m-1 0v1m-1 0v2m-1 0v2m-10.5 6.5h1m0-1h1m0-1h1m0-1h2m0-1h1m0-1h2m0-1h1m0-1h2m-11.5 6.5v2m-1 0v2m0-1v4m-1 0v5m0-1v12m-22.5 1.5h6m0-1h11m0-1h6m-120 10h6m0-1h13m0-1h12m0-1h12m0-1h12m0-1h12m0-1h12m0-1h12m0-1h7m-98 8h1m0 1h2m0 1h1m0 1h1m0 1h2m0 1h1m0 1h2m0 1h1m0 1h1m0 1h2m0 1h1m0 1h2m0 1h1m0 1h2m0 1h1m0 1h1m0 1h2m0 1h1m0 1h1m-.5-.5v1m1 0v2m1 0v3m1 0v2m1 0v2m1 0v2m1 0v2m1 0v2m1 0v2m-25.5 8.5h2m0-1h2m0-1h3m0-1h3m0-1h3m0-1h3m0-1h2m0-1h3m0-1h3m0-1h2m-26 9h2m0 1h4m0 1h3m0 1h4m0 1h3m0 1h4m0 1h1m-1 0h5m0 1h6m0 1h6m0 1h2m-12 7h1m0-1h2m0-1h1m0-1h2m0-1h1m0-1h2m0-1h1m0-1h2m-12 7h3m0 1h2m0 1h2m0 1h1m0 1h2m0 1h2m0 1h2m0 1h2m0 1h1m-1 0h3m0 1h2m0 1h2m0 1h3m0 1h2m0 1h3m0 1h2m0 1h1m-1 0h3m0 1h3m0 1h2m0 1h3m0 1h2m-1 0h8m0 1h16m0 1h16m0 1h16m0 1h4m-1 0h2m0 1h2m0 1h2m0 1h2m0 1h1m-1 0h2m0 1h1m0 1h1m0 1h2m0 1h1m0 1h1m-14 6h1m0-1h2m0-1h3m0-1h2m0-1h2m0-1h3m0-1h1m-13.5 5.5v1m-1 0v1m-1 0v1m-1 0v1m-1 0v1m-1 0v1m-1 0v1m-1 0v1m-1 0v1m-8.5 3.5h1m0-1h2m0-1h2m0-1h3m0-1h1m-21 7h3m0-1h3m0-1h4m0-1h3m-12.5 2.5v1m-1 0v2m-1 0v2m-1 0v2m-1 0v1m-2.5 1.5h1m0-1h1m0-1h1" stroke="#ff0080" fill="none"/>
<path d="M469,92.5h5M471.5,90v5M465,96.5h5M467.5,94v5M455,107.5h5M457.5,105v5M421,138.5h5M423.5,136v5M392,165.5h5M394.5,163v5M382,178.5h5M384.5,176v5M365,197.5h5M367.5,195v5M343,218.5h5M345.5,216v5M330,230.5h5M332.5,228v5M326,235.5h5M328.5,233v5M313,251.5h5M315.5,249v5M308,262.5h5M310.5,260v5M296,270.5h5M298.5,268v5M293,272.5h5M295.5,270v5M277,292.5h5M279.5,290v5M267,303.5h5M269.5,301v5M252,321.5h5M254.5,319v5M249,337.5h5M251.5,335v5M246,346.5h5M248.5,344v5M230,354.5h5M232.5,352v5M224,364.5h5M226.5,362v5M217,393.5h5M219.5,391v5M202,437.5h5M204.5,435v5M233,449.5h5M235.5,447v5M236,452.5h5M238.5,450v5M255,464.5h5M257.5,462v5M268,473.5h5M270.5,471v5M312,478.5h5M314.5,476v5M341,481.5h5M343.5,479v5M352,508.5h5M354.5,506v5M358,524.5h5M360.5,522v5M365,529.5h5M367.5,527v5M379,538.5h5M381.5,536v5M401,543.5h5M403.5,541v5M375,548.5h5M377.5,546v5M329,561.5h5M331.5,559v5M340,569.5h5M342.5,567v5M298,571.5h5M300.5,569v5M348,577.5h5M350.5,575v5M363,581.5h5M365.5,579v5M387,583.5h5M389.5,581v5M406,583.5h5M408.5,581v5M422,585.5h5M424.5,583v5M427,586.5h5M429.5,584v5M429,588.5h5M431.5,586v5M429,595.5h5M431.5,593v5M441,606.5h5M443.5,604v5M431,615.5h5M433.5,613v5M425,619.5h5M427.5,617v5M411,632.5h5M413.5,630v5M392,650.5h5M394.5,648v5M383,659.5h5M385.5,657v5M376,665.5h5M378.5,663v5M369,667.5h5M371.5,665v5M360,669.5h5M362.5,667v5M353,675.5h5M355.5,673v5M342,683.5h5M344.5,681v5M369,690.5h5M371.5,688v5M380,691.5h5M382.5,689v5M402,692.5h5M404.5,690v5M424,694.5h5M426.5,692v5M434,697.5h5M436.5,695v5M443,702.5h5M445.5,700v5M470,704.5h5M472.5,702v5M479,705.5h5M481.5,703v5M494,706.5h5M496.5,704v5M498,712.5h5M500.5,710v5M501,720.5h5M503.5,718v5M503,736.5h5M505.5,734v5" stroke="#fff" stroke-width="1" fill="none"/>
<path d="M511.5 50v1m-1 0v1m-1 0v1m-1 0v1m-1 0v1m-1 0v1m-1 0v1m-1 0v1m-1 0v1m-1 0v1m-1 0v2m-1 0v1m-1 0v1m-1 0v1m-1 0v1m-1 0v1m-1 0v1m-1 0v1m-1 0v1m-1 0v1m-1 0v1m-1 0v1m-1 0v1m-1 0v1m-1 0v1m-1 0v1m-1 0v1m-1 0v1m-1 0v1m-1 0v1m-1 0v1m-1 0v1m-1 0v1m-1 0v1m-1 0v1m-1 0v2m-1 0v1m-1 0v1m-1 0v1m-1 0v1m-1 0v1m-4.5 3.5h1m0-1h1m0-1h1m0-1h1m0-1h1m-4.5 3.5v1m-1 0v1m-1 0v1m-1 0v1m-1 0v1m-1 0v1m-1 0v1m-1 0v1m-1 0v1m-1 0v1m-1 0v2m-34.5 30.5h1m0-1h1m0-1h1m0-1h1m0-1h1m0-1h1m0-1h2m0-1h1m0-1h1m0-1h1m0-1h1m0-1h1m0-1h1m0-1h1m0-1h1m0-1h1m0-1h1m0-1h1m0-1h1m0-1h2m0-1h1m0-1h1m0-1h1m0-1h1m0-1h1m0-1h1m0-1h1m0-1h1m0-1h1m0-1h1m0-1h1m0-1h2m-64 58h1m0-1h1m0-1h1m0-1h1m0-1h2m0-1h1m0-1h1m0-1h1m0-1h1m0-1h1m0-1h1m0-1h1m0-1h1m0-1h1m0-1h1m0-1h1m0-1h1m0-1h1m0-1h1m0-1h2m0-1h1m0-1h1m0-1h1m0-1h1m0-1h1m0-1h1m0-1h1m0-1h1m-29.5 26.5v1m-1 0v2m-1 0v1m-1 0v1m-1 0v1m-1 0v1m-1 0v2m-1 0v1m-1 0v1m-1 0v1m-1 0v2m0-1v1m-1 0v1m-1 0v1m-1 0v1m-1 0v1m-1 0v2m-1 0v1m-1 0v1m-1 0v1m-1 0v1m-1 0v1m-1 0v2m-1 0v1m-1 0v1m-1 0v1m-1 0v1m-1 0v1m-1 0v1m-22.5 20.5h1m0-1h1m0-1h1m0-1h1m0-1h1m0-1h1m0-1h1m0-1h1m0-1h2m0-1h1m0-1h1m0-1h1m0-1h1m0-1h1m0-1h1m0-1h1m0-1h1m0-1h1m0-1h1m0-1h1m0-1h1m0-1h1m-36 32h2m0-1h1m0-1h1m0-1h1m0-1h1m0-1h1m0-1h1m0-1h1m0-1h2m0-1h1m0-1h1m0-1h1m-14.5 11.5v2m-1 0v1m-1 0v1m-1 0v2m-1-1v1m-1 0v2m-1 0v1m-1 0v1m-1 0v2m-1 0v1m-1 0v1m-1 0v1m-1 0v2m-1 0v1m-1 0v1m-1 0v2m-1 0v1m0-1v1m-1 0v2m-1 0v2m-1 0v2m-1 0v3m-1 0v2m-12.5 7.5h1m0-1h1m0-1h2m0-1h1m0-1h2m0-1h1m0-1h2m0-1h1m0-1h2m-16 10h1m0-1h1m0-1h2m-3.5 1.5v1m-1 0v1m-1 0v2m-1 0v1m-1 0v1m-1 0v1m-1 0v1m-1 0v2m-1 0v1m-1 0v1m-1 0v1m-1 0v1m-1 0v2m-1 0v1m-1 0v1m-1 0v1m-1 0v2m0-1v1m-1 0v1m-1 0v1m-1 0v1m-1 0v1m-1 0v2m-1 0v1m-1 0v1m-1 0v1m-1 0v1m-1 0v1m0-1v2m-1 0v1m-1 0v1m-1 0v1m-1 0v1m-1 0v1m-1 0v1m-1 0v2m-1 0v1m-1 0v1m-1 0v1m-1 0v1m-1 0v1m-1 0v2m-1 0v1m-1 0v1m0-1v4m-1 0v5m-1 0v5m-1 0v3m0-1v2m-1 0v4m-1 0v3m-1 0v1m-16.5 7.5h2m0-1h2m0-1h2m0-1h2m0-1h2m0-1h2m0-1h2m0-1h2m0-1h1m-16.5 7.5v2m-1 0v1m-1 0v2m-1 0v1m-1 0v2m-1 0v1m-1 0v2m0-1v1m-1 0v5m-1 0v4m-1 0v4m-1 0v4m-1 0v4m-1 0v4m-1 0v4m0-1v1m-1 0v3m-1 0v3m-1 0v3m-1 0v3m-1 0v3m-1 0v3m-1 0v3m-1 0v3m-1 0v3m-1 0v3m-1 0v3m-1 0v3m-1 0v3m-1 0v3m-1 0v2m-.5-.5h2m0 1h3m0 1h2m0 1h3m0 1h2m0 1h2m0 1h3m0 1h2m0 1h3m0 1h2m0 1h2m0 1h3m0 1h3m-1 1h2m0 1h1m0 1h1m-1 0h2m0 1h1m0 1h2m0 1h1m0 1h2m0 1h2m0 1h1m0 1h2m0 1h1m0 1h2m0 1h2m0 1h1m0 1h1m-1 0h2m0 1h1m0 1h1m0 1h2m0 1h1m0 1h1m0 1h2m0 1h1m0 1h1m0 1h2m-1 0h1m0 1h10m0 1h9m0 1h10m0 1h9m0 1h6m-1 0h5m0 1h9m0 1h10m0 1h6m-.5-.5v1m1 0v2m1 0v3m1 0v3m1 0v2m1 0v3m1 0v2m1 0v3m1 0v3m1 0v2m1 0v3m1 0v1m0-1v2m1 0v3m1 0v2m1 0v3m1 0v2m1 0v3m1 0v2m-.5-.5h2m0 1h1m0 1h1m0 1h1m0 1h2m0 1h1m-1 0h1m0 1h2m0 1h1m0 1h2m0 1h2m0 1h1m0 1h2m0 1h2m0 1h1m0 1h1m-1 0h4m0 1h5m0 1h4m0 1h4m0 1h4m0 1h2m-27 5h1m0-1h5m0-1h6m0-1h5m0-1h6m0-1h4m-73 18h2m0-1h4m0-1h3m0-1h3m0-1h4m0-1h3m0-1h4m0-1h3m0-1h3m0-1h4m0-1h3m0-1h4m0-1h3m0-1h4m-47 13h2m0 1h1m0 1h1m0 1h2m0 1h1m0 1h1m0 1h2m0 1h1m0 1h1m-43 2h10m0-1h22m0-1h11m-43 2h6m0 1h9m0 1h8m0 1h9m0 1h9m0 1h9m0 1h1m-1 0h3m0 1h3m0 1h3m0 1h3m0 1h4m-1 0h2m0 1h18m0 1h5m-1 0h20m-1 0h3m0 1h13m0 1h1m-1 0h5m0 1h1m-.5-.5v1m1 0v1m1 0v1m0-1v8m-.5-.5h1m0 1h1m0 1h2m0 1h1m0 1h1m0 1h1m0 1h1m0 1h1m0 1h1m0 1h1m0 1h1m0 1h1m-11 9h1m0-1h1m0-1h1m0-1h1m0-1h1m0-1h1m0-1h1m0-1h2m0-1h1m0-1h1m-17 13h1m0-1h2m0-1h1m0-1h2m0-1h1m-21 17h1m0-1h1m0-1h1m0-1h1m0-1h2m0-1h1m0-1h1m0-1h1m0-1h1m0-1h1m0-1h1m0-1h1m0-1h1m0-1h1m-34 31h1m0-1h1m0-1h1m0-1h1m0-1h2m0-1h1m0-1h1m0-1h1m0-1h1m0-1h1m0-1h1m0-1h1m0-1h1m0-1h1m0-1h1m0-1h1m0-1h1m0-1h1m0-1h1m-29 27h1m0-1h1m0-1h1m0-1h1m0-1h1m0-1h1m0-1h1m0-1h1m0-1h1m0-1h1m-17 15h1m0-1h1m0-1h1m0-1h1m0-1h1m0-1h1m0-1h2m-15 8h1m0-1h3m0-1h4m-17 4h3m0-1h3m0-1h4m-17 8h1m0-1h1m0-1h1m0-1h2m0-1h1m0-1h1m0-1h1m-19 14h1m0-1h2m0-1h1m0-1h1m0-1h2m0-1h1m0-1h1m0-1h2m0-1h1m-12 8h3m0 1h4m0 1h3m0 1h4m0 1h3m0 1h4m0 1h3m0 1h4m-1 0h6m0 1h6m-1 0h13m0 1h10m-1 0h7m0 1h16m-1 1h3m0 1h3m0 1h2m0 1h3m-1 0h1m0 1h2m0 1h1m0 1h2m0 1h2m0 1h2m-1 0h4m0 1h16m0 1h8m-1 0h8m0 1h2m-1 0h8m0 1h8m-.5-.5v2m1 0v1m1 0v1m1 0v2m1 0v1m0-1v1m1 0v3m1 0v3m1 0v2m0-1v4m1 0v7m1 0v6" stroke="#00ffff" fill="none"/>
<path d="M601,92.5h5M603.5,90v5M599,96.5h5M601.5,94v5M593,107.5h5M595.5,105v5M585,138.5h5M587.5,136v5M578,165.5h5M580.5,163v5M563,178.5h5M565.5,176v5M540,197.5h5M542.5,195v5M523,218.5h5M525.5,216v5M516,230.5h5M518.5,228v5M514,235.5h5M516.5,233v5M505,251.5h5M507.5,249v5M481,262.5h5M483.5,260v5M480,271.5h5M482.5,269v5M463,292.5h5M465.5,290v5M449,303.5h5M451.5,301v5M445,321.5h5M447.5,319v5M445,337.5h5M447.5,335v5M444,346.5h5M446.5,344v5M428,354.5h5M430.5,352v5M422,364.5h5M424.5,362v5M426,393.5h5M428.5,391v5M424,437.5h5M426.5,435v5M417,451.5h5M419.5,449v5M423,464.5h5M425.5,462v5M424,474.5h5M426.5,472v5M426,481.5h5M428.5,479v5M431,525.5h5M433.5,523v5M431,538.5h5M433.5,536v5M431,543.5h5M433.5,541v5M428,548.5h5M430.5,546v5M437,561.5h5M439.5,559v5M443,570.5h5M445.5,568v5M436,580.5h5M438.5,578v5M442,582.5h5M444.5,580v5M448,588.5h5M450.5,586v5M448,596.5h5M450.5,594v5M455,606.5h5M457.5,604v5M455,616.5h5M457.5,614v5M455,619.5h5M457.5,617v5M465,632.5h5M467.5,630v5M478,650.5h5M480.5,648v5M484,659.5h5M486.5,657v5M491,667.5h5M493.5,665v5M500,675.5h5M502.5,673v5M509,683.5h5M511.5,681v5M513,690.5h5M515.5,688v5M510,699.5h5M512.5,697v5M514,702.5h5M516.5,700v5M495,707.5h5M497.5,705v5M506,723.5h5M508.5,721v5" stroke="#fff" stroke-width="1" fill="none"/>
<path d="M626.5 50v2m-1 0v2m-1 0v1m-1 0v2m-1 0v2m-1 0v2m-1 0v2m-1 0v1m-1 0v2m-1 0v2m-1 0v2m-1 0v1m-1 0v2m-1 0v2m-1 0v2m-1 0v1m-1 0v2m-1 0v2m-1 0v2m-1 0v2m-1 0v1m-1 0v2m-1 0v2m-1 0v2m0-1v1m-1 0v2m-1 0v2m0-1v1m-1 0v2m-1 0v2m-1 0v1m-1 0v2m-1 0v2m-1 0v2m0-1v1m-1 0v4m-1 0v4m-1 0v4m-1 0v3m-1 0v4m-1 0v4m-1 0v4m-1 0v4m0-1v1m-1 0v4m-1 0v4m-1 0v4m-1 0v4m-1 0v4m-1 0v4m-1 0v3m-15.5 12.5h1m0-1h1m0-1h1m0-1h1m0-1h1m0-1h2m0-1h1m0-1h1m0-1h1m0-1h1m0-1h2m0-1h1m0-1h1m0-1h1m-39 32h1m0-1h1m0-1h1m0-1h2m0-1h1m0-1h1m0-1h1m0-1h1m0-1h2m0-1h1m0-1h1m0-1h1m0-1h1m0-1h2m0-1h1m0-1h1m0-1h1m0-1h1m0-1h1m0-1h2m-23.5 18.5v1m-1 0v1m-1 0v1m-1 0v2m-1 0v1m-1 0v1m-1 0v2m-1 0v1m-1 0v1m-1 0v1m-1 0v2m-1 0v1m-1 0v1m-1 0v1m-1 0v2m-1 0v1m-1 0v1m-1 0v1m0-1v2m-1 0v1m-1 0v2m-1 0v1m-1 0v2m-1 0v1m-1 0v2m-1 0v2m0-1v1m-1 0v3m-1 0v2m0-1v1m-1 0v2m-1 0v2m-1 0v2m-1 0v2m-1 0v1m-1 0v2m-1 0v2m-1 0v2m-1 0v1m-24.5 10.5h2m0-1h2m0-1h2m0-1h2m0-1h2m0-1h3m0-1h2m0-1h2m0-1h2m0-1h2m0-1h3m0-1h1m-24.5 10.5v6m-1 0v4m0-1v1m-1 0v1m-1 0v1m-1 0v2m-1 0v1m-1 0v1m-1 0v1m-1 0v2m-1 0v1m-1 0v1m-1 0v1m-1 0v2m-1 0v1m-1 0v1m-1 0v2m-1 0v1m-1 0v1m-1 0v1m-14.5 10.5h1m0-1h2m0-1h1m0-1h1m0-1h1m0-1h2m0-1h1m0-1h1m0-1h1m0-1h2m0-1h1m0-1h1m-14.5 10.5v3m-1 0v4m-1 0v5m-1 0v4m-1 0v3m0-1v17m0-1v4m-1 0v6m-16.5 7.5h1m0-1h3m0-1h2m0-1h2m0-1h2m0-1h2m0-1h2m0-1h2m0-1h1m-16.5 7.5v1m-1 0v1m-1 0v2m-1 0v2m-1 0v1m-1 0v2m-1 0v2m0-1v4m1 0v5m0-1v2m1 0v6m1 0v5m0-1v6m1 0v4m0-1v18m-1 0v19m0-1v7m-1 0v2m0-1v2m-1 0v2m-1 0v2m-1 0v2m-1 0v2m-1 0v2m-1 0v2m-1 0v1m0-1v1m1 0v3m1 0v2m1 0v2m1 0v3m1 0v2m1 0v1m0-1v6m1 0v5m0-1v2m1 0v4m1 0v2m0-1v5m1 0v8m1 0v8m1 0v9m1 0v8m1 0v7m0-1v14m0-1v6m0-1v1m-1 0v2m-1 0v2m-1 0v1m0-1v1m1 0v1m1 0v2m1 0v1m1 0v2m1 0v1m1 0v2m1 0v1m1 0v2m1 0v1m0-1v1m1 0v2m1 0v2m1 0v1m1 0v2m1 0v2m1-1v1m-1 0v1m-1 0v2m-1 0v1m-1 0v2m-1 0v1m-1 0v2m-1 0v1m-.5-.5h2m0 1h3m0 1h2m-.5-.5v1m1 0v2m1 0v1m1 0v1m1 0v1m1 0v1m1-1v9m0-1v2m1 0v1m1 0v2m1 0v1m1 0v1m1 0v2m1 0v1m1 0v1m0-1v11m0-1v4m0-1v2m1 0v1m1 0v1m1 0v1m1 0v2m1 0v1m1 0v1m1 0v1m1 0v2m1 0v1m1 0v1m0-1v1m1 0v2m1 0v1m1 0v1m1 0v2m1 0v1m1 0v2m1 0v1m1 0v2m1 0v1m1 0v1m1 0v2m1 0v1m1 0v1m0-1v2m1 0v1m1 0v2m1 0v1m1 0v2m1 0v1m1 0v1m0-1v1m1 0v1m1 0v1m1 0v1m1 0v2m1 0v1m1 0v1m1 0v1m-.5-.5h1m0 1h1m0 1h2m0 1h1m0 1h1m0 1h1m0 1h1m0 1h1m0 1h1m-1 0h1m0 1h1m0 1h1m0 1h1m0 1h2m0 1h1m0 1h1m0 1h1m0 1h1m-.5-.5v2m1 0v2m1 0v2m1 0v1m1 0v1m-1-1v4m-1 0v4m-1 0v2m1-1v2m1 0v1m1 0v1m-18.5 4.5h1m0-1h5m0-1h4m0-1h4m0-1h5m0-1h1m-19.5 4.5v2m1 0v1m1 0v1m1 0v2m1 0v1m1 0v2m1 0v1m1 0v1m1 0v2m1 0v1m1 0v1m1 0v2m-.5-.5h2m0 1h1m0 1h2m0 1h2m0 1h1m0 1h2m0 1h2m0 1h1m0 1h2m0 1h1m0 1h2m0 1h2m0 1h1m0 1h2m0 1h1" stroke="#ff0000" fill="none"/>
<path d="M513.5 50v2m-1 0v4m-1 0v3m-1 0v4m-1 0v3m-1 0v4m-1 0v4m-1 0v3m0-1v1m-1 0v4m-1 0v4m-1 0v5m-1 0v4m-1 0v4m-1 0v4m-1 0v4m-1 0v3m0-1v2m-1 0v4m-1 0v5m-1 0v4m-1 0v5m-1 0v4m-1 0v2m0-1v5m-1 0v6m-1 0v5m-1 0v6m-1 0v1m0-1v6m-1 0v6m-1 0v6m-1 0v2m0-1v6m-1 0v9m-1 0v6m0-1v9m-1 0v22m-1 0v5m0-1v20m-1 0v20m0-1v9m-1 0v24m0-1v6m1 0v9m1 0v8m0-1v5m1 0v13m0-1v3m1 0v6m1 0v7m0-1v1m1 0v7m1 0v6m1 0v7m1 0v2m0-1v9m1 0v9m1 0v10m1 0v10m1-1v8m1 0v7m1 0v7m1 0v2m0-1v5m1 0v6m1 0v6m1 0v3m0-1v8m1 0v12m1 0v10m0-1v2m1 0v7m1 0v7m1 0v7m1 0v5m0-1v7m1 0v21m1 0v5m0-1v32m1-1v56m0-1v94" stroke="#ffc0ff" fill="none"/>
<path d="M512.5 50v2m-1 0v4m-1 0v3m-1 0v4m-1 0v3m-1 0v4m-1 0v4m-1 0v3m0-1v1m-1 0v4m-1 0v4m-1 0v5m-1 0v4m-1 0v4m-1 0v4m-1 0v4m-1 0v3m0-1v2m-1 0v4m-1 0v5m-1 0v4m-1 0v5m-1 0v4m-1 0v2m0-1v5m-1 0v6m-1 0v5m-1 0v6m-1 0v1m0-1v6m-1 0v6m-1 0v6m-1 0v2m0-1v6m-1 0v9m-1 0v6m0-1v9m-1 0v22m-1 0v5m0-1v20m-1 0v20m0-1v9m-1 0v24m0-1v6m1 0v9m1 0v8m0-1v5m1 0v13m0-1v3m1 0v6m1 0v7m0-1v1m1 0v7m1 0v6m1 0v7m1 0v2m0-1v9m1 0v9m1 0v10m1 0v10m1-1v8m1 0v7m1 0v7m1 0v2m0-1v5m1 0v6m1 0v6m1 0v3m0-1v8m1 0v12m1 0v10m0-1v2m1 0v7m1 0v7m1 0v7m1 0v5m0-1v7m1 0v21m1 0v5m0-1v32m1-1v56m0-1v94" stroke="#ff00ff" fill="none"/>
<path d="M506 723.5h2m0 1h1m0 1h2m0 1h2m0 1h1m0 1h2m0 1h2m0 1h1m0 1h2m0 1h2m0 1h1m0 1h2m0 1h2m0 1h1m0 1h2m0 1h1" stroke="#ffc0ff" fill="none"/>
<path d="M506 722.5h2m0 1h1m0 1h2m0 1h2m0 1h1m0 1h2m0 1h2m0 1h1m0 1h2m0 1h2m0 1h1m0 1h2m0 1h2m0 1h1m0 1h2m0 1h1" stroke="#ff00ff" fill="none"/>
<path d="M506.5 722v2m-1 0v2m-1 0v2m-1 0v2m-1 0v2m-1 0v2m-1 0v2m-1 0v2" stroke="#ff00ff" fill="none"/>
<line x1="761.5" y1="40" x2="761.5" y2="768" stroke="#00ff00"/>
<line x1="826.5" y1="40" x2="826.5" y2="768" stroke="#ff0080"/>
<path d="M737 108.5h1m0-1h1m0-1h2m0-1h1m0-1h2m0-1h1m0-1h2m0-1h1m0-1h2m0-1h1m0-1h2m0-1h1m0-1h2m0-1h1m0-1h2m0-1h1m0-1h2m-25 20h1m0-1h2m0-1h1m0-1h2m0-1h1m0-1h2m0-1h2m0-1h1m0-1h2m0-1h1m0-1h2m0-1h1m0-1h2m0-1h1m0-1h2m0-1h2m-24 27h1m0-1h1m0-1h2m0-1h1m0-1h2m0-1h1m0-1h1m0-1h2m0-1h1m0-1h2m0-1h1m0-1h1m0-1h2m0-1h1m0-1h2m0-1h1m0-1h2m-21 50h1m0-1h1m0-1h1m0-1h1m0-1h1m0-1h1m0-1h1m0-1h1m0-1h1m0-1h1m0-1h1m0-1h1m0-1h1m0-1h1m0-1h1m0-1h1m0-1h1m0-1h1m0-1h1m0-1h1m0-1h1m-25 43h2m0-1h1m0-1h2m0-1h1m0-1h2m0-1h1m0-1h2m0-1h1m0-1h2m0-1h2m0-1h1m0-1h2m0-1h1m0-1h2m0-1h1m0-1h2m-26 26h2m0-1h2m0-1h1m0-1h2m0-1h2m0-1h2m0-1h2m0-1h2m0-1h1m0-1h2m0-1h2m0-1h2m0-1h2m0-1h2m-30 24h1m0-1h5m0-1h6m0-1h5m0-1h5m0-1h5m0-1h3m-30 7h1m0-1h6m0-1h5m0-1h5m0-1h6m0-1h5m0-1h2m-29 28h2m0-1h4m0-1h4m0-1h4m0-1h4m0-1h4m0-1h4m0-1h3m-29 19h2m0-1h4m0-1h3m0-1h4m0-1h4m0-1h4m0-1h4m0-1h4m-29 12h2m0-1h3m0-1h4m0-1h4m0-1h3m0-1h4m0-1h3m0-1h4m0-1h2m-26 25h1m0-1h3m0-1h3m0-1h3m0-1h3m0-1h3m0-1h3m0-1h2m0-1h3m0-1h2m-28 23h2m0-1h2m0-1h2m0-1h3m0-1h2m0-1h2m0-1h3m0-1h2m0-1h2m0-1h3m0-1h2m0-1h2m0-1h1m-27 21h1m0-1h2m0-1h2m0-1h2m0-1h2m0-1h2m0-1h2m0-1h2m0-1h2m0-1h2m0-1h2m0-1h2m0-1h2m0-1h2m-27 14h2m0-1h2m0-1h2m0-1h2m0-1h2m0-1h2m0-1h2m0-1h3m0-1h2m0-1h2m0-1h2m0-1h2m0-1h2m-29 29h1m0-1h4m0-1h3m0-1h4m0-1h3m0-1h4m0-1h3m0-1h4m0-1h3m-29 17h3m0-1h3m0-1h4m0-1h4m0-1h3m0-1h4m0-1h4m0-1h3m0-1h1m-29 10h3m0-1h4m0-1h3m0-1h4m0-1h4m0-1h4m0-1h3m0-1h4m-28 26h2m0-1h3m0-1h3m0-1h2m0-1h3m0-1h3m0-1h3m0-1h3m0-1h3m0-1h3m-27 28h1m0-1h3m0-1h2m0-1h2m0-1h2m0-1h2m0-1h2m0-1h2m0-1h2m0-1h3m0-1h2m0-1h2m0-1h2m-27 21h1m0-1h2m0-1h3m0-1h2m0-1h2m0-1h2m0-1h2m0-1h2m0-1h2m0-1h2m0-1h2m0-1h2m0-1h2m0-1h1m-27 21h1m0-1h2m0-1h2m0-1h2m0-1h2m0-1h2m0-1h2m0-1h2m0-1h2m0-1h2m0-1h2m0-1h2m0-1h2m0-1h2m-27 23h2m0-1h2m0-1h2m0-1h2m0-1h2m0-1h2m0-1h2m0-1h2m0-1h2m0-1h2m0-1h2m0-1h2m0-1h2m0-1h1m-26 43h1m0-1h2m0-1h1m0-1h2m0-1h2m0-1h2m0-1h2m0-1h1m0-1h2m0-1h2m0-1h2m0-1h1m0-1h2m0-1h2m0-1h2m-26 15h2m0-1h2m0-1h1m0-1h2m0-1h2m0-1h1m0-1h2m0-1h2m0-1h1m0-1h2m0-1h2m0-1h1m0-1h2m0-1h2m0-1h1m0-1h1m-26 58h1m0-1h2m0-1h2m0-1h2m0-1h2m0-1h2m0-1h1m0-1h2m0-1h2m0-1h2m0-1h2m0-1h2m0-1h1m0-1h2m0-1h1m-26 26h2m0-1h2m0-1h2m0-1h1m0-1h2m0-1h2m0-1h2m0-1h2m0-1h1m0-1h2m0-1h2m0-1h2m0-1h2m0-1h2m-26 16h2m0-1h2m0-1h1m0-1h2m0-1h2m0-1h2m0-1h2m0-1h2m0-1h2m0-1h2m0-1h2m0-1h1m0-1h2m0-1h2m-26 25h2m0-1h2m0-1h2m0-1h2m0-1h1m0-1h2m0-1h2m0-1h2m0-1h2m0-1h2m0-1h1m0-1h2m0-1h2m0-1h2m-26 23h1m0-1h2m0-1h2m0-1h2m0-1h2m0-1h2m0-1h2m0-1h2m0-1h1m0-1h2m0-1h2m0-1h2m0-1h2m0-1h2m-26 20h1m0-1h2m0-1h2m0-1h2m0-1h2m0-1h2m0-1h1m0-1h2m0-1h2m0-1h2m0-1h2m0-1h2m0-1h1m0-1h2m0-1h1m-27 55h2m0-1h2m0-1h2m0-1h2m0-1h3m0-1h2m0-1h2m0-1h2m0-1h2m0-1h2m0-1h2m0-1h2m0-1h2m-27 14h3m0-1h2m0-1h2m0-1h2m0-1h2m0-1h3m0-1h2m0-1h2m0-1h2m0-1h3m0-1h2m0-1h2m-27 14h3m0-1h2m0-1h2m0-1h2m0-1h3m0-1h2m0-1h2m0-1h3m0-1h2m0-1h2m0-1h2m0-1h2m-26 22h2m0-1h2m0-1h2m0-1h2m0-1h2m0-1h2m0-1h2m0-1h1m0-1h2m0-1h2m0-1h2m0-1h2m0-1h2m0-1h1m-26 19h1m0-1h2m0-1h2m0-1h2m0-1h2m0-1h1m0-1h2m0-1h2m0-1h2m0-1h1m0-1h2m0-1h2m0-1h2m0-1h1m0-1h2m-25 20h1m0-1h1m0-1h2m0-1h2m0-1h1m0-1h2m0-1h1m0-1h2m0-1h2m0-1h1m0-1h2m0-1h1m0-1h2m0-1h2m0-1h1m0-1h2m-22 31h1m0-1h1m0-1h1m0-1h1m0-1h1m0-1h2m0-1h1m0-1h1m0-1h1m0-1h1m0-1h1m0-1h1m0-1h1m0-1h2m0-1h1m0-1h1m0-1h1m0-1h1m0-1h1m0-1h1m-.5 8.5v1m-1 0v1m-1 0v1m-1 0v1m-1 0v1m-1 0v1m-1 0v1m-1 0v1m-1 0v1m-1 0v1m-1 0v1m-1 0v1m-1 0v1m-1 0v1m-1 0v1m-1 0v1m-1 0v1m-1 0v1m-1 0v1m-1 0v1m-1 0v1m.5 .5h1m0-1h1m0-1h1m0-1h1m0-1h1m0-1h1m0-1h1m0-1h1m0-1h1m0-1h1m0-1h1m0-1h1m0-1h1m0-1h1m0-1h1m0-1h1m0-1h1m0-1h1m0-1h1m0-1h1m-20 22h1m0-1h1m0-1h1m0-1h1m0-1h1m0-1h1m0-1h1m0-1h1m0-1h1m0-1h1m0-1h1m0-1h1m0-1h1m0-1h1m0-1h1m0-1h1m0-1h1m0-1h1m0-1h1m0-1h1m-.5 1.5v1m-1 0v1m-1 0v1m-1 0v1m-1 0v1m-1 0v1m-1 0v1m-1 0v1m-1 0v1m-1 0v1m-1 0v1m-1 0v1m-1 0v1m-1 0v1m-1 0v1m-1 0v1m-1 0v1m-1 0v1m-1 0v1m-1 0v2m-.5 1.5h1m0-1h1m0-1h1m0-1h1m0-1h1m0-1h1m0-1h1m0-1h1m0-1h1m0-1h1m0-1h1m0-1h1m0-1h1m0-1h1m0-1h1m0-1h1m0-1h1m0-1h1m0-1h1m0-1h1m-.5 2.5v1m-1 0v1m-1 0v1m-1 0v1m-1 0v1m-1 0v1m-1 0v1m-1 0v1m-1 0v1m-1 0v1m-1 0v1m-1 0v1m-1 0v1m-1 0v1m-1 0v1m-1 0v1m-1 0v1m-1 0v1m-1 0v1m-1 0v2m.5-.5h1m0-1h1m0-1h1m0-1h1m0-1h1m0-1h1m0-1h1m0-1h1m0-1h1m0-1h1m0-1h1m0-1h1m0-1h1m0-1h1m0-1h1m0-1h1m0-1h1m0-1h2m-.5 1.5v1m-1 0v1m-1 0v1m-1 0v1m-1 0v1m-1 0v1m-1 0v1m-1 0v1m-1 0v1m-1 0v1m-1 0v1m-1 0v1m-1 0v1m-1 0v1m-1 0v1m-1 0v1m-1 0v1m-1 0v1m-1 0v2m18-14v1m-1 0v1m-1 0v1m-1 0v1m-1 0v1m-1 0v1m-1 0v1m-1 0v1m-1 0v1m-1 0v1m-1 0v1m-1 0v1m-1 0v1m-1 0v1m-1 0v1m-1 0v1m-1 0v1m-1 0v1m-1 0v1m-1 0v1m-1 0v1m-7.5 14.5h1m0-1h1m0-1h1m0-1h1m0-1h1m0-1h2m0-1h1m0-1h1m0-1h1m0-1h1m0-1h1m0-1h1m0-1h2m0-1h1m0-1h1m0-1h1m0-1h1m0-1h1m0-1h2m0-1h1m0-1h1m0-1h1m0-1h1m0-1h1m0-1h1m-21 19h1m0-1h1m0-1h1m0-1h2m0-1h1m0-1h1m0-1h1m0-1h2m0-1h1m0-1h1m0-1h1m0-1h2m0-1h1m0-1h1m0-1h1m0-1h2m0-1h1m-28 21h2m0-1h2m0-1h3m0-1h3m0-1h2m0-1h3m0-1h3m0-1h2m0-1h3m0-1h3m0-1h2m-27 10h3m0-1h3m0-1h2m0-1h3m0-1h3m0-1h3m0-1h3m0-1h2m0-1h3m0-1h2m-30 16h6m0-1h9m0-1h9m0-1h6m-30 17h30m-30 9h30m-29-2h1m0 1h4m0 1h3m0 1h4m0 1h3m0 1h4m0 1h3m0 1h4m0 1h3m-30-5h3m0 1h3m0 1h4m0 1h4m0 1h4m0 1h3m0 1h4m0 1h4m0 1h1m-30 4h8m0 1h10m0 1h9m0 1h3m-30 13h4m0-1h5m0-1h6m0-1h5m0-1h5m0-1h5m-30 6h2m0-1h6m0-1h5m0-1h5m0-1h6m0-1h5m0-1h1m-25 23h2m0-1h1m0-1h2m0-1h1m0-1h2m0-1h2m0-1h1m0-1h2m0-1h1m0-1h2m0-1h1m0-1h2m0-1h1m0-1h2m0-1h1m0-1h2m-25 16h2m0-1h1m0-1h2m0-1h1m0-1h2m0-1h1m0-1h2m0-1h1m0-1h2m0-1h1m0-1h2m0-1h1m0-1h2m0-1h1m0-1h2m0-1h2m-.5 2.5v2m-1 0v4m-1 0v3m-1 0v3m-1 0v4m-1 0v3m-1 0v3m-1 0v4m-1 0v2m8-24v1m1 0v2m1 0v2m1 0v2m1 0v2m1 0v1m1 0v2m1 0v2m1 0v2m1 0v2m1 0v2m1 0v2m1 0v2m1 0v2m-13-23v1m1 0v2m1 0v3m1 0v2m1 0v2m1 0v3m1 0v2m1 0v2m1 0v3m1 0v2m1 0v2m1 0v3m1 0v1m-12-25v2m1 0v2m1 0v3m1 0v2m1 0v3m1 0v3m1 0v2m1 0v3m1 0v2m1 0v3m1 0v3m1 0v1m-11-28v2m1 0v2m1 0v3m1 0v2m1 0v3m1 0v3m1 0v2m1 0v3m1 0v2m1 0v3m1 0v2m1 0v2m-11-22v2m1 0v5m1 0v5m1 0v5m1 0v5m1 0v5m1 0v5m1 0v1m-7-29v2m1 0v4m1 0v4m1 0v4m1 0v5m1 0v4m1 0v4m1 0v4m1 0v1m-8-28v4m1 0v9m1 0v8m1 0v9m1 0v1m-4-27v3m1 0v7m1 0v7m1 0v6m1 0v7m1 0v1m-5-26v2m1 0v3m1 0v4m1 0v3m1 0v3m1 0v4m1 0v3m1 0v4m1 0v3m1 0v3m1 0v3m55-673v1m-1 0v1m-1 0v1m-1 0v1m-1 0v1m-1 0v2m-1 0v1m-1 0v1m-1 0v1m-1 0v1m-1 0v1m-1 0v1m-1 0v2m-1 0v1m-1 0v1m-1 0v1m-1 0v1m-1 0v1m-1 0v2m-1 0v1m19-19v1m-1 0v1m-1 0v2m-1 0v1m-1 0v1m-1 0v1m-1 0v1m-1 0v1m-1 0v2m-1 0v1m-1 0v1m-1 0v1m-1 0v1m-1 0v1m-1 0v2m-1 0v1m-1 0v1m-1 0v1m-1 0v1m-1 0v1m19-12v1m-1 0v2m-1 0v1m-1 0v1m-1 0v2m-1 0v1m-1 0v1m-1 0v2m-1 0v1m-1 0v1m-1 0v2m-1 0v1m-1 0v2m-1 0v1m-1 0v1m-1 0v2m-1 0v1m-1 0v1m17 7v2m-1 0v2m-1 0v2m-1 0v2m-1 0v2m-1 0v2m-1 0v2m-1 0v2m-1 0v1m-1 0v2m-1 0v2m-1 0v2m-1 0v2m-1 0v2m13 0v1m-1 0v2m-1 0v1m-1 0v1m-1 0v1m-1 0v1m-1 0v2m-1 0v1m-1 0v1m-1 0v1m-1 0v1m-1 0v2m-1 0v1m-1 0v1m-1 0v1m-1 0v2m-1 0v1m-1 0v1m-1 0v1m-3.5 11.5h1m0-1h1m0-1h1m0-1h1m0-1h1m0-1h1m0-1h1m0-1h1m0-1h1m0-1h1m0-1h1m0-1h1m0-1h1m0-1h1m0-1h1m0-1h1m0-1h1m0-1h1m0-1h1m0-1h1m0-1h1m0-1h1m-30 23h5m0-1h7m0-1h7m0-1h8m0-1h3m-30 5h5m0-1h8m0-1h7m0-1h7m0-1h3m-29 27h4m0-1h4m0-1h4m0-1h4m0-1h4m0-1h4m0-1h4m0-1h1m-29 19h3m0-1h4m0-1h4m0-1h4m0-1h4m0-1h4m0-1h4m0-1h2m-29 12h3m0-1h4m0-1h4m0-1h4m0-1h4m0-1h4m0-1h4m0-1h2m-27 25h1m0-1h3m0-1h3m0-1h3m0-1h3m0-1h3m0-1h3m0-1h3m0-1h3m0-1h2m-28 24h2m0-1h2m0-1h2m0-1h2m0-1h3m0-1h2m0-1h2m0-1h2m0-1h2m0-1h2m0-1h2m0-1h2m0-1h2m0-1h1m-28 22h2m0-1h2m0-1h2m0-1h2m0-1h1m0-1h2m0-1h2m0-1h2m0-1h2m0-1h2m0-1h2m0-1h2m0-1h2m0-1h2m0-1h1m-28 16h1m0-1h2m0-1h2m0-1h2m0-1h2m0-1h1m0-1h2m0-1h2m0-1h2m0-1h2m0-1h2m0-1h2m0-1h2m0-1h2m0-1h2m-29 29h2m0-1h3m0-1h3m0-1h4m0-1h3m0-1h4m0-1h3m0-1h4m0-1h3m-29 17h2m0-1h4m0-1h4m0-1h3m0-1h4m0-1h4m0-1h3m0-1h4m0-1h1m-29 10h2m0-1h4m0-1h4m0-1h4m0-1h4m0-1h4m0-1h3m0-1h4m-29 27h2m0-1h3m0-1h2m0-1h3m0-1h2m0-1h3m0-1h3m0-1h2m0-1h3m0-1h2m0-1h3m0-1h1m-28 29h2m0-1h2m0-1h2m0-1h2m0-1h3m0-1h2m0-1h2m0-1h2m0-1h2m0-1h2m0-1h3m0-1h2m0-1h2m-28 22h1m0-1h2m0-1h2m0-1h2m0-1h2m0-1h2m0-1h2m0-1h2m0-1h2m0-1h2m0-1h2m0-1h2m0-1h2m0-1h2m0-1h1m-27 21h2m0-1h2m0-1h2m0-1h2m0-1h2m0-1h2m0-1h1m0-1h2m0-1h2m0-1h2m0-1h2m0-1h2m0-1h2m0-1h2m-26 24h2m0-1h1m0-1h2m0-1h2m0-1h2m0-1h2m0-1h1m0-1h2m0-1h2m0-1h2m0-1h2m0-1h1m0-1h2m0-1h2m0-1h1m-26 45h2m0-1h1m0-1h2m0-1h1m0-1h2m0-1h1m0-1h2m0-1h1m0-1h2m0-1h1m0-1h2m0-1h1m0-1h2m0-1h1m0-1h2m0-1h1m0-1h2m-26 18h1m0-1h1m0-1h2m0-1h1m0-1h2m0-1h1m0-1h1m0-1h2m0-1h1m0-1h2m0-1h1m0-1h2m0-1h1m0-1h2m0-1h1m0-1h1m0-1h2m0-1h1m0-1h1m-26 60h1m0-1h2m0-1h2m0-1h1m0-1h2m0-1h1m0-1h2m0-1h2m0-1h1m0-1h2m0-1h1m0-1h2m0-1h2m0-1h1m0-1h2m0-1h1m0-1h1m-26 28h2m0-1h2m0-1h1m0-1h2m0-1h1m0-1h2m0-1h1m0-1h2m0-1h2m0-1h1m0-1h2m0-1h1m0-1h2m0-1h1m0-1h2m0-1h2m-25 18h2m0-1h1m0-1h2m0-1h1m0-1h2m0-1h1m0-1h2m0-1h2m0-1h1m0-1h2m0-1h1m0-1h2m0-1h1m0-1h2m0-1h2m0-1h1m-25 28h2m0-1h1m0-1h2m0-1h1m0-1h2m0-1h1m0-1h2m0-1h1m0-1h1m0-1h2m0-1h1m0-1h2m0-1h1m0-1h2m0-1h1m0-1h1m0-1h2m-26 25h1m0-1h2m0-1h2m0-1h1m0-1h2m0-1h2m0-1h1m0-1h2m0-1h1m0-1h2m0-1h2m0-1h1m0-1h2m0-1h2m0-1h1m0-1h2m-26 22h1m0-1h2m0-1h2m0-1h1m0-1h2m0-1h1m0-1h2m0-1h2m0-1h1m0-1h2m0-1h1m0-1h2m0-1h2m0-1h1m0-1h2m0-1h1m0-1h1m-26 55h2m0-1h2m0-1h2m0-1h2m0-1h2m0-1h2m0-1h2m0-1h2m0-1h2m0-1h2m0-1h2m0-1h2m0-1h2m-26 15h1m0-1h2m0-1h2m0-1h2m0-1h2m0-1h2m0-1h2m0-1h3m0-1h2m0-1h2m0-1h2m0-1h2m0-1h2m-26 14h2m0-1h2m0-1h3m0-1h2m0-1h2m0-1h2m0-1h3m0-1h2m0-1h2m0-1h2m0-1h2m0-1h2m-24 26h2m0-1h1m0-1h1m0-1h2m0-1h1m0-1h1m0-1h2m0-1h1m0-1h1m0-1h2m0-1h1m0-1h1m0-1h2m0-1h1m0-1h1m0-1h2m0-1h1m0-1h1m-23 23h1m0-1h1m0-1h2m0-1h1m0-1h1m0-1h1m0-1h1m0-1h2m0-1h1m0-1h1m0-1h1m0-1h1m0-1h2m0-1h1m0-1h1m0-1h1m0-1h2m0-1h1m0-1h1m-.5 4.5v1m-1 0v1m-1 0v1m-1 0v1m-1 0v1m-1 0v1m-1 0v1m-1 0v1m-1 0v1m-1 0v1m-1 0v1m-1 0v1m-1 0v1m-1 0v1m-1 0v1m-1 0v1m-1 0v1m-1 0v1m-1 0v1m-1 0v1m-1 0v2m20-10v2m-1 0v1m-1 0v2m-1 0v2m-1 0v2m-1 0v1m-1 0v2m-1 0v2m-1 0v2m-1 0v2m-1 0v1m-1 0v2m-1 0v2m-1 0v2m-1 0v1m14-17v1m-1 0v3m-1 0v2m-1 0v3m-1 0v2m-1 0v2m-1 0v3m-1 0v2m-1 0v3m-1 0v2m-1 0v3m-1 0v1m11-25v2m-1 0v2m-1 0v2m-1 0v3m-1 0v2m-1 0v2m-1 0v3m-1 0v2m-1 0v2m-1 0v3m-1 0v3m10-23v1m-1 0v2m-1 0v3m-1 0v2m-1 0v2m-1 0v2m-1 0v3m-1 0v2m-1 0v2m-1 0v2m-1 0v2m10-20v1m-1 0v2m-1 0v2m-1 0v2m-1 0v2m-1 0v2m-1 0v2m-1 0v2m-1 0v2m-1 0v2m-1 0v2m10-18v1m-1 0v2m-1 0v2m-1 0v2m-1 0v1m-1 0v2m-1 0v2m-1 0v2m-1 0v2m-1 0v2m9-15v1m-1 0v1m-1 0v2m-1 0v1m-1 0v1m-1 0v2m-1 0v1m-1 0v2m-1 0v1m-1 0v2m-1 0v2m10-13v2m-1 0v3m-1 0v3m-1 0v3m-1 0v3m-1 0v3m-1 0v3m-1 0v3m-1 0v3m-1 0v3m-1 0v3m-1 0v3m11-32v1m-1 0v3m-1 0v3m-1 0v3m-1 0v3m-1 0v3m-1 0v2m-1 0v3m-1 0v3m-1 0v3m-1 0v3m-1 0v2m11-28v2m-1 0v2m-1 0v3m-1 0v2m-1 0v2m-1 0v3m-1 0v2m-1 0v3m-1 0v2m-1 0v3m-1 0v3m10-16v2m-1 0v1m-1 0v2m-1 0v1m-1 0v1m-1 0v2m-1 0v1m-1 0v2m-1 0v1m-1 0v2m-1 0v1m-1 0v2m11-15v1m-1 0v1m-1 0v1m-1 0v2m-1 0v1m-1 0v1m-1 0v1m-1 0v1m-1 0v2m-1 0v1m-1 0v2m-15.5 11.5h2m0-1h1m0-1h2m0-1h2m0-1h1m0-1h2m0-1h2m0-1h1m0-1h2m0-1h2m0-1h1m0-1h2m0-1h2m0-1h1m0-1h2m0-1h1m-27 3h2m0 1h2m0 1h2m0 1h3m0 1h2m0 1h2m0 1h2m0 1h2m0 1h2m0 1h2m0 1h2m0 1h2m0 1h2m-18 4h2m0 1h1m0 1h1m0 1h2m0 1h1m0 1h1m0 1h2m0 1h1m0 1h1m0 1h2m0 1h1m0 1h1m0 1h2m-7.5-19.5v3m1 0v3m1 0v3m1 0v4m1 0v3m1 0v3m1 0v4m1 0v2m4-19v4m-1 0v7m-1 0v8m-1 0v7m-1 0v5m16-24v1m-1 0v2m-1 0v1m-1 0v1m-1 0v2m-1 0v1m-1 0v1m-1 0v2m-1 0v1m-1 0v1m-1 0v2m-1 0v1m-1 0v1m-1 0v2m-1 0v1m-1 0v1m-1 0v2m17-22v1m-1 0v1m-1 0v1m-1 0v2m-1 0v1m-1 0v1m-1 0v2m-1 0v1m-1 0v1m-1 0v2m-1 0v1m-1 0v2m-1 0v1m-1 0v1m-1 0v2m-1 0v1m-1 0v1m-1 0v2m-.5 6.5h1m0-1h2m0-1h1m0-1h1m0-1h1m0-1h1m0-1h1m0-1h1m0-1h1m0-1h2m0-1h1m0-1h1m0-1h1m0-1h1m0-1h1m0-1h1m0-1h1m0-1h2m0-1h1m-22 27h1m0-1h2m0-1h3m0-1h2m0-1h3m0-1h3m0-1h2m0-1h3m0-1h3m0-1h2m0-1h3m0-1h2m-29 11h3m0-1h2m0-1h3m0-1h3m0-1h2m0-1h3m0-1h3m0-1h2m0-1h3m0-1h3m0-1h2m-29 18h1m0-1h3m0-1h4m0-1h4m0-1h4m0-1h4m0-1h4m0-1h4m0-1h1m-29 8h4m0-1h3m0-1h4m0-1h4m0-1h4m0-1h4m0-1h4m0-1h2m-29 10h6m0 1h6m0 1h5m0 1h6m0 1h5m0 1h2m-30-1h3m0 1h3m0 1h4m0 1h3m0 1h4m0 1h3m0 1h3m0 1h4m0 1h2m-29-4h1m0 1h3m0 1h3m0 1h3m0 1h3m0 1h4m0 1h3m0 1h3m0 1h3m0 1h3m-29-6h1m0 1h3m0 1h2m0 1h3m0 1h2m0 1h3m0 1h3m0 1h2m0 1h3m0 1h2m0 1h3m0 1h1m-28-10h2m0 1h2m0 1h3m0 1h2m0 1h3m0 1h2m0 1h3m0 1h2m0 1h3m0 1h3m0 1h2m0 1h1m-28-4h2m0 1h2m0 1h1m0 1h2m0 1h2m0 1h1m0 1h2m0 1h2m0 1h2m0 1h1m0 1h2m0 1h2m0 1h1m0 1h2m0 1h2m-26-5h3m0 1h2m0 1h2m0 1h2m0 1h2m0 1h2m0 1h2m0 1h2m0 1h2m0 1h2m0 1h2m0 1h3m-26-7h2m0 1h3m0 1h2m0 1h3m0 1h3m0 1h2m0 1h3m0 1h3m0 1h2m0 1h3m0 1h3m-29-2h5m0 1h10m0 1h10m0 1h5m-30-1h3m0 1h10m0 1h10m0 1h7" stroke="#fff" fill="none"/>
<rect x="67.5" y="607.5" width="43" height="17" fill="#000" stroke="#ffff00"/>
<rect x="67.5" y="636.5" width="57" height="17" fill="#000" stroke="#e87800"/>
<rect x="625.5" y="713.5" width="30" height="17" fill="#000" stroke="#ff00ff"/>
</g>
<rect x="61.5" y="50.5" width="600" height="699" fill="none" stroke="#fff"/>
<path d="M61,650.5h3M61,659.5h3M61,675.5h3M61,683.5h3M61,690.5h3" stroke="#fff"/>
<g fill="#fff"><text x="61" y="29" style="font-weight:bold;font-size:16px;letter-spacing:0.18px">Station: 72249 Dallas</text>
<text x="245" y="29" style="font-weight:bold;font-size:16px;letter-spacing:0.18px">Date: 14.05.2008</text>
<text x="394" y="29" style="font-weight:bold;font-size:16px;letter-spacing:0.18px">Time: 0000Z</text>
<text x="53" y="55" text-anchor="end">100</text>
<text x="53" y="326" text-anchor="end">200</text>
<text x="53" y="454" text-anchor="end">300</text>
<text x="53" y="534" text-anchor="end">400</text>
<text x="53" y="591" text-anchor="end">500</text>
<text x="53" y="635" text-anchor="end">600</text>
<text x="53" y="670" text-anchor="end">700</text>
<text x="53" y="699" text-anchor="end">800</text>
<text x="53" y="724" text-anchor="end">900</text>
<text x="53" y="745" text-anchor="end">1000</text>
<text x="670" y="49.5">16480m</text>
<text x="670" y="320.5">12200m</text>
<text x="670" y="448.5">9520m</text>
<text x="670" y="528.5">7480m</text>
<text x="670" y="585.5">5810m</text>
<text x="670" y="629.5">4353m</text>
<text x="670" y="664.5">3123m</text>
<text x="670" y="693.5">1992m</text>
<text x="670" y="718.5">984m</text>
<text x="60" y="768" text-anchor="middle">-50</text>
<text x="120" y="768" text-anchor="middle">-40</text>
<text x="180" y="768" text-anchor="middle">-30</text>
<text x="240" y="768" text-anchor="middle">-20</text>
<text x="300" y="768" text-anchor="middle">-10</text>
<text x="362" y="768" text-anchor="middle">0</text>
<text x="422" y="768" text-anchor="middle">10</text>
<text x="482" y="768" text-anchor="middle">20</text>
<text x="542" y="768" text-anchor="middle">30</text>
<text x="602" y="768" text-anchor="middle">40</text>
<text x="662" y="768" text-anchor="middle">50</text>
<text x="276" y="781">Temperature, Dewpoint  [ °C]</text>
<text x="62" y="805" text-anchor="middle">0</text>
<text x="117" y="805" text-anchor="middle">10</text>
<text x="171" y="805" text-anchor="middle">20</text>
<text x="226" y="805" text-anchor="middle">30</text>
<text x="280" y="805" text-anchor="middle">40</text>
<text x="335" y="805" text-anchor="middle">50</text>
<text x="389" y="805" text-anchor="middle">60</text>
<text x="444" y="805" text-anchor="middle">70</text>
<text x="498" y="805" text-anchor="middle">80</text>
<text x="553" y="805" text-anchor="middle">90</text>
<text x="607" y="805" text-anchor="middle">100</text>
<text x="662" y="805" text-anchor="middle">110</text>
<text x="307" y="819">Windspeed  [ knt ]</text>
<text x="62" y="843" text-anchor="middle">0</text>
<text x="122" y="843" text-anchor="middle">300</text>
<text x="182" y="843" text-anchor="middle">600</text>
<text x="242" y="843" text-anchor="middle">900</text>
<text x="302" y="843" text-anchor="middle">1200</text>
<text x="362" y="843" text-anchor="middle">1500</text>
<text x="422" y="843" text-anchor="middle">1800</text>
<text x="482" y="843" text-anchor="middle">2100</text>
<text x="542" y="843" text-anchor="middle">2400</text>
<text x="602" y="843" text-anchor="middle">2700</text>
<text x="662" y="843" text-anchor="middle">3000</text>
<text x="292" y="857">CAPE, CINH * 5  [ J/kg ]</text>
<text x="60" y="880" text-anchor="middle">-100</text>
<text x="135" y="880" text-anchor="middle">-50</text>
<text x="212" y="880" text-anchor="middle">0</text>
<text x="287" y="880" text-anchor="middle">50</text>
<text x="362" y="880" text-anchor="middle">100</text>
<text x="437" y="880" text-anchor="middle">150</text>
<text x="512" y="880" text-anchor="middle">200</text>
<text x="587" y="880" text-anchor="middle">250</text>
<text x="662" y="880" text-anchor="middle">300</text>
<text x="260" y="893">Storm Relative Helicity  [ m^2/s^2 ]</text>
<path d="M61.5,749V754M121.5,749V754M181.5,749V754M241.5,749V754M301.5,749V754M361.5,749V754M421.5,749V754M481.5,749V754M541.5,749V754M601.5,749V754M661.5,749V754M61.5,788V793M116.5,788V793M170.5,788V793M225.5,788V793M279.5,788V793M334.5,788V793M388.5,788V793M443.5,788V793M497.5,788V793M552.5,788V793M606.5,788V793M661.5,788V793M61.5,827V831M121.5,827V831M181.5,827V831M241.5,827V831M301.5,827V831M361.5,827V831M421.5,827V831M481.5,827V831M541.5,827V831M601.5,827V831M661.5,827V831M61.5,863V868M136.5,863V868M211.5,863V868M286.5,863V868M361.5,863V868M436.5,863V868M511.5,863V868M586.5,863V868M661.5,863V868" stroke="#fff" fill="none"/>
<text x="894" y="40" text-decoration="underline">Parameter</text>
<text x="1064" y="40" text-decoration="underline">Value LCL</text>
<text x="1152" y="40" text-decoration="underline">Value CCL</text>
<text x="1230" y="40" text-decoration="underline">Unit</text>
<text x="894" y="63">Convective Temperature:</text>
<text x="1124" y="63" fill="#ff0000" text-anchor="end">27.93</text>
<text x="1230" y="63">[°C]</text>
<text x="894" y="80">Snowfall Height:</text>
<text x="1124" y="80" text-anchor="end">3526.13</text>
<text x="1230" y="80">[m]</text>
<text x="894" y="124">Lifted Index:</text>
<text x="1124" y="124" fill="#ff0000" text-anchor="end">-9.84</text>
<text x="1214" y="124" fill="#ff0000" text-anchor="end">-9.90</text>
<text x="1230" y="124">[°C]</text>
<text x="894" y="141">CAPE:</text>
<text x="1124" y="141" fill="#ff0000" text-anchor="end">3503.02</text>
<text x="1214" y="141" fill="#ff0000" text-anchor="end">3544.03</text>
<text x="1230" y="141">[J/kg]</text>
<text x="894" y="158">CINH:</text>
<text x="1124" y="158" fill="#ff0000" text-anchor="end">44.73</text>
<text x="1230" y="158">[J/kg]</text>
<text x="894" y="175">CAPE Virt.:</text>
<text x="1124" y="175" fill="#ff0000" text-anchor="end">3761.08</text>
<text x="1214" y="175" fill="#ff0000" text-anchor="end">3801.72</text>
<text x="1230" y="175">[J/kg]</text>
<text x="894" y="192">CINH Virt.:</text>
<text x="1124" y="192" fill="#ff0000" text-anchor="end">4.43</text>
<text x="1230" y="192">[J/kg]</text>
<text x="894" y="209">DCAPE (LFS = 516mB):</text>
<text x="1124" y="209" fill="#ff0000" text-anchor="end">747.88</text>
<text x="1230" y="209">[J/kg]</text>
<text x="894" y="226">850-600 Lapse Rate:</text>
<text x="1124" y="226" fill="#ffff00" text-anchor="end">18.04</text>
<text x="1230" y="226">[°C]</text>
<text x="894" y="243">Fawbush-Miller Hail Size:</text>
<text x="1124" y="243" fill="#ff0000" text-anchor="end">6.4 - 7.6</text>
<text x="1230" y="243">[cm]</text>
<text x="894" y="260">Sig. Hail Param. (SHIP):</text>
<text x="1124" y="260" fill="#ff0000" text-anchor="end">7.15</text>
<text x="1230" y="260">[1]</text>
<text x="894" y="276">Max. Hail Size (new, new2, old):</text>
<text x="1230" y="276">[cm]</text>
<text x="894" y="297">LCL / CCL (AGL):</text>
<text x="1124" y="297" fill="#ff0000" text-anchor="end">693.59</text>
<text x="1214" y="297" fill="#ff0000" text-anchor="end">719.16</text>
<text x="1230" y="297">[m]</text>
<text x="894" y="314">Convective Height:</text>
<text x="1124" y="314" fill="#ff0000" text-anchor="end">12.13</text>
<text x="1214" y="314" fill="#ff0000" text-anchor="end">12.12</text>
<text x="1230" y="314">[km]</text>
<text x="894" y="359">Showalter Index:</text>
<text x="1124" y="359" fill="#ff0000" text-anchor="end">-7.56</text>
<text x="1230" y="359">[°C]</text>
<text x="894" y="376">Modified Thompson Index:</text>
<text x="1124" y="376" fill="#ff0000" text-anchor="end">45.08</text>
<text x="1230" y="376">[°C]</text>
<text x="894" y="393">Total Totals Index:</text>
<text x="1124" y="393" fill="#ff0000" text-anchor="end">57.00</text>
<text x="1230" y="393">[°C]</text>
<text x="894" y="410">KO Index:</text>
<text x="1124" y="410" fill="#ff0000" text-anchor="end">-31.09</text>
<text x="1230" y="410">[1]</text>
<text x="894" y="427">Craven SigSvr / 1000:</text>
<text x="1124" y="427" fill="#ff0000" text-anchor="end">82.09</text>
<text x="1230" y="427">[m^3/s^3]</text>
<text x="894" y="444">SCP RM (new, old):</text>
<text x="1230" y="444">[1]</text>
<text x="894" y="461">SCP LM (new, old):</text>
<text x="1230" y="461">[1]</text>
<text x="894" y="478">STP (new, old):</text>
<text x="1230" y="478">[1]</text>
<text x="894" y="495">SB STP (fix):</text>
<text x="1124" y="495" fill="#ff0000" text-anchor="end">4.59</text>
<text x="1230" y="495">[1]</text>
<text x="894" y="512">Derecho Comp Param:</text>
<text x="1124" y="512" fill="#ff0000" text-anchor="end">5.62</text>
<text x="1230" y="512">[1]</text>
<text x="894" y="529">MCS 18m/s (MMP, MSP):</text>
<text x="1230" y="529">[%]</text>
<text x="894" y="546">Exp. Supercell Index CH:</text>
<text x="1124" y="546" fill="#ff0000" text-anchor="end">8.26</text>
<text x="1230" y="546">[1]</text>
<text x="894" y="563">SWISS 12 Index:</text>
<text x="1124" y="563" fill="#ff0000" text-anchor="end">-14.90</text>
<text x="1230" y="563">[1]</text>
<text x="894" y="608">Storm Direction:</text>
<text x="1124" y="608" text-anchor="end">252.70</text>
<text x="1230" y="608">[°]</text>
<text x="894" y="625">Storm Motion:</text>
<text x="1124" y="625" fill="#ff0000" text-anchor="end">24.33</text>
<text x="1230" y="625">[knt]</text>
<text x="894" y="645">SR Wind Sfc-2km:</text>
<text x="1124" y="645" fill="#ff0000" text-anchor="end">28.40</text>
<text x="1230" y="645">[knt]</text>
<text x="894" y="662">SR Wind 4km-6km:</text>
<text x="1124" y="662" fill="#ff0000" text-anchor="end">17.02</text>
<text x="1230" y="662">[knt]</text>
<text x="894" y="679">SR Wind 9km-11km:</text>
<text x="1124" y="679" fill="#ff0000" text-anchor="end">62.02</text>
<text x="1230" y="679">[knt] LP</text>
<text x="894" y="699">Effective Shear 6000:</text>
<text x="1124" y="699" fill="#ff0000" text-anchor="end">45.52</text>
<text x="1230" y="699">[knt]</text>
<text x="894" y="719">Bulk Richardson Number:</text>
<text x="1124" y="719" fill="#ffff00" text-anchor="end">97.72</text>
<text x="1214" y="719" fill="#ffff00" text-anchor="end">98.87</text>
<text x="1230" y="719">[1]</text>
<text x="894" y="739">3km Effective SRH:</text>
<text x="1124" y="739" fill="#00ff00" text-anchor="end">-88.03</text>
<text x="1230" y="739">[m^2/s^2]</text>
<text x="894" y="756">Max 3km SRH (Sfc-2km):</text>
<text x="1124" y="756" fill="#00ff00" text-anchor="end">-164.98</text>
<text x="1230" y="756">[m^2/s^2]</text>
<text x="894" y="773">Max 3km SRH Level AGL:</text>
<text x="1124" y="773" fill="#00ff00" text-anchor="end">2000.00</text>
<text x="1230" y="773">[m]</text>
<text x="894" y="793">3km Energy Helicity Index:</text>
<text x="1124" y="793" fill="#00ff00" text-anchor="end">1.93</text>
<text x="1214" y="793" fill="#00ff00" text-anchor="end">1.95</text>
<text x="1230" y="793">[1]</text>
<text x="894" y="810">3km Vorticity Gen. Pot.:</text>
<text x="1124" y="810" fill="#ff0000" text-anchor="end">0.27</text>
<text x="1214" y="810" fill="#ff0000" text-anchor="end">0.27</text>
<text x="1230" y="810">[m/s^2]</text>
<text x="894" y="104" text-decoration="underline">Parcels: Using 100mB mean layer LCL + CCL</text>
<text x="894" y="338" text-decoration="underline">Convective Indices</text>
<text x="894" y="587" text-decoration="underline">Wind Parameters</text>
<text x="1124" y="276" fill="#ff0000" text-anchor="end">6.65</text>
<text x="1126" y="276">,</text>
<text x="1167" y="276" fill="#ff0000" text-anchor="end">14.26</text>
<text x="1169" y="276">,</text>
<text x="1205" y="276" fill="#ff0000" text-anchor="end">5.20</text>
<text x="1124" y="444" fill="#ff0000" text-anchor="end">3.25</text>
<text x="1126" y="444">,</text>
<text x="1160" y="444" fill="#ff0000" text-anchor="end">3.31</text>
<text x="1124" y="461" fill="#ff0000" text-anchor="end">1.62</text>
<text x="1126" y="461">,</text>
<text x="1160" y="461" fill="#ff0000" text-anchor="end">5.73</text>
<text x="1124" y="478" fill="#ff0000" text-anchor="end">0.79</text>
<text x="1126" y="478">,</text>
<text x="1160" y="478" fill="#ff0000" text-anchor="end">3.91</text>
<text x="1124" y="529" fill="#ff0000" text-anchor="end">99.91</text>
<text x="1126" y="529">,</text>
<text x="1136" y="529">---</text>
<text x="761" y="32" fill="#00ff00" text-anchor="middle" style="font-weight:bold;font-size:13px">OBS</text>
<text x="826" y="32" fill="#ff0080" text-anchor="middle" style="font-weight:bold;font-size:13px">SR</text>
<rect x="729" y="827" width="16" height="8" fill="#ff0000"/>
<text x="753" y="836" fill="#ff0000">Temperature Profile</text>
<rect x="729" y="847" width="16" height="8" fill="#00ffff"/>
<text x="753" y="856" fill="#00ffff">Dewpoint Profile</text>
<rect x="729" y="867" width="16" height="8" fill="#00ff00"/>
<text x="753" y="876" fill="#00ff00">OBS Windspeed Profile</text>
<rect x="729" y="887" width="16" height="8" fill="#ff0080"/>
<text x="753" y="896" fill="#ff0080">SR Windspeed Profile</text>
<rect x="729" y="907" width="16" height="8" fill="#c0c000"/>
<text x="753" y="916" fill="#c0c000">Sfc-3km Storm Relative Helicity Profile</text>
<rect x="729" y="927" width="16" height="8" fill="#404000"/>
<text x="753" y="936" fill="#404000">Effective Layer (CAPE &gt;= 100 J/kg)</text>
<rect x="1079" y="827" width="16" height="8" fill="#00ff00"/>
<text x="1103" y="836" fill="#00ff00">No / Non Severe Thunderstorms</text>
<rect x="1079" y="847" width="16" height="8" fill="#ffff00"/>
<text x="1103" y="856" fill="#ffff00">Scattered / Moderate Thunderstorms</text>
<rect x="1079" y="867" width="16" height="8" fill="#ff0000"/>
<text x="1103" y="876" fill="#ff0000">Widespread / Severe Thunderstorms</text>
<text x="72" y="621" fill="#ffff00">CAPE</text>
<text x="72" y="650" fill="#e87800" textLength="48">CINH * 5</text>
<text x="630" y="727" fill="#ff00ff">LCL</text></g>
</svg></body></html>
